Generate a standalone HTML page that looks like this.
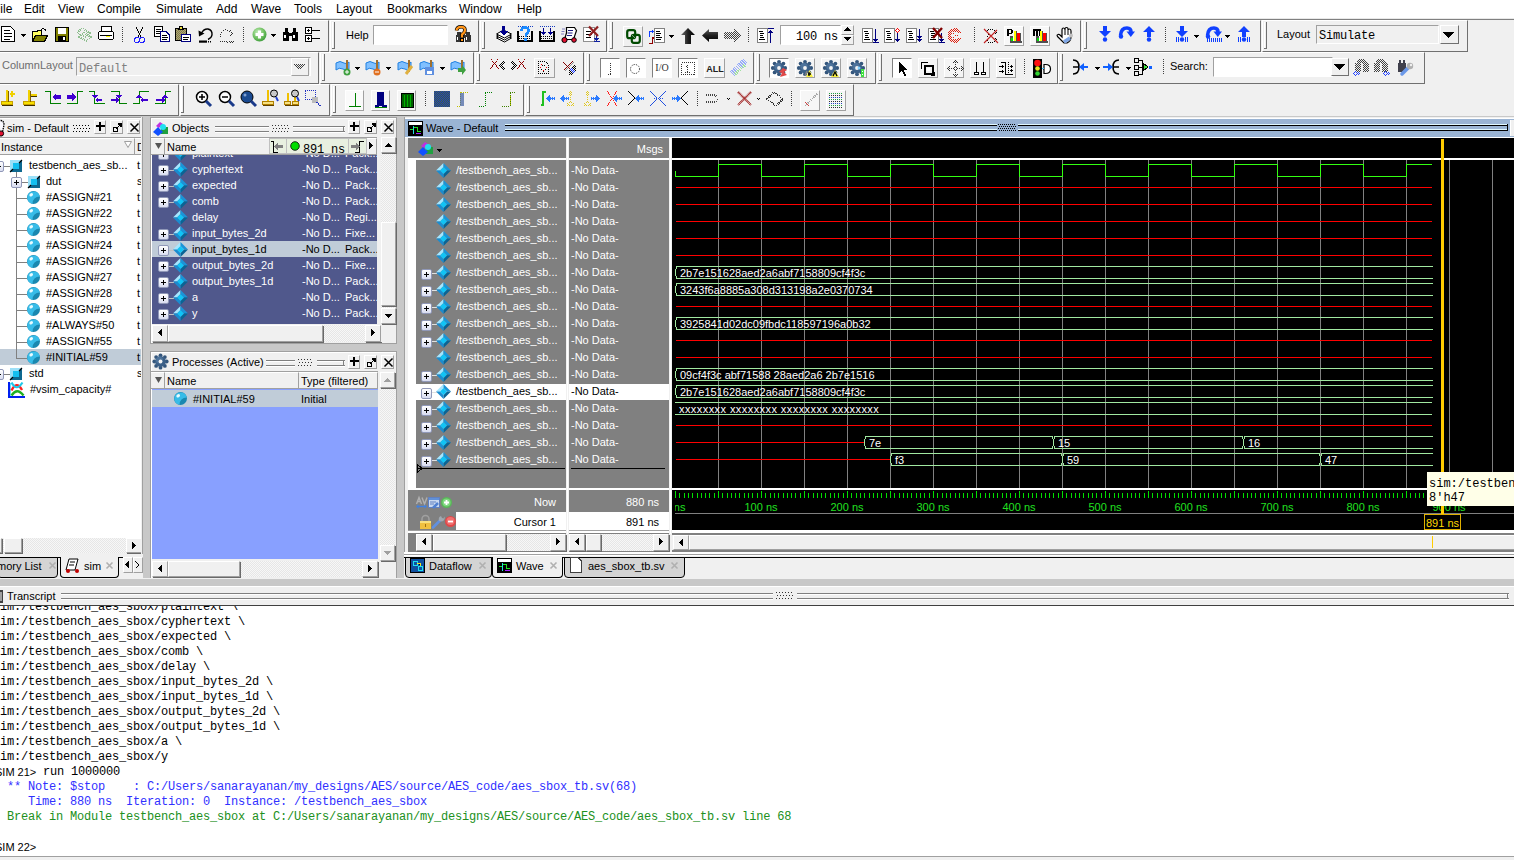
<!DOCTYPE html><html><head><meta charset="utf-8"><style>
html,body{margin:0;padding:0;}
body{width:1514px;height:860px;overflow:hidden;position:relative;background:#f0f0f0;font-family:'Liberation Sans',sans-serif;font-size:11px;}
div,svg,span{position:absolute;}
svg{overflow:visible}
</style></head><body>
<div style="left:0px;top:0px;width:1514px;height:18px;background:#ffffff;"></div>
<div style="left:0px;top:18px;width:1514px;height:1px;background:#e8e8e8;"></div>
<div style="left:0px;top:19px;width:1514px;height:1px;background:#808080;"></div>
<div style="left:-7px;top:2px;font-size:12px;line-height:14px;color:#000;white-space:pre;font-family:'Liberation Sans', sans-serif;">File</div>
<div style="left:24px;top:2px;font-size:12px;line-height:14px;color:#000;white-space:pre;font-family:'Liberation Sans', sans-serif;">Edit</div>
<div style="left:58px;top:2px;font-size:12px;line-height:14px;color:#000;white-space:pre;font-family:'Liberation Sans', sans-serif;">View</div>
<div style="left:97px;top:2px;font-size:12px;line-height:14px;color:#000;white-space:pre;font-family:'Liberation Sans', sans-serif;">Compile</div>
<div style="left:156px;top:2px;font-size:12px;line-height:14px;color:#000;white-space:pre;font-family:'Liberation Sans', sans-serif;">Simulate</div>
<div style="left:216px;top:2px;font-size:12px;line-height:14px;color:#000;white-space:pre;font-family:'Liberation Sans', sans-serif;">Add</div>
<div style="left:251px;top:2px;font-size:12px;line-height:14px;color:#000;white-space:pre;font-family:'Liberation Sans', sans-serif;">Wave</div>
<div style="left:294px;top:2px;font-size:12px;line-height:14px;color:#000;white-space:pre;font-family:'Liberation Sans', sans-serif;">Tools</div>
<div style="left:336px;top:2px;font-size:12px;line-height:14px;color:#000;white-space:pre;font-family:'Liberation Sans', sans-serif;">Layout</div>
<div style="left:387px;top:2px;font-size:12px;line-height:14px;color:#000;white-space:pre;font-family:'Liberation Sans', sans-serif;">Bookmarks</div>
<div style="left:459px;top:2px;font-size:12px;line-height:14px;color:#000;white-space:pre;font-family:'Liberation Sans', sans-serif;">Window</div>
<div style="left:517px;top:2px;font-size:12px;line-height:14px;color:#000;white-space:pre;font-family:'Liberation Sans', sans-serif;">Help</div>
<div style="left:0px;top:20px;width:1514px;height:96px;background:#f0f0f0;"></div>
<div style="left:-2px;top:20px;width:331px;height:32px;background:#f0f0f0;box-sizing:border-box;border-right:1px solid #707070;border-bottom:1px solid #707070;border-top:1px solid #fff;border-left:1px solid #fff;"></div>
<div style="left:330px;top:20px;width:149px;height:32px;background:#f0f0f0;box-sizing:border-box;border-right:1px solid #707070;border-bottom:1px solid #707070;border-top:1px solid #fff;border-left:1px solid #fff;"></div>
<div style="left:480px;top:20px;width:127px;height:32px;background:#f0f0f0;box-sizing:border-box;border-right:1px solid #707070;border-bottom:1px solid #707070;border-top:1px solid #fff;border-left:1px solid #fff;"></div>
<div style="left:608px;top:20px;width:473px;height:32px;background:#f0f0f0;box-sizing:border-box;border-right:1px solid #707070;border-bottom:1px solid #707070;border-top:1px solid #fff;border-left:1px solid #fff;"></div>
<div style="left:1082px;top:20px;width:179px;height:32px;background:#f0f0f0;box-sizing:border-box;border-right:1px solid #707070;border-bottom:1px solid #707070;border-top:1px solid #fff;border-left:1px solid #fff;"></div>
<div style="left:1262px;top:20px;width:206px;height:32px;background:#f0f0f0;box-sizing:border-box;border-right:1px solid #707070;border-bottom:1px solid #707070;border-top:1px solid #fff;border-left:1px solid #fff;"></div>
<div style="left:-2px;top:52px;width:321px;height:32px;background:#f0f0f0;box-sizing:border-box;border-right:1px solid #707070;border-bottom:1px solid #707070;border-top:1px solid #fff;border-left:1px solid #fff;"></div>
<div style="left:320px;top:52px;width:154px;height:32px;background:#f0f0f0;box-sizing:border-box;border-right:1px solid #707070;border-bottom:1px solid #707070;border-top:1px solid #fff;border-left:1px solid #fff;"></div>
<div style="left:475px;top:52px;width:109px;height:32px;background:#f0f0f0;box-sizing:border-box;border-right:1px solid #707070;border-bottom:1px solid #707070;border-top:1px solid #fff;border-left:1px solid #fff;"></div>
<div style="left:585px;top:52px;width:169px;height:32px;background:#f0f0f0;box-sizing:border-box;border-right:1px solid #707070;border-bottom:1px solid #707070;border-top:1px solid #fff;border-left:1px solid #fff;"></div>
<div style="left:755px;top:52px;width:121px;height:32px;background:#f0f0f0;box-sizing:border-box;border-right:1px solid #707070;border-bottom:1px solid #707070;border-top:1px solid #fff;border-left:1px solid #fff;"></div>
<div style="left:877px;top:52px;width:181px;height:32px;background:#f0f0f0;box-sizing:border-box;border-right:1px solid #707070;border-bottom:1px solid #707070;border-top:1px solid #fff;border-left:1px solid #fff;"></div>
<div style="left:1058px;top:52px;width:367px;height:32px;background:#f0f0f0;box-sizing:border-box;border-right:1px solid #707070;border-bottom:1px solid #707070;border-top:1px solid #fff;border-left:1px solid #fff;"></div>
<div style="left:-2px;top:84px;width:181px;height:32px;background:#f0f0f0;box-sizing:border-box;border-right:1px solid #707070;border-bottom:1px solid #707070;border-top:1px solid #fff;border-left:1px solid #fff;"></div>
<div style="left:180px;top:84px;width:150px;height:32px;background:#f0f0f0;box-sizing:border-box;border-right:1px solid #707070;border-bottom:1px solid #707070;border-top:1px solid #fff;border-left:1px solid #fff;"></div>
<div style="left:331px;top:84px;width:193px;height:32px;background:#f0f0f0;box-sizing:border-box;border-right:1px solid #707070;border-bottom:1px solid #707070;border-top:1px solid #fff;border-left:1px solid #fff;"></div>
<div style="left:525px;top:84px;width:329px;height:32px;background:#f0f0f0;box-sizing:border-box;border-right:1px solid #707070;border-bottom:1px solid #707070;border-top:1px solid #fff;border-left:1px solid #fff;"></div>
<div style="left:332px;top:22px;width:1px;height:27px;background:#fff;"></div>
<div style="left:334px;top:22px;width:1px;height:27px;background:#707070;"></div>
<div style="left:332px;top:48px;width:3px;height:1px;background:#707070;"></div>
<div style="left:482px;top:22px;width:1px;height:27px;background:#fff;"></div>
<div style="left:484px;top:22px;width:1px;height:27px;background:#707070;"></div>
<div style="left:482px;top:48px;width:3px;height:1px;background:#707070;"></div>
<div style="left:610px;top:22px;width:1px;height:27px;background:#fff;"></div>
<div style="left:612px;top:22px;width:1px;height:27px;background:#707070;"></div>
<div style="left:610px;top:48px;width:3px;height:1px;background:#707070;"></div>
<div style="left:1084px;top:22px;width:1px;height:27px;background:#fff;"></div>
<div style="left:1086px;top:22px;width:1px;height:27px;background:#707070;"></div>
<div style="left:1084px;top:48px;width:3px;height:1px;background:#707070;"></div>
<div style="left:1264px;top:22px;width:1px;height:27px;background:#fff;"></div>
<div style="left:1266px;top:22px;width:1px;height:27px;background:#707070;"></div>
<div style="left:1264px;top:48px;width:3px;height:1px;background:#707070;"></div>
<div style="left:322px;top:54px;width:1px;height:27px;background:#fff;"></div>
<div style="left:324px;top:54px;width:1px;height:27px;background:#707070;"></div>
<div style="left:322px;top:80px;width:3px;height:1px;background:#707070;"></div>
<div style="left:477px;top:54px;width:1px;height:27px;background:#fff;"></div>
<div style="left:479px;top:54px;width:1px;height:27px;background:#707070;"></div>
<div style="left:477px;top:80px;width:3px;height:1px;background:#707070;"></div>
<div style="left:587px;top:54px;width:1px;height:27px;background:#fff;"></div>
<div style="left:589px;top:54px;width:1px;height:27px;background:#707070;"></div>
<div style="left:587px;top:80px;width:3px;height:1px;background:#707070;"></div>
<div style="left:757px;top:54px;width:1px;height:27px;background:#fff;"></div>
<div style="left:759px;top:54px;width:1px;height:27px;background:#707070;"></div>
<div style="left:757px;top:80px;width:3px;height:1px;background:#707070;"></div>
<div style="left:879px;top:54px;width:1px;height:27px;background:#fff;"></div>
<div style="left:881px;top:54px;width:1px;height:27px;background:#707070;"></div>
<div style="left:879px;top:80px;width:3px;height:1px;background:#707070;"></div>
<div style="left:1060px;top:54px;width:1px;height:27px;background:#fff;"></div>
<div style="left:1062px;top:54px;width:1px;height:27px;background:#707070;"></div>
<div style="left:1060px;top:80px;width:3px;height:1px;background:#707070;"></div>
<div style="left:181px;top:86px;width:1px;height:27px;background:#fff;"></div>
<div style="left:183px;top:86px;width:1px;height:27px;background:#707070;"></div>
<div style="left:181px;top:112px;width:3px;height:1px;background:#707070;"></div>
<div style="left:333px;top:86px;width:1px;height:27px;background:#fff;"></div>
<div style="left:335px;top:86px;width:1px;height:27px;background:#707070;"></div>
<div style="left:333px;top:112px;width:3px;height:1px;background:#707070;"></div>
<div style="left:527px;top:86px;width:1px;height:27px;background:#fff;"></div>
<div style="left:529px;top:86px;width:1px;height:27px;background:#707070;"></div>
<div style="left:527px;top:112px;width:3px;height:1px;background:#707070;"></div>
<svg style="left:1px;top:26px;" width="14" height="16" viewBox="0 0 14 16" shape-rendering="crispEdges"><path d="M0.5,0.5 H9.5 L13.5,4.5 V15.5 H0.5 Z" fill="#fff" stroke="#000"/><rect x="3" y="4" width="6" height="1" fill="#000"/><rect x="3" y="7" width="8" height="1" fill="#000"/><rect x="3" y="10" width="8" height="1" fill="#000"/><rect x="3" y="13" width="6" height="1" fill="#000"/></svg>
<svg style="left:21px;top:34px;" width="6" height="4" viewBox="0 0 6 4" shape-rendering="crispEdges"><polygon points="0,0 5,0 2.5,3" fill="#000"/></svg>
<svg style="left:32px;top:28px;" width="16" height="14" viewBox="0 0 16 14" shape-rendering="crispEdges"><path d="M0.5,3.5 H5 L6,2 H9 V13.5 H0.5Z" fill="#ffff60" stroke="#000"/><path d="M0.5,13.5 L3.5,7.5 H15.5 L12.5,13.5Z" fill="#808000" stroke="#000"/><path d="M9,2 Q12,-1 14,3" fill="none" stroke="#000"/></svg>
<svg style="left:55px;top:27px;" width="14" height="15" viewBox="0 0 14 15" shape-rendering="crispEdges"><rect x="0.5" y="0.5" width="13" height="14" fill="#808000" stroke="#000"/><rect x="3" y="1" width="8" height="6" fill="#fff"/><rect x="3" y="9" width="8" height="5" fill="#000"/><rect x="8" y="10" width="2" height="3" fill="#fff"/></svg>
<svg style="left:76px;top:26px;" width="16" height="16" viewBox="0 0 16 16" shape-rendering="crispEdges"><path d="M1,7 L6,2 L14,7 L9,11Z" fill="none" stroke="#8fbf8f" stroke-width="2" stroke-dasharray="1 1"/><path d="M3,11 L8,7 L15,11 L10,15Z" fill="none" stroke="#8fbf8f" stroke-width="2" stroke-dasharray="1 1"/></svg>
<svg style="left:98px;top:26px;" width="16" height="15" viewBox="0 0 16 15" shape-rendering="crispEdges"><rect x="3.5" y="0.5" width="10" height="5" fill="#fff" stroke="#000"/><rect x="0.5" y="5.5" width="15" height="8" rx="2" fill="#fff" stroke="#000"/><rect x="2" y="9" width="12" height="1" fill="#000"/><rect x="8" y="10" width="4" height="1" fill="#ff0"/></svg>
<svg style="left:122px;top:27px;" width="1" height="16" viewBox="0 0 1 16" shape-rendering="crispEdges"><rect x="0" y="0" width="1" height="1" fill="#404040"/><rect x="0" y="2" width="1" height="1" fill="#404040"/><rect x="0" y="4" width="1" height="1" fill="#404040"/><rect x="0" y="6" width="1" height="1" fill="#404040"/><rect x="0" y="8" width="1" height="1" fill="#404040"/><rect x="0" y="10" width="1" height="1" fill="#404040"/><rect x="0" y="12" width="1" height="1" fill="#404040"/><rect x="0" y="14" width="1" height="1" fill="#404040"/></svg>
<svg style="left:134px;top:27px;" width="11" height="16" viewBox="0 0 11 16" shape-rendering="crispEdges"><path d="M2,0 L7,10 M9,0 L4,10" stroke="#000" stroke-width="1"/><circle cx="3" cy="13" r="2.5" fill="none" stroke="#22f"/><circle cx="8" cy="13" r="2.5" fill="none" stroke="#22f"/></svg>
<svg style="left:154px;top:26px;" width="16" height="16" viewBox="0 0 16 16" shape-rendering="crispEdges"><rect x="0.5" y="0.5" width="8" height="10" fill="#fff" stroke="#000"/><path d="M2,3.5 H7 M2,5.5 H7 M2,7.5 H6" stroke="#000"/><path d="M6.5,5.5 H12 L15.5,9 V15.5 H6.5Z" fill="#fff" stroke="#000080"/><path d="M8,9.5 H13 M8,11.5 H14 M8,13.5 H13" stroke="#000"/></svg>
<svg style="left:175px;top:26px;" width="16" height="16" viewBox="0 0 16 16" shape-rendering="crispEdges"><rect x="0.5" y="2.5" width="11" height="12" fill="#807a50" stroke="#000"/><rect x="1" y="3" width="1" height="1" fill="#b0a870"/><rect x="1" y="5" width="1" height="1" fill="#b0a870"/><rect x="1" y="7" width="1" height="1" fill="#b0a870"/><rect x="1" y="9" width="1" height="1" fill="#b0a870"/><rect x="1" y="11" width="1" height="1" fill="#b0a870"/><rect x="1" y="13" width="1" height="1" fill="#b0a870"/><rect x="2" y="4" width="1" height="1" fill="#b0a870"/><rect x="2" y="6" width="1" height="1" fill="#b0a870"/><rect x="2" y="8" width="1" height="1" fill="#b0a870"/><rect x="2" y="10" width="1" height="1" fill="#b0a870"/><rect x="2" y="12" width="1" height="1" fill="#b0a870"/><rect x="3" y="3" width="1" height="1" fill="#b0a870"/><rect x="3" y="5" width="1" height="1" fill="#b0a870"/><rect x="3" y="7" width="1" height="1" fill="#b0a870"/><rect x="3" y="9" width="1" height="1" fill="#b0a870"/><rect x="3" y="11" width="1" height="1" fill="#b0a870"/><rect x="3" y="13" width="1" height="1" fill="#b0a870"/><rect x="4" y="4" width="1" height="1" fill="#b0a870"/><rect x="4" y="6" width="1" height="1" fill="#b0a870"/><rect x="4" y="8" width="1" height="1" fill="#b0a870"/><rect x="4" y="10" width="1" height="1" fill="#b0a870"/><rect x="4" y="12" width="1" height="1" fill="#b0a870"/><rect x="5" y="3" width="1" height="1" fill="#b0a870"/><rect x="5" y="5" width="1" height="1" fill="#b0a870"/><rect x="5" y="7" width="1" height="1" fill="#b0a870"/><rect x="5" y="9" width="1" height="1" fill="#b0a870"/><rect x="5" y="11" width="1" height="1" fill="#b0a870"/><rect x="5" y="13" width="1" height="1" fill="#b0a870"/><rect x="6" y="4" width="1" height="1" fill="#b0a870"/><rect x="6" y="6" width="1" height="1" fill="#b0a870"/><rect x="6" y="8" width="1" height="1" fill="#b0a870"/><rect x="6" y="10" width="1" height="1" fill="#b0a870"/><rect x="6" y="12" width="1" height="1" fill="#b0a870"/><rect x="7" y="3" width="1" height="1" fill="#b0a870"/><rect x="7" y="5" width="1" height="1" fill="#b0a870"/><rect x="7" y="7" width="1" height="1" fill="#b0a870"/><rect x="7" y="9" width="1" height="1" fill="#b0a870"/><rect x="7" y="11" width="1" height="1" fill="#b0a870"/><rect x="7" y="13" width="1" height="1" fill="#b0a870"/><rect x="8" y="4" width="1" height="1" fill="#b0a870"/><rect x="8" y="6" width="1" height="1" fill="#b0a870"/><rect x="8" y="8" width="1" height="1" fill="#b0a870"/><rect x="8" y="10" width="1" height="1" fill="#b0a870"/><rect x="8" y="12" width="1" height="1" fill="#b0a870"/><rect x="9" y="3" width="1" height="1" fill="#b0a870"/><rect x="9" y="5" width="1" height="1" fill="#b0a870"/><rect x="9" y="7" width="1" height="1" fill="#b0a870"/><rect x="9" y="9" width="1" height="1" fill="#b0a870"/><rect x="9" y="11" width="1" height="1" fill="#b0a870"/><rect x="9" y="13" width="1" height="1" fill="#b0a870"/><rect x="10" y="4" width="1" height="1" fill="#b0a870"/><rect x="10" y="6" width="1" height="1" fill="#b0a870"/><rect x="10" y="8" width="1" height="1" fill="#b0a870"/><rect x="10" y="10" width="1" height="1" fill="#b0a870"/><rect x="10" y="12" width="1" height="1" fill="#b0a870"/><path d="M3.5,3.5 L5,0.5 H7 L8.5,3.5Z" fill="#f0e040" stroke="#000"/><rect x="6.5" y="8.5" width="9" height="7" fill="#fff" stroke="#000080"/><path d="M8,11.5 H14 M8,13.5 H13" stroke="#000"/></svg>
<svg style="left:198px;top:27px;" width="16" height="16" viewBox="0 0 16 16"><path d="M3.5,6 Q6,1.5 10,2 Q14.5,3 14,8 Q13.5,11 10,12.5" fill="none" stroke="#000" stroke-width="1.4"/><path d="M0.5,3.5 L6.5,6.5 L1,9.5Z" fill="#000"/><rect x="1" y="13.5" width="8" height="2.2" fill="#000"/><rect x="10" y="14" width="1" height="1.5" fill="#000"/><rect x="12" y="14" width="1" height="1.5" fill="#000"/></svg>
<svg style="left:219px;top:27px;" width="16" height="16" viewBox="0 0 16 16" shape-rendering="crispEdges"><rect x="1" y="9" width="1" height="1" fill="#303030"/><rect x="1" y="7" width="1" height="1" fill="#303030"/><rect x="2" y="5" width="1" height="1" fill="#303030"/><rect x="4" y="3" width="1" height="1" fill="#303030"/><rect x="6" y="2" width="1" height="1" fill="#303030"/><rect x="8" y="3" width="1" height="1" fill="#303030"/><rect x="10" y="4" width="1" height="1" fill="#303030"/><rect x="12" y="5" width="1" height="1" fill="#303030"/><rect x="11" y="3" width="1" height="1" fill="#303030"/><rect x="13" y="6" width="1" height="1" fill="#303030"/><rect x="12" y="7" width="1" height="1" fill="#303030"/><rect x="11" y="8" width="1" height="1" fill="#303030"/><rect x="1" y="14" width="1" height="1" fill="#303030"/><rect x="3" y="14" width="1" height="1" fill="#303030"/><rect x="5" y="14" width="1" height="1" fill="#303030"/><rect x="7" y="14" width="1" height="1" fill="#303030"/><rect x="8" y="15" width="1" height="1" fill="#303030"/><rect x="10" y="14" width="1" height="1" fill="#303030"/><rect x="11" y="15" width="1" height="1" fill="#303030"/><rect x="12" y="14" width="1" height="1" fill="#303030"/><rect x="13" y="15" width="1" height="1" fill="#303030"/><rect x="14" y="14" width="1" height="1" fill="#303030"/></svg>
<svg style="left:243px;top:27px;" width="1" height="16" viewBox="0 0 1 16" shape-rendering="crispEdges"><rect x="0" y="0" width="1" height="1" fill="#404040"/><rect x="0" y="2" width="1" height="1" fill="#404040"/><rect x="0" y="4" width="1" height="1" fill="#404040"/><rect x="0" y="6" width="1" height="1" fill="#404040"/><rect x="0" y="8" width="1" height="1" fill="#404040"/><rect x="0" y="10" width="1" height="1" fill="#404040"/><rect x="0" y="12" width="1" height="1" fill="#404040"/><rect x="0" y="14" width="1" height="1" fill="#404040"/></svg>
<svg style="left:252px;top:27px;" width="15" height="15" viewBox="0 0 15 15"><defs><radialGradient id="ggp" cx="0.4" cy="0.35" r="0.7"><stop offset="0" stop-color="#c8f0c0"/><stop offset="0.6" stop-color="#70c060"/><stop offset="1" stop-color="#3a9a3a"/></radialGradient></defs><circle cx="7.5" cy="7.5" r="7" fill="url(#ggp)"/><rect x="3.5" y="6" width="8" height="3" fill="#fff"/><rect x="6" y="3.5" width="3" height="8" fill="#fff"/></svg>
<svg style="left:271px;top:34px;" width="6" height="4" viewBox="0 0 6 4" shape-rendering="crispEdges"><polygon points="0,0 5,0 2.5,3" fill="#000"/></svg>
<svg style="left:282px;top:27px;" width="17" height="14" viewBox="0 0 17 14" shape-rendering="crispEdges"><rect x="1" y="5" width="6" height="9" rx="1" fill="#000"/><rect x="10" y="5" width="6" height="9" rx="1" fill="#000"/><rect x="3" y="1" width="3" height="5" fill="#000"/><rect x="11" y="1" width="3" height="5" fill="#000"/><rect x="6" y="6" width="5" height="3" fill="#000"/><rect x="2" y="8" width="2" height="3" fill="#fff"/><rect x="11" y="8" width="2" height="3" fill="#fff"/></svg>
<svg style="left:305px;top:27px;" width="15" height="15" viewBox="0 0 15 15" shape-rendering="crispEdges"><rect x="0.5" y="0.5" width="6" height="6" fill="#fff" stroke="#000"/><rect x="0.5" y="8.5" width="6" height="6" fill="#fff" stroke="#000"/><rect x="2" y="3" width="3" height="1" fill="#000"/><rect x="3" y="2" width="1" height="3" fill="#000"/><rect x="2" y="11" width="3" height="1" fill="#000"/><rect x="3" y="10" width="1" height="3" fill="#000"/><rect x="7" y="3" width="8" height="1" fill="#000"/><rect x="7" y="11" width="8" height="1" fill="#000"/></svg>
<div style="left:346px;top:29px;font-size:11px;line-height:13px;color:#000;white-space:pre;font-family:'Liberation Sans', sans-serif;">Help</div>
<div style="left:373px;top:25px;width:75px;height:20px;background:#fff;box-sizing:border-box;border:1px solid;border-color:#a0a0a0 #fff #fff #a0a0a0;"></div>
<svg style="left:455px;top:26px;" width="16" height="16" viewBox="0 0 16 16" shape-rendering="crispEdges"><rect x="1" y="9" width="6" height="7" fill="#333"/><rect x="2" y="6" width="4" height="4" fill="#333"/><rect x="10" y="9" width="6" height="7" fill="#333"/><rect x="11" y="6" width="4" height="4" fill="#333"/><rect x="6" y="9" width="5" height="3" fill="#333"/><rect x="2" y="11" width="1" height="3" fill="#fff"/><rect x="11" y="11" width="1" height="3" fill="#fff"/></svg>
<svg style="left:455px;top:26px;" width="16" height="16" viewBox="0 0 16 16"><path d="M1.5,4.5 Q2,0.8 6,0.8 Q10,0.8 10,4 Q10,6.5 7,8.5 V11.5" fill="none" stroke="#000" stroke-width="3.6"/><path d="M1.5,4.5 Q2,0.8 6,0.8 Q10,0.8 10,4 Q10,6.5 7,8.5 V11.5" fill="none" stroke="#ff9418" stroke-width="2.2"/><rect x="5.5" y="12.5" width="3" height="3" fill="#ff9418" stroke="#000"/></svg>
<svg style="left:496px;top:26px;" width="16" height="17" viewBox="0 0 16 17"><path d="M0.5,12 L7.5,8 L15.5,12 L8.5,16Z" fill="#fff" stroke="#000"/><path d="M0.5,10 L7.5,6 L15.5,10 L8.5,14Z" fill="#fff" stroke="#000"/><path d="M0.5,8 L7.5,4 L15.5,8 L8.5,12Z" fill="#fff" stroke="#000"/></svg></svg>
<svg style="left:496px;top:26px;" width="16" height="17" viewBox="0 0 16 17" shape-rendering="crispEdges"><rect x="6" y="0" width="3" height="5" fill="#00008c"/><path d="M3,5 H12 L7.5,9.5Z" fill="#00008c"/></svg>
<svg style="left:517px;top:26px;" width="16" height="16" viewBox="0 0 16 16" shape-rendering="crispEdges"><rect x="0" y="5" width="2" height="11" fill="#000"/><rect x="14" y="5" width="2" height="11" fill="#000"/><rect x="0" y="14" width="16" height="2" fill="#000"/><rect x="2" y="10" width="1" height="1" fill="#000"/><rect x="2" y="12" width="1" height="1" fill="#000"/><rect x="4" y="10" width="1" height="1" fill="#000"/><rect x="4" y="12" width="1" height="1" fill="#000"/><rect x="6" y="10" width="1" height="1" fill="#000"/><rect x="6" y="12" width="1" height="1" fill="#000"/><rect x="8" y="10" width="1" height="1" fill="#000"/><rect x="8" y="12" width="1" height="1" fill="#000"/><rect x="10" y="10" width="1" height="1" fill="#000"/><rect x="10" y="12" width="1" height="1" fill="#000"/><rect x="12" y="10" width="1" height="1" fill="#000"/><rect x="12" y="12" width="1" height="1" fill="#000"/><rect x="14" y="10" width="1" height="1" fill="#000"/><rect x="14" y="12" width="1" height="1" fill="#000"/><rect x="1" y="0" width="1" height="1" fill="#1a40c0"/><rect x="3" y="0" width="1" height="1" fill="#1a40c0"/><rect x="5" y="0" width="1" height="1" fill="#1a40c0"/><rect x="7" y="0" width="1" height="1" fill="#1a40c0"/><rect x="9" y="0" width="1" height="1" fill="#1a40c0"/><rect x="11" y="0" width="1" height="1" fill="#1a40c0"/><rect x="13" y="0" width="1" height="1" fill="#1a40c0"/><rect x="15" y="0" width="1" height="1" fill="#1a40c0"/><path d="M4.5,5 Q4.5,1.5 8,1.5 Q11.5,1.5 11.5,5 Q11.5,7 9,8.5 V11" fill="none" stroke="#1a8aff" stroke-width="2.6"/><rect x="7" y="12" width="3" height="3" fill="#1a8aff"/></svg>
<svg style="left:539px;top:26px;" width="16" height="16" viewBox="0 0 16 16" shape-rendering="crispEdges"><rect x="0" y="5" width="2" height="11" fill="#000"/><rect x="14" y="5" width="2" height="11" fill="#000"/><rect x="0" y="14" width="16" height="2" fill="#000"/><rect x="2" y="10" width="1" height="1" fill="#000"/><rect x="2" y="12" width="1" height="1" fill="#000"/><rect x="4" y="10" width="1" height="1" fill="#000"/><rect x="4" y="12" width="1" height="1" fill="#000"/><rect x="6" y="10" width="1" height="1" fill="#000"/><rect x="6" y="12" width="1" height="1" fill="#000"/><rect x="8" y="10" width="1" height="1" fill="#000"/><rect x="8" y="12" width="1" height="1" fill="#000"/><rect x="10" y="10" width="1" height="1" fill="#000"/><rect x="10" y="12" width="1" height="1" fill="#000"/><rect x="12" y="10" width="1" height="1" fill="#000"/><rect x="12" y="12" width="1" height="1" fill="#000"/><rect x="14" y="10" width="1" height="1" fill="#000"/><rect x="14" y="12" width="1" height="1" fill="#000"/><rect x="1" y="0" width="1" height="1" fill="#1a40c0"/><rect x="3" y="0" width="1" height="1" fill="#1a40c0"/><rect x="5" y="0" width="1" height="1" fill="#1a40c0"/><rect x="7" y="0" width="1" height="1" fill="#1a40c0"/><rect x="9" y="0" width="1" height="1" fill="#1a40c0"/><rect x="11" y="0" width="1" height="1" fill="#1a40c0"/><rect x="13" y="0" width="1" height="1" fill="#1a40c0"/><rect x="15" y="0" width="1" height="1" fill="#1a40c0"/><path d="M2,6 H7 L4.5,9Z M9,6 H14 L11.5,9Z" fill="#00008c"/><rect x="4" y="2" width="1" height="4" fill="#00008c"/><rect x="11" y="2" width="1" height="4" fill="#00008c"/></svg>
<svg style="left:561px;top:26px;" width="17" height="17" viewBox="0 0 17 17"><path d="M5.5,1.5 H13.5 L15.5,4.5 L12.5,13.5 H3.5 L5.5,7Z" fill="#fff" stroke="#000" stroke-width="1.2"/><path d="M7,4.5 H12 M6.5,7 H11.5 M6,9.5 H11" stroke="#1a1a80"/><path d="M1,3 H4 M0.5,5.5 H3.5 M0,8 H3" stroke="#8080c0"/><circle cx="3.5" cy="14" r="2.6" fill="#e01030" stroke="#000"/><circle cx="13" cy="14" r="2.3" fill="#e01030" stroke="#000"/></svg>
<svg style="left:583px;top:26px;" width="18" height="17" viewBox="0 0 18 17" shape-rendering="crispEdges"><rect x="0.5" y="1.5" width="11" height="14" fill="#fff" stroke="#909090"/><path d="M3,5.5 H8 M3,8.5 H9 M3,11.5 H8" stroke="#000"/><rect x="13" y="8" width="1" height="6" fill="#1020a0"/><path d="M11,12 H16 L13.5,15Z" fill="#1020a0"/><rect x="11" y="15" width="6" height="1" fill="#1020a0"/></svg>
<svg style="left:583px;top:25px;" width="18" height="14" viewBox="0 0 18 14"><path d="M6,1.5 L15,11 M15,1.5 L6,11" stroke="#902020" stroke-width="2.2"/></svg>
<div style="left:623px;top:26px;width:20px;height:21px;background:#f0f0f0;box-sizing:border-box;border:1px solid;border-color:#fff #a0a0a0 #a0a0a0 #fff;"></div>
<svg style="left:626px;top:29px;" width="15" height="15" viewBox="0 0 15 15"><rect x="1.2" y="1.2" width="8" height="8" rx="2" fill="none" stroke="#004a00" stroke-width="2.2"/><rect x="5.8" y="5.8" width="8" height="8" rx="2" fill="none" stroke="#004a00" stroke-width="2.2"/><path d="M5,5 L10,10" stroke="#80a080"/></svg>
<svg style="left:649px;top:28px;" width="17" height="16" viewBox="0 0 17 16" shape-rendering="crispEdges"><rect x="5.5" y="0.5" width="10" height="14" fill="#fff" stroke="#808080"/><path d="M7,3.5 H11 M7,5.5 H12 M7,7.5 H11 M7,9.5 H13 M7,11.5 H12" stroke="#000"/><rect x="0" y="3" width="1" height="6" fill="#1040ff"/><path d="M0,3 H3 V1 L5,3.5 L3,6 V4 H1Z" fill="#1040ff"/><path d="M0,15 H3 V9 H5 V11 H4 V16 H0Z" fill="#900000"/></svg>
<svg style="left:669px;top:35px;" width="6" height="4" viewBox="0 0 6 4" shape-rendering="crispEdges"><polygon points="0,0 5,0 2.5,3" fill="#000"/></svg>
<svg style="left:681px;top:28px;" width="14" height="16" viewBox="0 0 14 16"><defs><linearGradient id="ga1" x1="0" x2="1"><stop offset="0" stop-color="#707070"/><stop offset="0.5" stop-color="#202020"/><stop offset="1" stop-color="#000"/></linearGradient></defs><path d="M7,0 L14,7 H10 V16 H4 V7 H0Z" fill="url(#ga1)"/></svg>
<svg style="left:702px;top:29px;" width="16" height="13" viewBox="0 0 16 13"><defs><linearGradient id="ga2" x1="0" y1="0" x2="0" y2="1"><stop offset="0" stop-color="#606060"/><stop offset="0.5" stop-color="#202020"/><stop offset="1" stop-color="#000"/></linearGradient></defs><path d="M0,6.5 L7,0 V3 H16 V10 H7 V13Z" fill="url(#ga2)"/></svg>
<svg style="left:724px;top:29px;" width="17" height="13" viewBox="0 0 17 13" shape-rendering="crispEdges"><rect x="10" y="0" width="1" height="1" fill="#404040"/><rect x="11" y="1" width="1" height="1" fill="#404040"/><rect x="10" y="2" width="1" height="1" fill="#404040"/><rect x="12" y="2" width="1" height="1" fill="#404040"/><rect x="1" y="3" width="1" height="1" fill="#404040"/><rect x="3" y="3" width="1" height="1" fill="#404040"/><rect x="5" y="3" width="1" height="1" fill="#404040"/><rect x="7" y="3" width="1" height="1" fill="#404040"/><rect x="9" y="3" width="1" height="1" fill="#404040"/><rect x="11" y="3" width="1" height="1" fill="#404040"/><rect x="13" y="3" width="1" height="1" fill="#404040"/><rect x="0" y="4" width="1" height="1" fill="#404040"/><rect x="2" y="4" width="1" height="1" fill="#404040"/><rect x="4" y="4" width="1" height="1" fill="#404040"/><rect x="6" y="4" width="1" height="1" fill="#404040"/><rect x="8" y="4" width="1" height="1" fill="#404040"/><rect x="10" y="4" width="1" height="1" fill="#404040"/><rect x="12" y="4" width="1" height="1" fill="#404040"/><rect x="14" y="4" width="1" height="1" fill="#404040"/><rect x="1" y="5" width="1" height="1" fill="#404040"/><rect x="3" y="5" width="1" height="1" fill="#404040"/><rect x="5" y="5" width="1" height="1" fill="#404040"/><rect x="7" y="5" width="1" height="1" fill="#404040"/><rect x="9" y="5" width="1" height="1" fill="#404040"/><rect x="11" y="5" width="1" height="1" fill="#404040"/><rect x="13" y="5" width="1" height="1" fill="#404040"/><rect x="15" y="5" width="1" height="1" fill="#404040"/><rect x="0" y="6" width="1" height="1" fill="#404040"/><rect x="2" y="6" width="1" height="1" fill="#404040"/><rect x="4" y="6" width="1" height="1" fill="#404040"/><rect x="6" y="6" width="1" height="1" fill="#404040"/><rect x="8" y="6" width="1" height="1" fill="#404040"/><rect x="10" y="6" width="1" height="1" fill="#404040"/><rect x="12" y="6" width="1" height="1" fill="#404040"/><rect x="14" y="6" width="1" height="1" fill="#404040"/><rect x="16" y="6" width="1" height="1" fill="#404040"/><rect x="1" y="7" width="1" height="1" fill="#404040"/><rect x="3" y="7" width="1" height="1" fill="#404040"/><rect x="5" y="7" width="1" height="1" fill="#404040"/><rect x="7" y="7" width="1" height="1" fill="#404040"/><rect x="9" y="7" width="1" height="1" fill="#404040"/><rect x="11" y="7" width="1" height="1" fill="#404040"/><rect x="13" y="7" width="1" height="1" fill="#404040"/><rect x="15" y="7" width="1" height="1" fill="#404040"/><rect x="0" y="8" width="1" height="1" fill="#404040"/><rect x="2" y="8" width="1" height="1" fill="#404040"/><rect x="4" y="8" width="1" height="1" fill="#404040"/><rect x="6" y="8" width="1" height="1" fill="#404040"/><rect x="8" y="8" width="1" height="1" fill="#404040"/><rect x="10" y="8" width="1" height="1" fill="#404040"/><rect x="12" y="8" width="1" height="1" fill="#404040"/><rect x="14" y="8" width="1" height="1" fill="#404040"/><rect x="1" y="9" width="1" height="1" fill="#404040"/><rect x="3" y="9" width="1" height="1" fill="#404040"/><rect x="5" y="9" width="1" height="1" fill="#404040"/><rect x="7" y="9" width="1" height="1" fill="#404040"/><rect x="9" y="9" width="1" height="1" fill="#404040"/><rect x="11" y="9" width="1" height="1" fill="#404040"/><rect x="13" y="9" width="1" height="1" fill="#404040"/><rect x="10" y="10" width="1" height="1" fill="#404040"/><rect x="12" y="10" width="1" height="1" fill="#404040"/><rect x="11" y="11" width="1" height="1" fill="#404040"/><rect x="10" y="12" width="1" height="1" fill="#404040"/></svg>
<svg style="left:748px;top:27px;" width="1" height="16" viewBox="0 0 1 16" shape-rendering="crispEdges"><rect x="0" y="0" width="1" height="1" fill="#404040"/><rect x="0" y="2" width="1" height="1" fill="#404040"/><rect x="0" y="4" width="1" height="1" fill="#404040"/><rect x="0" y="6" width="1" height="1" fill="#404040"/><rect x="0" y="8" width="1" height="1" fill="#404040"/><rect x="0" y="10" width="1" height="1" fill="#404040"/><rect x="0" y="12" width="1" height="1" fill="#404040"/><rect x="0" y="14" width="1" height="1" fill="#404040"/></svg>
<svg style="left:757px;top:28px;" width="17" height="16" viewBox="0 0 17 16" shape-rendering="crispEdges"><rect x="0.5" y="0.5" width="10" height="14" fill="#fff" stroke="#808080"/><path d="M2,3.5 H6 M3,5.5 H7 M3,7.5 H6 M3,9.5 H7 M2,11.5 H8" stroke="#000"/><rect x="11" y="0" width="6" height="1" fill="#000080"/><rect x="13" y="2" width="1" height="13" fill="#000080"/><path d="M10.5,5 H16.5 L13.5,1.5Z" fill="#000080"/></svg>
<div style="left:780px;top:25px;width:61px;height:20px;background:#fff;box-sizing:border-box;border:1px solid;border-color:#a0a0a0 #fff #fff #a0a0a0;"></div>
<div style="left:782px;top:30px;width:56px;text-align:right;font-family:'Liberation Mono', monospace;font-size:12px;letter-spacing:-0.2px;line-height:14px;color:#000">100 ns</div>
<div style="left:841px;top:25px;width:13px;height:10px;background:#f0f0f0;box-sizing:border-box;border:1px solid;border-color:#fff #a0a0a0 #a0a0a0 #fff;"></div>
<div style="left:841px;top:35px;width:13px;height:10px;background:#f0f0f0;box-sizing:border-box;border:1px solid;border-color:#fff #a0a0a0 #a0a0a0 #fff;"></div>
<svg style="left:844px;top:27px;" width="8" height="5" viewBox="0 0 8 5" shape-rendering="crispEdges"><polygon points="3.5,0 7,4 0,4" fill="#000"/></svg>
<svg style="left:844px;top:37px;" width="8" height="5" viewBox="0 0 8 5" shape-rendering="crispEdges"><polygon points="0,0 7,0 3.5,4" fill="#000"/></svg>
<svg style="left:862px;top:28px;" width="16" height="16" viewBox="0 0 16 16" shape-rendering="crispEdges"><rect x="0.5" y="0.5" width="10" height="14" fill="#fff" stroke="#808080"/><path d="M2,3.5 H6 M3,5.5 H7 M3,7.5 H6 M3,9.5 H7 M2,11.5 H8" stroke="#000"/><rect x="13" y="1" width="1" height="13" fill="#000080"/><path d="M10.5,11 H16.5 L13.5,14Z" fill="#000080"/><rect x="11" y="14" width="6" height="1" fill="#000080"/></svg>
<svg style="left:884px;top:28px;" width="16" height="16" viewBox="0 0 16 16" shape-rendering="crispEdges"><rect x="0.5" y="0.5" width="10" height="14" fill="#fff" stroke="#808080"/><path d="M2,3.5 H6 M3,5.5 H7 M3,7.5 H6 M3,9.5 H7 M2,11.5 H8" stroke="#000"/><rect x="13" y="5" width="1" height="9" fill="#000080"/><path d="M10.5,11 H16.5 L13.5,14Z" fill="#000080"/><path d="M13.5,0.5 L15.5,2.5 L13.5,4.5 L11.5,2.5Z" fill="#fff" stroke="#ff0000"/></svg>
<svg style="left:906px;top:28px;" width="16" height="16" viewBox="0 0 16 16" shape-rendering="crispEdges"><rect x="0.5" y="0.5" width="10" height="14" fill="#fff" stroke="#808080"/><path d="M2,3.5 H6 M3,5.5 H7 M3,7.5 H6 M3,9.5 H7 M2,11.5 H8" stroke="#000"/><rect x="13" y="1" width="1" height="12" fill="#000080"/><path d="M10.5,8 H16.5 L13.5,11Z M10.5,11 H16.5 L13.5,14Z" fill="#000080"/></svg>
<svg style="left:928px;top:28px;" width="16" height="16" viewBox="0 0 16 16" shape-rendering="crispEdges"><rect x="0.5" y="0.5" width="10" height="14" fill="#fff" stroke="#808080"/><path d="M2,3.5 H6 M3,5.5 H7 M3,7.5 H6 M3,9.5 H7 M2,11.5 H8" stroke="#000"/><rect x="13" y="5" width="1" height="9" fill="#000080"/><path d="M10.5,11 H16.5 L13.5,14Z" fill="#000080"/><rect x="11" y="14" width="6" height="1" fill="#000080"/></svg>
<svg style="left:928px;top:27px;" width="16" height="13" viewBox="0 0 16 13"><path d="M5,1 L14,11 M14,1 L5,11" stroke="#800000" stroke-width="2.4"/></svg>
<svg style="left:948px;top:28px;" width="14" height="15" viewBox="0 0 14 15" shape-rendering="crispEdges"><rect x="6" y="0" width="1" height="1" fill="#e02010"/><rect x="8" y="0" width="1" height="1" fill="#e02010"/><rect x="3" y="1" width="1" height="1" fill="#e02010"/><rect x="5" y="1" width="1" height="1" fill="#e02010"/><rect x="7" y="1" width="1" height="1" fill="#e02010"/><rect x="9" y="1" width="1" height="1" fill="#e02010"/><rect x="2" y="2" width="1" height="1" fill="#e02010"/><rect x="4" y="2" width="1" height="1" fill="#e02010"/><rect x="6" y="2" width="1" height="1" fill="#e02010"/><rect x="8" y="2" width="1" height="1" fill="#e02010"/><rect x="10" y="2" width="1" height="1" fill="#e02010"/><rect x="1" y="3" width="1" height="1" fill="#e02010"/><rect x="3" y="3" width="1" height="1" fill="#e02010"/><rect x="5" y="3" width="1" height="1" fill="#e02010"/><rect x="7" y="3" width="1" height="1" fill="#e02010"/><rect x="9" y="3" width="1" height="1" fill="#e02010"/><rect x="11" y="3" width="1" height="1" fill="#e02010"/><rect x="0" y="4" width="1" height="1" fill="#e02010"/><rect x="2" y="4" width="1" height="1" fill="#e02010"/><rect x="10" y="4" width="1" height="1" fill="#e02010"/><rect x="12" y="4" width="1" height="1" fill="#e02010"/><rect x="1" y="5" width="1" height="1" fill="#e02010"/><rect x="3" y="5" width="1" height="1" fill="#e02010"/><rect x="0" y="6" width="1" height="1" fill="#e02010"/><rect x="2" y="6" width="1" height="1" fill="#e02010"/><rect x="1" y="7" width="1" height="1" fill="#e02010"/><rect x="0" y="8" width="1" height="1" fill="#e02010"/><rect x="2" y="8" width="1" height="1" fill="#e02010"/><rect x="1" y="9" width="1" height="1" fill="#e02010"/><rect x="3" y="9" width="1" height="1" fill="#e02010"/><rect x="0" y="10" width="1" height="1" fill="#e02010"/><rect x="2" y="10" width="1" height="1" fill="#e02010"/><rect x="10" y="10" width="1" height="1" fill="#e02010"/><rect x="12" y="10" width="1" height="1" fill="#e02010"/><rect x="1" y="11" width="1" height="1" fill="#e02010"/><rect x="3" y="11" width="1" height="1" fill="#e02010"/><rect x="5" y="11" width="1" height="1" fill="#e02010"/><rect x="7" y="11" width="1" height="1" fill="#e02010"/><rect x="9" y="11" width="1" height="1" fill="#e02010"/><rect x="11" y="11" width="1" height="1" fill="#e02010"/><rect x="2" y="12" width="1" height="1" fill="#e02010"/><rect x="4" y="12" width="1" height="1" fill="#e02010"/><rect x="6" y="12" width="1" height="1" fill="#e02010"/><rect x="8" y="12" width="1" height="1" fill="#e02010"/><rect x="10" y="12" width="1" height="1" fill="#e02010"/><rect x="3" y="13" width="1" height="1" fill="#e02010"/><rect x="5" y="13" width="1" height="1" fill="#e02010"/><rect x="7" y="13" width="1" height="1" fill="#e02010"/><rect x="9" y="13" width="1" height="1" fill="#e02010"/><rect x="6" y="14" width="1" height="1" fill="#e02010"/><rect x="8" y="14" width="1" height="1" fill="#e02010"/><rect x="7" y="7" width="1" height="1" fill="#e02010"/><rect x="9" y="7" width="1" height="1" fill="#e02010"/><rect x="5" y="5" width="1" height="1" fill="#e02010"/><rect x="5" y="9" width="1" height="1" fill="#e02010"/></svg>
<svg style="left:974px;top:27px;" width="1" height="16" viewBox="0 0 1 16" shape-rendering="crispEdges"><rect x="0" y="0" width="1" height="1" fill="#404040"/><rect x="0" y="2" width="1" height="1" fill="#404040"/><rect x="0" y="4" width="1" height="1" fill="#404040"/><rect x="0" y="6" width="1" height="1" fill="#404040"/><rect x="0" y="8" width="1" height="1" fill="#404040"/><rect x="0" y="10" width="1" height="1" fill="#404040"/><rect x="0" y="12" width="1" height="1" fill="#404040"/><rect x="0" y="14" width="1" height="1" fill="#404040"/></svg>
<svg style="left:984px;top:29px;" width="14" height="14" viewBox="0 0 14 14" shape-rendering="crispEdges"><rect x="4" y="0" width="1" height="1" fill="#000"/><rect x="6" y="0" width="1" height="1" fill="#000"/><rect x="8" y="0" width="1" height="1" fill="#000"/><rect x="10" y="1" width="1" height="1" fill="#000"/><rect x="11" y="2" width="1" height="1" fill="#000"/><rect x="12" y="3" width="1" height="1" fill="#000"/><rect x="11" y="4" width="1" height="1" fill="#000"/><rect x="3" y="1" width="1" height="1" fill="#000"/><rect x="3" y="3" width="1" height="1" fill="#000"/><rect x="4" y="5" width="1" height="1" fill="#000"/><rect x="3" y="7" width="1" height="1" fill="#000"/><rect x="4" y="9" width="1" height="1" fill="#000"/><rect x="3" y="11" width="1" height="1" fill="#000"/><rect x="4" y="13" width="1" height="1" fill="#000"/><rect x="6" y="13" width="1" height="1" fill="#000"/><rect x="8" y="13" width="1" height="1" fill="#000"/><rect x="10" y="12" width="1" height="1" fill="#000"/><rect x="11" y="11" width="1" height="1" fill="#000"/><rect x="12" y="10" width="1" height="1" fill="#000"/><rect x="11" y="9" width="1" height="1" fill="#000"/></svg>
<svg style="left:984px;top:29px;" width="14" height="14" viewBox="0 0 14 14"><path d="M0,0 L14,14 M0,14 L13,1" stroke="#c02020" stroke-width="1.1"/></svg>
<div style="left:1004px;top:26px;width:20px;height:20px;background:#f8f8f8;box-sizing:border-box;border:1px solid;border-color:#fff #a0a0a0 #a0a0a0 #fff;"></div>
<svg style="left:1007px;top:29px;" width="15" height="15" viewBox="0 0 15 15" shape-rendering="crispEdges"><path d="M0,0 H5 V1 H6 V4 H5 V5 H2 V7 H0Z M2,1 V4 H4 V1Z" fill="#000"/><rect x="3" y="7" width="3" height="7" fill="#505050"/><rect x="3" y="12" width="12" height="2" fill="#505050"/><rect x="4" y="9" width="2" height="3" fill="#00e000"/><rect x="7" y="2" width="2" height="10" fill="#ffff00"/><rect x="9" y="2" width="1" height="10" fill="#505050"/><rect x="10" y="4" width="3" height="8" fill="#ff0000"/><rect x="13" y="4" width="1" height="8" fill="#505050"/></svg>
<div style="left:1030px;top:26px;width:20px;height:20px;background:#f8f8f8;box-sizing:border-box;border:1px solid;border-color:#fff #a0a0a0 #a0a0a0 #fff;"></div>
<svg style="left:1033px;top:29px;" width="15" height="15" viewBox="0 0 15 15" shape-rendering="crispEdges"><rect x="0" y="0" width="8" height="2" fill="#000"/><rect x="0" y="0" width="2" height="7" fill="#000"/><rect x="3" y="1" width="2" height="6" fill="#000"/><rect x="6" y="1" width="2" height="6" fill="#000"/><rect x="3" y="7" width="3" height="7" fill="#505050"/><rect x="3" y="12" width="12" height="2" fill="#505050"/><rect x="4" y="9" width="2" height="3" fill="#00e000"/><rect x="7" y="2" width="2" height="10" fill="#ffff00"/><rect x="9" y="2" width="1" height="10" fill="#505050"/><rect x="10" y="4" width="3" height="8" fill="#ff0000"/><rect x="13" y="4" width="1" height="8" fill="#505050"/></svg>
<svg style="left:1056px;top:27px;" width="17" height="17" viewBox="0 0 17 17"><path d="M6,3 Q6,1 7.5,1 Q9,1 9,3 V2 Q9,0.5 10.5,0.5 Q12,0.5 12,2 V3 Q12,2 13.5,2 Q15,2 15,4 V10 Q15,14 11,16 L8,16 L1.5,9.5 Q0.5,8 2,7.5 Q3,7 4,8 L6,10Z" fill="#fff" stroke="#000" stroke-width="1.2"/><path d="M9,3 V8 M12,3 V8" stroke="#000"/><path d="M8,15 L14,11" stroke="#80a8e8" stroke-width="3.5"/><circle cx="15" cy="8.5" r="2" fill="#c0c0c0"/></svg>
<svg style="left:1099px;top:26px;" width="13" height="17" viewBox="0 0 13 17"><path d="M4,0 H8 V5 H12 L6,11 L0,5 H4Z" fill="#1040ff"/><circle cx="6" cy="13.5" r="2.2" fill="#1040ff"/></svg>
<svg style="left:1118px;top:26px;" width="18" height="17" viewBox="0 0 18 17"><path d="M2.5,9.5 Q3,2 9,2 Q13,2 13,6" fill="none" stroke="#1040ff" stroke-width="3.6"/><path d="M8.5,5.5 H17 L12.8,11Z" fill="#1040ff"/><circle cx="3" cy="10.5" r="2.2" fill="#1040ff"/></svg>
<svg style="left:1143px;top:26px;" width="13" height="17" viewBox="0 0 13 17"><path d="M6,0 L12,6 H8 V11 H4 V6 H0Z" fill="#1040ff"/><circle cx="6" cy="13.5" r="2.2" fill="#1040ff"/></svg>
<svg style="left:1165px;top:27px;" width="1" height="16" viewBox="0 0 1 16" shape-rendering="crispEdges"><rect x="0" y="0" width="1" height="1" fill="#404040"/><rect x="0" y="2" width="1" height="1" fill="#404040"/><rect x="0" y="4" width="1" height="1" fill="#404040"/><rect x="0" y="6" width="1" height="1" fill="#404040"/><rect x="0" y="8" width="1" height="1" fill="#404040"/><rect x="0" y="10" width="1" height="1" fill="#404040"/><rect x="0" y="12" width="1" height="1" fill="#404040"/><rect x="0" y="14" width="1" height="1" fill="#404040"/></svg>
<svg style="left:1176px;top:26px;" width="13" height="17" viewBox="0 0 13 17"><path d="M4,0 H8 V5 H12 L6,11 L0,5 H4Z" fill="#1040ff"/><circle cx="6" cy="13.5" r="2.2" fill="#1040ff"/><rect x="0" y="11" width="1" height="5" fill="#1040ff"/><rect x="2" y="11" width="1" height="5" fill="#1040ff"/><rect x="9" y="11" width="1" height="5" fill="#1040ff"/><rect x="11" y="11" width="1" height="5" fill="#1040ff"/></svg>
<svg style="left:1194px;top:35px;" width="6" height="4" viewBox="0 0 6 4" shape-rendering="crispEdges"><polygon points="0,0 5,0 2.5,3" fill="#000"/></svg>
<svg style="left:1205px;top:26px;" width="18" height="17" viewBox="0 0 18 17"><path d="M2.5,9.5 Q3,2 9,2 Q13,2 13,6" fill="none" stroke="#1040ff" stroke-width="3.6"/><path d="M8.5,5.5 H17 L12.8,11Z" fill="#1040ff"/><circle cx="3" cy="10.5" r="2.2" fill="#1040ff"/><rect x="2" y="12" width="1" height="4" fill="#1040ff"/><rect x="4" y="12" width="1" height="4" fill="#1040ff"/><rect x="6" y="12" width="1" height="4" fill="#1040ff"/><rect x="8" y="12" width="1" height="4" fill="#1040ff"/><rect x="10" y="12" width="1" height="4" fill="#1040ff"/><rect x="12" y="12" width="1" height="4" fill="#1040ff"/><rect x="14" y="12" width="1" height="4" fill="#1040ff"/><rect x="16" y="12" width="1" height="4" fill="#1040ff"/></svg>
<svg style="left:1225px;top:35px;" width="6" height="4" viewBox="0 0 6 4" shape-rendering="crispEdges"><polygon points="0,0 5,0 2.5,3" fill="#000"/></svg>
<svg style="left:1238px;top:26px;" width="13" height="17" viewBox="0 0 13 17"><path d="M6,0 L12,6 H8 V11 H4 V6 H0Z" fill="#1040ff"/><circle cx="6" cy="13.5" r="2.2" fill="#1040ff"/><rect x="0" y="11" width="1" height="5" fill="#1040ff"/><rect x="2" y="11" width="1" height="5" fill="#1040ff"/><rect x="9" y="11" width="1" height="5" fill="#1040ff"/><rect x="11" y="11" width="1" height="5" fill="#1040ff"/></svg>
<div style="left:1277px;top:28px;font-size:11px;line-height:13px;color:#000;white-space:pre;font-family:'Liberation Sans', sans-serif;">Layout</div>
<div style="left:1316px;top:25px;width:123px;height:19px;background:#f0f0f0;box-sizing:border-box;border:1px solid;border-color:#a0a0a0 #fff #fff #a0a0a0;"></div>
<div style="left:1319px;top:29px;font-family:'Liberation Mono', monospace;font-size:12px;letter-spacing:-0.2px;line-height:14px;color:#000">Simulate</div>
<div style="left:1440px;top:25px;width:19px;height:19px;background:#f0f0f0;box-sizing:border-box;border:1px solid;border-color:#fff #707070 #707070 #fff;"></div>
<svg style="left:1443px;top:32px;" width="12" height="7" viewBox="0 0 12 7" shape-rendering="crispEdges"><polygon points="0,0 11,0 5.5,6" fill="#000"/></svg>
<div style="left:2px;top:59px;font-size:11px;line-height:13px;color:#6d6d6d;white-space:pre;font-family:'Liberation Sans', sans-serif;">ColumnLayout</div>
<div style="left:76px;top:57px;width:235px;height:19px;background:#f0f0f0;box-sizing:border-box;border:1px solid;border-color:#a0a0a0 #fff #fff #a0a0a0;"></div>
<div style="left:79px;top:62px;font-family:'Liberation Mono', monospace;font-size:12px;letter-spacing:-0.2px;line-height:14px;color:#808080">Default</div>
<div style="left:291px;top:58px;width:18px;height:18px;background:#f0f0f0;box-sizing:border-box;border:1px solid;border-color:#fff #a0a0a0 #a0a0a0 #fff;"></div>
<svg style="left:294px;top:64px;" width="12" height="6" viewBox="0 0 12 6" shape-rendering="crispEdges"><rect x="0" y="0" width="1" height="1" fill="#404040"/><rect x="2" y="0" width="1" height="1" fill="#404040"/><rect x="4" y="0" width="1" height="1" fill="#404040"/><rect x="6" y="0" width="1" height="1" fill="#404040"/><rect x="8" y="0" width="1" height="1" fill="#404040"/><rect x="10" y="0" width="1" height="1" fill="#404040"/><rect x="1" y="1" width="1" height="1" fill="#404040"/><rect x="3" y="1" width="1" height="1" fill="#404040"/><rect x="5" y="1" width="1" height="1" fill="#404040"/><rect x="7" y="1" width="1" height="1" fill="#404040"/><rect x="9" y="1" width="1" height="1" fill="#404040"/><rect x="2" y="2" width="1" height="1" fill="#404040"/><rect x="4" y="2" width="1" height="1" fill="#404040"/><rect x="6" y="2" width="1" height="1" fill="#404040"/><rect x="8" y="2" width="1" height="1" fill="#404040"/><rect x="3" y="3" width="1" height="1" fill="#404040"/><rect x="5" y="3" width="1" height="1" fill="#404040"/><rect x="7" y="3" width="1" height="1" fill="#404040"/><rect x="4" y="4" width="1" height="1" fill="#404040"/><rect x="6" y="4" width="1" height="1" fill="#404040"/></svg>
<svg style="left:335px;top:59px;shape-rendering:auto" width="16" height="16" viewBox="0 0 16 16" shape-rendering="crispEdges"><path d="M1,4 Q5,1 9,4 Q12,6 14,3 V10 Q11,13 8,10 Q4,8 1,11Z" fill="#80c0ff" stroke="#2080e0"/><rect x="11" y="1" width="2" height="12" fill="#a07030"/><circle cx="12" cy="13" r="3.5" fill="#40a040"/><path d="M10,13 H14 M12,11 V15" stroke="#fff"/></svg>
<svg style="left:355px;top:67px;" width="6" height="4" viewBox="0 0 6 4" shape-rendering="crispEdges"><polygon points="0,0 5,0 2.5,3" fill="#000"/></svg>
<svg style="left:365px;top:59px;shape-rendering:auto" width="16" height="16" viewBox="0 0 16 16" shape-rendering="crispEdges"><path d="M1,4 Q5,1 9,4 Q12,6 14,3 V10 Q11,13 8,10 Q4,8 1,11Z" fill="#80c0ff" stroke="#2080e0"/><rect x="11" y="1" width="2" height="12" fill="#a07030"/><circle cx="12" cy="13" r="3.5" fill="#e07020"/><path d="M10,13 H14" stroke="#fff"/></svg>
<svg style="left:386px;top:67px;" width="6" height="4" viewBox="0 0 6 4" shape-rendering="crispEdges"><polygon points="0,0 5,0 2.5,3" fill="#000"/></svg>
<svg style="left:397px;top:59px;shape-rendering:auto" width="16" height="16" viewBox="0 0 16 16" shape-rendering="crispEdges"><path d="M1,4 Q5,1 9,4 Q12,6 14,3 V10 Q11,13 8,10 Q4,8 1,11Z" fill="#80c0ff" stroke="#2080e0"/><rect x="11" y="1" width="2" height="12" fill="#a07030"/><path d="M9,15 L15,7" stroke="#e0b040" stroke-width="3"/></svg>
<svg style="left:419px;top:59px;shape-rendering:auto" width="16" height="16" viewBox="0 0 16 16" shape-rendering="crispEdges"><path d="M1,4 Q5,1 9,4 Q12,6 14,3 V10 Q11,13 8,10 Q4,8 1,11Z" fill="#80c0ff" stroke="#2080e0"/><rect x="11" y="1" width="2" height="12" fill="#a07030"/><rect x="6" y="8" width="9" height="8" fill="#6090e0"/><rect x="8" y="12" width="5" height="3" fill="#fff"/></svg>
<svg style="left:440px;top:67px;" width="6" height="4" viewBox="0 0 6 4" shape-rendering="crispEdges"><polygon points="0,0 5,0 2.5,3" fill="#000"/></svg>
<svg style="left:450px;top:59px;shape-rendering:auto" width="16" height="16" viewBox="0 0 16 16" shape-rendering="crispEdges"><path d="M1,4 Q5,1 9,4 Q12,6 14,3 V10 Q11,13 8,10 Q4,8 1,11Z" fill="#80c0ff" stroke="#2080e0"/><rect x="11" y="1" width="2" height="12" fill="#a07030"/><path d="M8,9 H12 V6 L16,11 L12,16 V13 H8Z" fill="#40a040"/></svg>
<svg style="left:490px;top:59px;" width="15" height="14" viewBox="0 0 15 14" shape-rendering="crispEdges"><rect x="1" y="0" width="1" height="1" fill="#900000"/><rect x="7" y="0" width="1" height="1" fill="#900000"/><rect x="2" y="2" width="1" height="1" fill="#900000"/><rect x="6" y="2" width="1" height="1" fill="#900000"/><rect x="3" y="3" width="1" height="1" fill="#900000"/><rect x="5" y="3" width="1" height="1" fill="#900000"/><rect x="4" y="4" width="1" height="1" fill="#900000"/><rect x="3" y="5" width="1" height="1" fill="#900000"/><rect x="5" y="5" width="1" height="1" fill="#900000"/><rect x="2" y="6" width="1" height="1" fill="#900000"/><rect x="6" y="6" width="1" height="1" fill="#900000"/><rect x="1" y="8" width="1" height="1" fill="#900000"/><rect x="7" y="8" width="1" height="1" fill="#900000"/><rect x="0" y="9" width="1" height="1" fill="#900000"/><rect x="8" y="9" width="1" height="1" fill="#900000"/><rect x="2" y="7" width="1" height="1" fill="#900000"/><rect x="6" y="7" width="1" height="1" fill="#900000"/><rect x="13" y="2" width="1" height="1" fill="#000"/><rect x="12" y="3" width="1" height="1" fill="#000"/><rect x="14" y="3" width="1" height="1" fill="#000"/><rect x="11" y="4" width="1" height="1" fill="#000"/><rect x="13" y="4" width="1" height="1" fill="#000"/><rect x="10" y="5" width="1" height="1" fill="#000"/><rect x="12" y="5" width="1" height="1" fill="#000"/><rect x="9" y="6" width="1" height="1" fill="#000"/><rect x="11" y="6" width="1" height="1" fill="#000"/><rect x="10" y="7" width="1" height="1" fill="#000"/><rect x="12" y="7" width="1" height="1" fill="#000"/><rect x="11" y="8" width="1" height="1" fill="#000"/><rect x="13" y="8" width="1" height="1" fill="#000"/><rect x="12" y="9" width="1" height="1" fill="#000"/><rect x="14" y="9" width="1" height="1" fill="#000"/><rect x="13" y="10" width="1" height="1" fill="#000"/></svg>
<svg style="left:511px;top:59px;" width="15" height="14" viewBox="0 0 15 14" shape-rendering="crispEdges"><rect x="7" y="0" width="1" height="1" fill="#900000"/><rect x="13" y="0" width="1" height="1" fill="#900000"/><rect x="8" y="2" width="1" height="1" fill="#900000"/><rect x="12" y="2" width="1" height="1" fill="#900000"/><rect x="9" y="3" width="1" height="1" fill="#900000"/><rect x="11" y="3" width="1" height="1" fill="#900000"/><rect x="10" y="4" width="1" height="1" fill="#900000"/><rect x="9" y="5" width="1" height="1" fill="#900000"/><rect x="11" y="5" width="1" height="1" fill="#900000"/><rect x="8" y="6" width="1" height="1" fill="#900000"/><rect x="12" y="6" width="1" height="1" fill="#900000"/><rect x="7" y="8" width="1" height="1" fill="#900000"/><rect x="13" y="8" width="1" height="1" fill="#900000"/><rect x="6" y="9" width="1" height="1" fill="#900000"/><rect x="14" y="9" width="1" height="1" fill="#900000"/><rect x="8" y="7" width="1" height="1" fill="#900000"/><rect x="12" y="7" width="1" height="1" fill="#900000"/><rect x="1" y="2" width="1" height="1" fill="#000"/><rect x="2" y="3" width="1" height="1" fill="#000"/><rect x="0" y="3" width="1" height="1" fill="#000"/><rect x="3" y="4" width="1" height="1" fill="#000"/><rect x="1" y="4" width="1" height="1" fill="#000"/><rect x="4" y="5" width="1" height="1" fill="#000"/><rect x="2" y="5" width="1" height="1" fill="#000"/><rect x="5" y="6" width="1" height="1" fill="#000"/><rect x="3" y="6" width="1" height="1" fill="#000"/><rect x="4" y="7" width="1" height="1" fill="#000"/><rect x="2" y="7" width="1" height="1" fill="#000"/><rect x="3" y="8" width="1" height="1" fill="#000"/><rect x="1" y="8" width="1" height="1" fill="#000"/><rect x="2" y="9" width="1" height="1" fill="#000"/><rect x="0" y="9" width="1" height="1" fill="#000"/><rect x="1" y="10" width="1" height="1" fill="#000"/></svg>
<div style="left:534px;top:58px;width:21px;height:20px;background:#f0f0f0;box-sizing:border-box;border:1px solid;border-color:#fff #a0a0a0 #a0a0a0 #fff;"></div>
<svg style="left:538px;top:61px;" width="13" height="14" viewBox="0 0 13 14" shape-rendering="crispEdges"><rect x="0" y="0" width="1" height="1" fill="#000"/><rect x="0" y="2" width="1" height="1" fill="#000"/><rect x="0" y="4" width="1" height="1" fill="#000"/><rect x="0" y="6" width="1" height="1" fill="#000"/><rect x="0" y="8" width="1" height="1" fill="#000"/><rect x="0" y="10" width="1" height="1" fill="#000"/><rect x="0" y="12" width="1" height="1" fill="#000"/><rect x="2" y="12" width="1" height="1" fill="#000"/><rect x="4" y="12" width="1" height="1" fill="#000"/><rect x="6" y="12" width="1" height="1" fill="#000"/><rect x="8" y="12" width="1" height="1" fill="#000"/><rect x="10" y="12" width="1" height="1" fill="#000"/><rect x="10" y="10" width="1" height="1" fill="#000"/><rect x="10" y="8" width="1" height="1" fill="#000"/><rect x="10" y="6" width="1" height="1" fill="#000"/><rect x="10" y="4" width="1" height="1" fill="#000"/><rect x="9" y="2" width="1" height="1" fill="#000"/><rect x="8" y="1" width="1" height="1" fill="#000"/><rect x="2" y="0" width="1" height="1" fill="#000"/><rect x="4" y="0" width="1" height="1" fill="#000"/><rect x="6" y="0" width="1" height="1" fill="#000"/><rect x="4" y="4" width="1" height="1" fill="#000"/><rect x="6" y="4" width="1" height="1" fill="#000"/><rect x="3" y="8" width="1" height="1" fill="#000"/><rect x="7" y="8" width="1" height="1" fill="#000"/><rect x="5" y="10" width="1" height="1" fill="#000"/><rect x="3" y="3" width="1" height="1" fill="#ff0000"/><rect x="2" y="6" width="1" height="1" fill="#ff0000"/><rect x="8" y="6" width="1" height="1" fill="#ff0000"/><rect x="5" y="9" width="1" height="1" fill="#ff0000"/></svg>
<svg style="left:563px;top:60px;" width="15" height="16" viewBox="0 0 15 16" shape-rendering="crispEdges"><path d="M0.5,10.5 L9.5,1.5" stroke="#800000"/><path d="M1.5,11.5 L10.5,2.5" stroke="#909090"/><path d="M0.5,2.5 L8.5,10.5" stroke="#800000"/><rect x="6" y="10" width="1" height="1" fill="#000"/><rect x="6" y="12" width="1" height="1" fill="#000"/><rect x="6" y="14" width="1" height="1" fill="#000"/><rect x="7" y="9" width="1" height="1" fill="#1030ff"/><rect x="7" y="11" width="1" height="1" fill="#000"/><rect x="7" y="13" width="1" height="1" fill="#000"/><rect x="8" y="8" width="1" height="1" fill="#1030ff"/><rect x="8" y="10" width="1" height="1" fill="#1030ff"/><rect x="8" y="12" width="1" height="1" fill="#000"/><rect x="8" y="14" width="1" height="1" fill="#000"/><rect x="9" y="7" width="1" height="1" fill="#000"/><rect x="9" y="9" width="1" height="1" fill="#1030ff"/><rect x="9" y="11" width="1" height="1" fill="#1030ff"/><rect x="9" y="13" width="1" height="1" fill="#000"/><rect x="10" y="6" width="1" height="1" fill="#000"/><rect x="10" y="8" width="1" height="1" fill="#000"/><rect x="10" y="10" width="1" height="1" fill="#1030ff"/><rect x="10" y="12" width="1" height="1" fill="#1030ff"/><rect x="11" y="5" width="1" height="1" fill="#000"/><rect x="11" y="7" width="1" height="1" fill="#000"/><rect x="11" y="9" width="1" height="1" fill="#000"/><rect x="11" y="11" width="1" height="1" fill="#1030ff"/><rect x="12" y="6" width="1" height="1" fill="#000"/><rect x="12" y="8" width="1" height="1" fill="#000"/><rect x="12" y="10" width="1" height="1" fill="#000"/></svg>
<div style="left:600px;top:58px;width:20px;height:20px;background:#ffffff;box-sizing:border-box;border:1px solid;border-color:#808080 #fff #fff #808080;"></div>
<div style="left:626px;top:58px;width:20px;height:20px;background:#ffffff;box-sizing:border-box;border:1px solid;border-color:#808080 #fff #fff #808080;"></div>
<div style="left:652px;top:58px;width:20px;height:20px;background:#ffffff;box-sizing:border-box;border:1px solid;border-color:#808080 #fff #fff #808080;"></div>
<div style="left:678px;top:58px;width:20px;height:20px;background:#ffffff;box-sizing:border-box;border:1px solid;border-color:#808080 #fff #fff #808080;"></div>
<div style="left:704px;top:58px;width:21px;height:20px;background:#f4f4f4;box-sizing:border-box;border:1px solid;border-color:#fff #a0a0a0 #a0a0a0 #fff;"></div>
<svg style="left:607px;top:63px;" width="6" height="12" viewBox="0 0 6 12" shape-rendering="crispEdges"><path d="M3,0 V11 M1,11 H5" stroke="#333" stroke-dasharray="1 1"/></svg>
<svg style="left:629px;top:63px;" width="12" height="12" viewBox="0 0 12 12"><circle cx="6" cy="6" r="4.5" fill="none" stroke="#333" stroke-dasharray="1.2 1.2"/></svg>
<div style="left:652px;top:62px;width:20px;text-align:center;font-size:10px;line-height:12px;color:#303030;font-family:'Liberation Serif'">I/O</div>
<svg style="left:681px;top:62px;" width="14" height="13" viewBox="0 0 14 13" shape-rendering="crispEdges"><rect x="0.5" y="0.5" width="13" height="12" fill="none" stroke="#333" stroke-dasharray="1 1"/><path d="M6,3 V10 M4,10 H9 M5,4 H6" stroke="#333" stroke-dasharray="1 1"/></svg>
<div style="left:705px;top:63px;width:20px;text-align:center;font-size:9px;line-height:12px;color:#202020;font-weight:bold">ALL</div>
<svg style="left:730px;top:59px;" width="17" height="17" viewBox="0 0 17 17" shape-rendering="crispEdges"><path d="M2,15 L15,2" stroke="#7090ff" stroke-width="6" stroke-dasharray="1 1" opacity="0.7"/><path d="M5,15 L15,6" stroke="#a0e0a0" stroke-width="3" stroke-dasharray="1 1"/></svg>
<div style="left:769px;top:58px;width:20px;height:20px;background:#ffffff;box-sizing:border-box;border:1px solid;border-color:#808080 #fff #fff #808080;"></div>
<svg style="left:771px;top:60px;" width="18" height="18" viewBox="0 0 18 18"><circle cx="14.20" cy="8.00" r="1.9" fill="#34567c"/><circle cx="12.38" cy="12.38" r="1.9" fill="#34567c"/><circle cx="8.00" cy="14.20" r="1.9" fill="#34567c"/><circle cx="3.62" cy="12.38" r="1.9" fill="#34567c"/><circle cx="1.80" cy="8.00" r="1.9" fill="#34567c"/><circle cx="3.62" cy="3.62" r="1.9" fill="#34567c"/><circle cx="8.00" cy="1.80" r="1.9" fill="#34567c"/><circle cx="12.38" cy="3.62" r="1.9" fill="#34567c"/><circle cx="8" cy="8" r="5.4" fill="#3c6088"/><circle cx="7" cy="6.5" r="3.5" fill="#5a80a8" opacity="0.6"/><circle cx="8" cy="8" r="1.9" fill="#f4f4f4"/><path d="M12,8 L16,10 L13,12 L16,15 L9,17 L11,13 L8,12Z" fill="#e04848"/></svg>
<div style="left:795px;top:58px;width:20px;height:20px;background:#f4f4f4;box-sizing:border-box;border:1px solid;border-color:#fff #a0a0a0 #a0a0a0 #fff;"></div>
<svg style="left:797px;top:60px;" width="18" height="18" viewBox="0 0 18 18"><circle cx="14.20" cy="8.00" r="1.9" fill="#34567c"/><circle cx="12.38" cy="12.38" r="1.9" fill="#34567c"/><circle cx="8.00" cy="14.20" r="1.9" fill="#34567c"/><circle cx="3.62" cy="12.38" r="1.9" fill="#34567c"/><circle cx="1.80" cy="8.00" r="1.9" fill="#34567c"/><circle cx="3.62" cy="3.62" r="1.9" fill="#34567c"/><circle cx="8.00" cy="1.80" r="1.9" fill="#34567c"/><circle cx="12.38" cy="3.62" r="1.9" fill="#34567c"/><circle cx="8" cy="8" r="5.4" fill="#3c6088"/><circle cx="7" cy="6.5" r="3.5" fill="#5a80a8" opacity="0.6"/><circle cx="8" cy="8" r="1.9" fill="#f4f4f4"/><path d="M9,17 L12.5,10 L16,17Z" fill="#f8f040"/><path d="M11,14 H14 M12,12 V16" stroke="#000" stroke-width="1.3"/><path d="M8,16 L10,11" stroke="#808080" stroke-width="1.5"/></svg>
<div style="left:821px;top:58px;width:20px;height:20px;background:#f4f4f4;box-sizing:border-box;border:1px solid;border-color:#fff #a0a0a0 #a0a0a0 #fff;"></div>
<svg style="left:823px;top:60px;" width="18" height="18" viewBox="0 0 18 18"><circle cx="14.20" cy="8.00" r="1.9" fill="#34567c"/><circle cx="12.38" cy="12.38" r="1.9" fill="#34567c"/><circle cx="8.00" cy="14.20" r="1.9" fill="#34567c"/><circle cx="3.62" cy="12.38" r="1.9" fill="#34567c"/><circle cx="1.80" cy="8.00" r="1.9" fill="#34567c"/><circle cx="3.62" cy="3.62" r="1.9" fill="#34567c"/><circle cx="8.00" cy="1.80" r="1.9" fill="#34567c"/><circle cx="12.38" cy="3.62" r="1.9" fill="#34567c"/><circle cx="8" cy="8" r="5.4" fill="#3c6088"/><circle cx="7" cy="6.5" r="3.5" fill="#5a80a8" opacity="0.6"/><circle cx="8" cy="8" r="1.9" fill="#f4f4f4"/><path d="M8,17 L12,10 L16,17Z" fill="#f8f040"/><path d="M10,16 L12,12 L14,16" stroke="#000" stroke-width="1.3" fill="none"/></svg>
<div style="left:847px;top:58px;width:20px;height:20px;background:#f4f4f4;box-sizing:border-box;border:1px solid;border-color:#fff #a0a0a0 #a0a0a0 #fff;"></div>
<svg style="left:849px;top:60px;" width="18" height="18" viewBox="0 0 18 18"><circle cx="14.20" cy="8.00" r="1.9" fill="#34567c"/><circle cx="12.38" cy="12.38" r="1.9" fill="#34567c"/><circle cx="8.00" cy="14.20" r="1.9" fill="#34567c"/><circle cx="3.62" cy="12.38" r="1.9" fill="#34567c"/><circle cx="1.80" cy="8.00" r="1.9" fill="#34567c"/><circle cx="3.62" cy="3.62" r="1.9" fill="#34567c"/><circle cx="8.00" cy="1.80" r="1.9" fill="#34567c"/><circle cx="12.38" cy="3.62" r="1.9" fill="#34567c"/><circle cx="8" cy="8" r="5.4" fill="#3c6088"/><circle cx="7" cy="6.5" r="3.5" fill="#5a80a8" opacity="0.6"/><circle cx="8" cy="8" r="1.9" fill="#f4f4f4"/><rect x="12" y="9" width="3" height="8" fill="#40e040"/><rect x="13" y="11" width="1" height="1" fill="#fff"/><rect x="13" y="14" width="1" height="1" fill="#fff"/><circle cx="10" cy="8" r="1.5" fill="#80d0ff"/></svg>
<div style="left:892px;top:58px;width:20px;height:20px;background:#ffffff;box-sizing:border-box;border:1px solid;border-color:#808080 #fff #fff #808080;"></div>
<div style="left:918px;top:58px;width:20px;height:20px;background:#f4f4f4;box-sizing:border-box;border:1px solid;border-color:#fff #a0a0a0 #a0a0a0 #fff;"></div>
<div style="left:944px;top:58px;width:20px;height:20px;background:#f4f4f4;box-sizing:border-box;border:1px solid;border-color:#fff #a0a0a0 #a0a0a0 #fff;"></div>
<div style="left:970px;top:58px;width:20px;height:20px;background:#f4f4f4;box-sizing:border-box;border:1px solid;border-color:#fff #a0a0a0 #a0a0a0 #fff;"></div>
<div style="left:996px;top:58px;width:20px;height:20px;background:#f4f4f4;box-sizing:border-box;border:1px solid;border-color:#fff #a0a0a0 #a0a0a0 #fff;"></div>
<svg style="left:899px;top:62px;" width="10" height="15" viewBox="0 0 10 15" shape-rendering="crispEdges"><path d="M0,0 V11 H1 V10 H2 V9 H3 V10 H4 V12 H5 V14 H7 V12 H6 V10 H5 V8 H8 V7 H7 V6 H6 V5 H5 V4 H4 V3 H3 V2 H2 V1 H1 V0Z" fill="#000"/></svg>
<svg style="left:921px;top:61px;" width="15" height="15" viewBox="0 0 15 15" shape-rendering="crispEdges"><rect x="0" y="1" width="1" height="7" fill="#000"/><rect x="0" y="1" width="7" height="1" fill="#000"/><rect x="3" y="4" width="8" height="8" fill="none" stroke="#000" stroke-width="2" transform="translate(0.5 0.5)"/><rect x="6" y="7" width="3" height="3" fill="#fff"/><path d="M9.5,14.5 H13.5 V10.5 M13,14 L11,12" stroke="#000" fill="none"/></svg>
<svg style="left:947px;top:60px;" width="16" height="17" viewBox="0 0 16 17" shape-rendering="crispEdges"><rect x="8" y="0" width="1" height="1" fill="#333"/><rect x="7" y="1" width="1" height="1" fill="#333"/><rect x="9" y="1" width="1" height="1" fill="#333"/><rect x="6" y="2" width="1" height="1" fill="#333"/><rect x="10" y="2" width="1" height="1" fill="#333"/><rect x="8" y="2" width="1" height="1" fill="#333"/><rect x="8" y="4" width="1" height="1" fill="#333"/><rect x="8" y="6" width="1" height="1" fill="#333"/><rect x="8" y="10" width="1" height="1" fill="#333"/><rect x="8" y="12" width="1" height="1" fill="#333"/><rect x="6" y="14" width="1" height="1" fill="#333"/><rect x="10" y="14" width="1" height="1" fill="#333"/><rect x="7" y="15" width="1" height="1" fill="#333"/><rect x="9" y="15" width="1" height="1" fill="#333"/><rect x="8" y="16" width="1" height="1" fill="#333"/><rect x="8" y="14" width="1" height="1" fill="#333"/><rect x="0" y="8" width="1" height="1" fill="#333"/><rect x="1" y="7" width="1" height="1" fill="#333"/><rect x="1" y="9" width="1" height="1" fill="#333"/><rect x="2" y="6" width="1" height="1" fill="#333"/><rect x="2" y="10" width="1" height="1" fill="#333"/><rect x="2" y="8" width="1" height="1" fill="#333"/><rect x="4" y="8" width="1" height="1" fill="#333"/><rect x="6" y="8" width="1" height="1" fill="#333"/><rect x="10" y="8" width="1" height="1" fill="#333"/><rect x="12" y="8" width="1" height="1" fill="#333"/><rect x="14" y="6" width="1" height="1" fill="#333"/><rect x="14" y="10" width="1" height="1" fill="#333"/><rect x="15" y="7" width="1" height="1" fill="#333"/><rect x="15" y="9" width="1" height="1" fill="#333"/><rect x="16" y="8" width="1" height="1" fill="#333"/><rect x="14" y="8" width="1" height="1" fill="#333"/><rect x="7" y="7" width="1" height="1" fill="#333"/><rect x="9" y="9" width="1" height="1" fill="#333"/><rect x="7" y="9" width="1" height="1" fill="#333"/><rect x="9" y="7" width="1" height="1" fill="#333"/></svg>
<svg style="left:973px;top:62px;" width="14" height="14" viewBox="0 0 14 14" shape-rendering="crispEdges"><rect x="3" y="0" width="1" height="10" fill="#000"/><rect x="10" y="0" width="1" height="10" fill="#000"/><rect x="1.5" y="10.5" width="4" height="2" fill="#fff" stroke="#000"/><rect x="8.5" y="10.5" width="4" height="2" fill="#fff" stroke="#000"/></svg>
<svg style="left:999px;top:61px;" width="15" height="15" viewBox="0 0 15 15" shape-rendering="crispEdges"><path d="M1.5,1.5 H6.5 V13.5 H14" stroke="#000" fill="none"/><path d="M0,5.5 H3 M0,10.5 H3" stroke="#000"/><path d="M3,4 L5,5.5 L3,7Z M3,9 L5,10.5 L3,12Z" fill="#000"/><rect x="9" y="1" width="1" height="1" fill="#000"/><rect x="9" y="3" width="1" height="1" fill="#000"/><rect x="9" y="5" width="1" height="1" fill="#000"/><rect x="9" y="7" width="1" height="1" fill="#000"/><rect x="9" y="9" width="1" height="1" fill="#000"/><rect x="9" y="11" width="1" height="1" fill="#000"/><path d="M11,5.5 H14 M12.5,4 V7 M11,9.5 H14 M12.5,8 V11" stroke="#000"/></svg>
<svg style="left:1024px;top:59px;" width="1" height="16" viewBox="0 0 1 16" shape-rendering="crispEdges"><rect x="0" y="0" width="1" height="1" fill="#404040"/><rect x="0" y="2" width="1" height="1" fill="#404040"/><rect x="0" y="4" width="1" height="1" fill="#404040"/><rect x="0" y="6" width="1" height="1" fill="#404040"/><rect x="0" y="8" width="1" height="1" fill="#404040"/><rect x="0" y="10" width="1" height="1" fill="#404040"/><rect x="0" y="12" width="1" height="1" fill="#404040"/><rect x="0" y="14" width="1" height="1" fill="#404040"/></svg>
<svg style="left:1033px;top:59px;" width="18" height="19" viewBox="0 0 18 19"><rect x="0" y="0" width="9" height="19" fill="#000"/><circle cx="4.5" cy="4" r="3.3" fill="#ff1010"/><circle cx="4.5" cy="9.5" r="2.3" fill="#e8e820"/><circle cx="4.5" cy="14.5" r="2.3" fill="#30d030"/><path d="M10,10 H11 M11,5.5 H12.5 Q17.5,5.5 17.5,10 Q17.5,14.5 12.5,14.5 H11Z" fill="#fff" stroke="#000" stroke-width="1.2"/><path d="M9,9.5 H11" stroke="#40c0ff"/></svg>
<svg style="left:1072px;top:59px;shape-rendering:auto" width="17" height="16" viewBox="0 0 17 16" shape-rendering="crispEdges"><path d="M1,1 Q7,1 7,8 Q7,15 1,15 M1,8 H7" fill="none" stroke="#000" stroke-width="1.6"/><path d="M7,8 L12,4 V7 H16 V9 H12 V12Z" fill="#1060ff"/></svg>
<svg style="left:1095px;top:67px;" width="6" height="4" viewBox="0 0 6 4" shape-rendering="crispEdges"><polygon points="0,0 5,0 2.5,3" fill="#000"/></svg>
<svg style="left:1103px;top:59px;shape-rendering:auto" width="17" height="16" viewBox="0 0 17 16" shape-rendering="crispEdges"><path d="M16,1 Q10,1 10,8 Q10,15 16,15 M10,8 H16" fill="none" stroke="#000" stroke-width="1.6"/><path d="M10,8 L5,4 V7 H0 V9 H5 V12Z" fill="#1060ff"/></svg>
<svg style="left:1126px;top:67px;" width="6" height="4" viewBox="0 0 6 4" shape-rendering="crispEdges"><polygon points="0,0 5,0 2.5,3" fill="#000"/></svg>
<svg style="left:1134px;top:58px;" width="18" height="18" viewBox="0 0 18 18" shape-rendering="crispEdges"><rect x="0.5" y="0.5" width="4" height="4" fill="none" stroke="#000"/><rect x="0.5" y="7.5" width="4" height="4" fill="none" stroke="#000"/><rect x="0.5" y="13.5" width="4" height="4" fill="none" stroke="#000"/><path d="M5,2 H8 V16 H5 M5,9 H10" stroke="#000" fill="none"/><path d="M9,5 L14,9 L9,13Z" fill="#40e040" stroke="#000"/><rect x="15" y="8" width="3" height="3" fill="#1060ff"/></svg>
<svg style="left:1163px;top:59px;" width="1" height="16" viewBox="0 0 1 16" shape-rendering="crispEdges"><rect x="0" y="0" width="1" height="1" fill="#404040"/><rect x="0" y="2" width="1" height="1" fill="#404040"/><rect x="0" y="4" width="1" height="1" fill="#404040"/><rect x="0" y="6" width="1" height="1" fill="#404040"/><rect x="0" y="8" width="1" height="1" fill="#404040"/><rect x="0" y="10" width="1" height="1" fill="#404040"/><rect x="0" y="12" width="1" height="1" fill="#404040"/><rect x="0" y="14" width="1" height="1" fill="#404040"/></svg>
<div style="left:1170px;top:60px;font-size:11px;line-height:13px;color:#000;white-space:pre;font-family:'Liberation Sans', sans-serif;">Search:</div>
<div style="left:1213px;top:57px;width:120px;height:20px;background:#fff;box-sizing:border-box;border:1px solid;border-color:#a0a0a0 #fff #fff #a0a0a0;"></div>
<div style="left:1331px;top:58px;width:18px;height:18px;background:#f0f0f0;box-sizing:border-box;border:1px solid;border-color:#fff #707070 #707070 #fff;"></div>
<svg style="left:1334px;top:64px;" width="12" height="7" viewBox="0 0 12 7" shape-rendering="crispEdges"><polygon points="0,0 11,0 5.5,6" fill="#000"/></svg>
<svg style="left:1353px;top:59px;" width="18" height="18" viewBox="0 0 18 18" shape-rendering="crispEdges"><rect x="6" y="0" width="1" height="1" fill="#404040"/><rect x="8" y="0" width="1" height="1" fill="#404040"/><rect x="10" y="0" width="1" height="1" fill="#404040"/><rect x="5" y="1" width="1" height="1" fill="#404040"/><rect x="7" y="1" width="1" height="1" fill="#404040"/><rect x="9" y="1" width="1" height="1" fill="#404040"/><rect x="11" y="1" width="1" height="1" fill="#404040"/><rect x="4" y="2" width="1" height="1" fill="#404040"/><rect x="6" y="2" width="1" height="1" fill="#404040"/><rect x="8" y="2" width="1" height="1" fill="#404040"/><rect x="10" y="2" width="1" height="1" fill="#404040"/><rect x="12" y="2" width="1" height="1" fill="#404040"/><rect x="5" y="3" width="1" height="1" fill="#404040"/><rect x="7" y="3" width="1" height="1" fill="#404040"/><rect x="9" y="3" width="1" height="1" fill="#404040"/><rect x="11" y="3" width="1" height="1" fill="#404040"/><rect x="13" y="3" width="1" height="1" fill="#404040"/><rect x="2" y="4" width="1" height="1" fill="#404040"/><rect x="4" y="4" width="1" height="1" fill="#404040"/><rect x="6" y="4" width="1" height="1" fill="#404040"/><rect x="10" y="4" width="1" height="1" fill="#404040"/><rect x="12" y="4" width="1" height="1" fill="#404040"/><rect x="14" y="4" width="1" height="1" fill="#404040"/><rect x="3" y="5" width="1" height="1" fill="#404040"/><rect x="5" y="5" width="1" height="1" fill="#404040"/><rect x="7" y="5" width="1" height="1" fill="#404040"/><rect x="11" y="5" width="1" height="1" fill="#404040"/><rect x="13" y="5" width="1" height="1" fill="#404040"/><rect x="15" y="5" width="1" height="1" fill="#404040"/><rect x="2" y="6" width="1" height="1" fill="#404040"/><rect x="4" y="6" width="1" height="1" fill="#404040"/><rect x="6" y="6" width="1" height="1" fill="#404040"/><rect x="10" y="6" width="1" height="1" fill="#404040"/><rect x="12" y="6" width="1" height="1" fill="#404040"/><rect x="14" y="6" width="1" height="1" fill="#404040"/><rect x="3" y="7" width="1" height="1" fill="#404040"/><rect x="5" y="7" width="1" height="1" fill="#404040"/><rect x="7" y="7" width="1" height="1" fill="#404040"/><rect x="11" y="7" width="1" height="1" fill="#404040"/><rect x="13" y="7" width="1" height="1" fill="#404040"/><rect x="15" y="7" width="1" height="1" fill="#404040"/><rect x="2" y="8" width="1" height="1" fill="#404040"/><rect x="4" y="8" width="1" height="1" fill="#404040"/><rect x="6" y="8" width="1" height="1" fill="#404040"/><rect x="10" y="8" width="1" height="1" fill="#404040"/><rect x="12" y="8" width="1" height="1" fill="#404040"/><rect x="14" y="8" width="1" height="1" fill="#404040"/><rect x="3" y="9" width="1" height="1" fill="#404040"/><rect x="5" y="9" width="1" height="1" fill="#404040"/><rect x="7" y="9" width="1" height="1" fill="#404040"/><rect x="11" y="9" width="1" height="1" fill="#404040"/><rect x="13" y="9" width="1" height="1" fill="#404040"/><rect x="15" y="9" width="1" height="1" fill="#404040"/><rect x="2" y="10" width="1" height="1" fill="#404040"/><rect x="4" y="10" width="1" height="1" fill="#404040"/><rect x="6" y="10" width="1" height="1" fill="#404040"/><rect x="10" y="10" width="1" height="1" fill="#404040"/><rect x="12" y="10" width="1" height="1" fill="#404040"/><rect x="14" y="10" width="1" height="1" fill="#404040"/><rect x="3" y="11" width="1" height="1" fill="#404040"/><rect x="5" y="11" width="1" height="1" fill="#404040"/><rect x="7" y="11" width="1" height="1" fill="#404040"/><rect x="11" y="11" width="1" height="1" fill="#404040"/><rect x="13" y="11" width="1" height="1" fill="#404040"/><rect x="15" y="11" width="1" height="1" fill="#404040"/><rect x="2" y="12" width="1" height="1" fill="#404040"/><rect x="4" y="12" width="1" height="1" fill="#404040"/><rect x="6" y="12" width="1" height="1" fill="#404040"/><rect x="10" y="12" width="1" height="1" fill="#404040"/><rect x="12" y="12" width="1" height="1" fill="#404040"/><rect x="14" y="12" width="1" height="1" fill="#404040"/><rect x="0" y="14" width="1" height="1" fill="#2040ff"/><rect x="1" y="13" width="1" height="1" fill="#2040ff"/><rect x="1" y="15" width="1" height="1" fill="#2040ff"/><rect x="2" y="12" width="1" height="1" fill="#2040ff"/><rect x="2" y="16" width="1" height="1" fill="#2040ff"/><rect x="3" y="13" width="1" height="1" fill="#2040ff"/><rect x="3" y="15" width="1" height="1" fill="#2040ff"/><rect x="4" y="14" width="1" height="1" fill="#2040ff"/><rect x="5" y="13" width="1" height="1" fill="#2040ff"/><rect x="5" y="15" width="1" height="1" fill="#2040ff"/><rect x="6" y="14" width="1" height="1" fill="#2040ff"/></svg>
<svg style="left:1372px;top:59px;" width="18" height="18" viewBox="0 0 18 18" shape-rendering="crispEdges"><rect x="6" y="0" width="1" height="1" fill="#404040"/><rect x="8" y="0" width="1" height="1" fill="#404040"/><rect x="10" y="0" width="1" height="1" fill="#404040"/><rect x="5" y="1" width="1" height="1" fill="#404040"/><rect x="7" y="1" width="1" height="1" fill="#404040"/><rect x="9" y="1" width="1" height="1" fill="#404040"/><rect x="11" y="1" width="1" height="1" fill="#404040"/><rect x="4" y="2" width="1" height="1" fill="#404040"/><rect x="6" y="2" width="1" height="1" fill="#404040"/><rect x="8" y="2" width="1" height="1" fill="#404040"/><rect x="10" y="2" width="1" height="1" fill="#404040"/><rect x="12" y="2" width="1" height="1" fill="#404040"/><rect x="5" y="3" width="1" height="1" fill="#404040"/><rect x="7" y="3" width="1" height="1" fill="#404040"/><rect x="9" y="3" width="1" height="1" fill="#404040"/><rect x="11" y="3" width="1" height="1" fill="#404040"/><rect x="13" y="3" width="1" height="1" fill="#404040"/><rect x="2" y="4" width="1" height="1" fill="#404040"/><rect x="4" y="4" width="1" height="1" fill="#404040"/><rect x="6" y="4" width="1" height="1" fill="#404040"/><rect x="10" y="4" width="1" height="1" fill="#404040"/><rect x="12" y="4" width="1" height="1" fill="#404040"/><rect x="14" y="4" width="1" height="1" fill="#404040"/><rect x="3" y="5" width="1" height="1" fill="#404040"/><rect x="5" y="5" width="1" height="1" fill="#404040"/><rect x="7" y="5" width="1" height="1" fill="#404040"/><rect x="11" y="5" width="1" height="1" fill="#404040"/><rect x="13" y="5" width="1" height="1" fill="#404040"/><rect x="15" y="5" width="1" height="1" fill="#404040"/><rect x="2" y="6" width="1" height="1" fill="#404040"/><rect x="4" y="6" width="1" height="1" fill="#404040"/><rect x="6" y="6" width="1" height="1" fill="#404040"/><rect x="10" y="6" width="1" height="1" fill="#404040"/><rect x="12" y="6" width="1" height="1" fill="#404040"/><rect x="14" y="6" width="1" height="1" fill="#404040"/><rect x="3" y="7" width="1" height="1" fill="#404040"/><rect x="5" y="7" width="1" height="1" fill="#404040"/><rect x="7" y="7" width="1" height="1" fill="#404040"/><rect x="11" y="7" width="1" height="1" fill="#404040"/><rect x="13" y="7" width="1" height="1" fill="#404040"/><rect x="15" y="7" width="1" height="1" fill="#404040"/><rect x="2" y="8" width="1" height="1" fill="#404040"/><rect x="4" y="8" width="1" height="1" fill="#404040"/><rect x="6" y="8" width="1" height="1" fill="#404040"/><rect x="10" y="8" width="1" height="1" fill="#404040"/><rect x="12" y="8" width="1" height="1" fill="#404040"/><rect x="14" y="8" width="1" height="1" fill="#404040"/><rect x="3" y="9" width="1" height="1" fill="#404040"/><rect x="5" y="9" width="1" height="1" fill="#404040"/><rect x="7" y="9" width="1" height="1" fill="#404040"/><rect x="11" y="9" width="1" height="1" fill="#404040"/><rect x="13" y="9" width="1" height="1" fill="#404040"/><rect x="15" y="9" width="1" height="1" fill="#404040"/><rect x="2" y="10" width="1" height="1" fill="#404040"/><rect x="4" y="10" width="1" height="1" fill="#404040"/><rect x="6" y="10" width="1" height="1" fill="#404040"/><rect x="10" y="10" width="1" height="1" fill="#404040"/><rect x="12" y="10" width="1" height="1" fill="#404040"/><rect x="14" y="10" width="1" height="1" fill="#404040"/><rect x="3" y="11" width="1" height="1" fill="#404040"/><rect x="5" y="11" width="1" height="1" fill="#404040"/><rect x="7" y="11" width="1" height="1" fill="#404040"/><rect x="11" y="11" width="1" height="1" fill="#404040"/><rect x="13" y="11" width="1" height="1" fill="#404040"/><rect x="15" y="11" width="1" height="1" fill="#404040"/><rect x="2" y="12" width="1" height="1" fill="#404040"/><rect x="4" y="12" width="1" height="1" fill="#404040"/><rect x="6" y="12" width="1" height="1" fill="#404040"/><rect x="10" y="12" width="1" height="1" fill="#404040"/><rect x="12" y="12" width="1" height="1" fill="#404040"/><rect x="14" y="12" width="1" height="1" fill="#404040"/><rect x="11" y="14" width="1" height="1" fill="#2040ff"/><rect x="12" y="13" width="1" height="1" fill="#2040ff"/><rect x="12" y="15" width="1" height="1" fill="#2040ff"/><rect x="13" y="12" width="1" height="1" fill="#2040ff"/><rect x="13" y="16" width="1" height="1" fill="#2040ff"/><rect x="14" y="13" width="1" height="1" fill="#2040ff"/><rect x="14" y="15" width="1" height="1" fill="#2040ff"/><rect x="15" y="14" width="1" height="1" fill="#2040ff"/><rect x="16" y="13" width="1" height="1" fill="#2040ff"/><rect x="16" y="15" width="1" height="1" fill="#2040ff"/><rect x="17" y="14" width="1" height="1" fill="#2040ff"/></svg>
<svg style="left:1397px;top:59px;" width="17" height="17" viewBox="0 0 17 17"><rect x="1" y="4" width="8" height="9" fill="#40404c"/><rect x="2" y="1" width="2" height="4" fill="#40404c"/><rect x="6" y="1" width="2" height="4" fill="#40404c"/><path d="M5,15 L12,8" stroke="#6a98e8" stroke-width="3.5" stroke-linecap="round"/><circle cx="13" cy="7" r="3.2" fill="#b0b0b0"/><circle cx="14" cy="6" r="1.2" fill="#f0f0f0"/></svg>
<svg style="left:1px;top:89px;" width="16" height="17" viewBox="0 0 16 17" shape-rendering="crispEdges"><rect x="5" y="1" width="2" height="12" fill="#f0d000"/><rect x="0.5" y="12.5" width="11" height="3" fill="#f8e000" stroke="#c8a000"/><rect x="1" y="16" width="11" height="1" fill="#403000"/><rect x="7" y="2" width="1" height="11" fill="#806000"/><rect x="11" y="2" width="1" height="6" fill="#403000"/><rect x="9" y="4" width="5" height="2" fill="#f0d000"/><rect x="10" y="2" width="2" height="6" fill="#f0d000"/></svg>
<svg style="left:23px;top:89px;" width="16" height="17" viewBox="0 0 16 17" shape-rendering="crispEdges"><rect x="5" y="1" width="2" height="12" fill="#f0d000"/><rect x="0.5" y="12.5" width="11" height="3" fill="#f8e000" stroke="#c8a000"/><rect x="1" y="16" width="11" height="1" fill="#403000"/><rect x="7" y="2" width="1" height="11" fill="#806000"/><rect x="8" y="5" width="6" height="2" fill="#f0d000"/><rect x="8" y="7" width="6" height="1" fill="#403000"/></svg>
<svg style="left:45px;top:89px;" width="17" height="17" viewBox="0 0 17 17" shape-rendering="crispEdges"><rect x="0" y="2" width="6" height="1" fill="#008000"/><rect x="5" y="2" width="1" height="13" fill="#008000"/><rect x="5" y="14" width="11" height="1" fill="#008000"/><path d="M7,8 L11,4 V6 H16 V10 H11 V12Z" fill="#4000d0"/></svg>
<svg style="left:67px;top:89px;" width="17" height="17" viewBox="0 0 17 17" shape-rendering="crispEdges"><rect x="0" y="14" width="11" height="1" fill="#008000"/><rect x="10" y="2" width="1" height="13" fill="#008000"/><rect x="10" y="2" width="6" height="1" fill="#008000"/><path d="M9,8 L5,4 V6 H0 V10 H5 V12Z" fill="#4000d0"/></svg>
<svg style="left:89px;top:89px;" width="17" height="17" viewBox="0 0 17 17" shape-rendering="crispEdges"><rect x="0" y="2" width="6" height="1" fill="#008000"/><rect x="5" y="2" width="1" height="13" fill="#008000"/><rect x="5" y="14" width="11" height="1" fill="#008000"/><path d="M3,6 H9 L6,10Z" fill="#4000d0"/><path d="M6,11 L9,8 V10 H13 V12 H9 V14Z" fill="#4000d0"/></svg>
<svg style="left:111px;top:89px;" width="17" height="17" viewBox="0 0 17 17" shape-rendering="crispEdges"><rect x="0" y="2" width="9" height="1" fill="#008000"/><rect x="8" y="2" width="1" height="13" fill="#008000"/><rect x="8" y="14" width="8" height="1" fill="#008000"/><path d="M5,6 H11 L8,10Z" fill="#4000d0"/><path d="M8,11 L5,8 V10 H0 V12 H5 V14Z" fill="#4000d0"/></svg>
<svg style="left:133px;top:89px;" width="17" height="17" viewBox="0 0 17 17" shape-rendering="crispEdges"><rect x="0" y="14" width="7" height="1" fill="#008000"/><rect x="6" y="2" width="1" height="13" fill="#008000"/><rect x="6" y="2" width="10" height="1" fill="#008000"/><path d="M3,9 H9 L6,5Z" fill="#4000d0"/><path d="M7,11 L10,8 V10 H15 V12 H10 V14Z" fill="#4000d0"/></svg>
<svg style="left:155px;top:89px;" width="17" height="17" viewBox="0 0 17 17" shape-rendering="crispEdges"><rect x="0" y="14" width="11" height="1" fill="#008000"/><rect x="10" y="2" width="1" height="13" fill="#008000"/><rect x="10" y="2" width="6" height="1" fill="#008000"/><path d="M7,9 H13 L10,5Z" fill="#4000d0"/><path d="M10,11 L7,8 V10 H1 V12 H7 V14Z" fill="#4000d0"/></svg>
<svg style="left:195px;top:90px;" width="17" height="17" viewBox="0 0 17 17"><circle cx="7" cy="7" r="5.5" fill="#fff" stroke="#000" stroke-width="1.5"/><path d="M11,11 L16,16" stroke="#1a3a8a" stroke-width="3"/><path d="M4,7 H10 M7,4 V10" stroke="#000" stroke-width="1.5"/></svg>
<svg style="left:218px;top:90px;" width="17" height="17" viewBox="0 0 17 17"><circle cx="7" cy="7" r="5.5" fill="#fff" stroke="#000" stroke-width="1.5"/><path d="M11,11 L16,16" stroke="#1a3a8a" stroke-width="3"/><path d="M4,7 H10" stroke="#000" stroke-width="1.5"/></svg>
<svg style="left:240px;top:90px;" width="17" height="17" viewBox="0 0 17 17"><circle cx="7" cy="7" r="6" fill="#1a4a90" stroke="#000"/><path d="M11,11 L16,16" stroke="#1a3a8a" stroke-width="3"/><circle cx="5" cy="5" r="1.5" fill="#80a0d0"/></svg>
<svg style="left:262px;top:89px;" width="17" height="18" viewBox="0 0 17 18" shape-rendering="crispEdges"><rect x="5" y="1" width="2" height="12" fill="#f0c000"/><rect x="0.5" y="12.5" width="11" height="3" fill="#f8e080" stroke="#b08000"/><rect x="1" y="16" width="11" height="1" fill="#604000"/></svg>
<svg style="left:262px;top:89px;" width="17" height="18" viewBox="0 0 17 18"><circle cx="12" cy="4.5" r="3.5" fill="#c8c8c8" stroke="#000"/><path d="M14,8 L16,12" stroke="#2040d0" stroke-width="2"/></svg>
<svg style="left:284px;top:89px;" width="17" height="18" viewBox="0 0 17 18" shape-rendering="crispEdges"><rect x="3" y="4" width="2" height="9" fill="#f0c000"/><rect x="0.5" y="12.5" width="6" height="3" fill="#f8e080" stroke="#b08000"/><rect x="10" y="4" width="2" height="9" fill="#f0c000"/><rect x="8.5" y="12.5" width="6" height="3" fill="#f8e080" stroke="#b08000"/><rect x="1" y="16" width="14" height="1" fill="#604000"/></svg>
<svg style="left:284px;top:89px;" width="17" height="18" viewBox="0 0 17 18"><circle cx="11" cy="4.5" r="3.5" fill="#c8c8c8" stroke="#000"/><path d="M13,8 L15,12" stroke="#2040d0" stroke-width="2"/></svg>
<svg style="left:304px;top:89px;" width="17" height="18" viewBox="0 0 17 18" shape-rendering="crispEdges"><rect x="1" y="1" width="10" height="9" fill="none" stroke="#2030c0" stroke-dasharray="1 1"/><circle cx="11" cy="11" r="3.5" fill="#bbb"/><path d="M13,13 L16,17" stroke="#2030c0" stroke-width="1.5" stroke-dasharray="1 1"/></svg>
<div style="left:345px;top:90px;width:19px;height:21px;background:#fafafa;box-sizing:border-box;border:1px solid;border-color:#fff #a0a0a0 #a0a0a0 #fff;"></div>
<svg style="left:348px;top:92px;" width="14" height="16" viewBox="0 0 14 16" shape-rendering="crispEdges"><path d="M7,1 V14 M1,14 H13" stroke="#008000"/></svg>
<div style="left:371px;top:90px;width:19px;height:21px;background:#f6f6f6;box-sizing:border-box;border:1px solid;border-color:#fff #a0a0a0 #a0a0a0 #fff;"></div>
<svg style="left:374px;top:92px;" width="14" height="16" viewBox="0 0 14 16" shape-rendering="crispEdges"><path d="M1,14 H4 V1 H9 V14 H13" stroke="#000080" stroke-width="1.5" fill="#000080"/><path d="M1,15 H13" stroke="#008000"/></svg>
<div style="left:397px;top:90px;width:19px;height:21px;background:#f6f6f6;box-sizing:border-box;border:1px solid;border-color:#fff #a0a0a0 #a0a0a0 #fff;"></div>
<svg style="left:400px;top:92px;" width="14" height="16" viewBox="0 0 14 16" shape-rendering="crispEdges"><rect x="1" y="1" width="12" height="14" fill="#006000" stroke="#000"/><path d="M4,15 V3 M7,15 V3 M10,15 V3" stroke="#00b000"/></svg>
<svg style="left:425px;top:91px;" width="1" height="16" viewBox="0 0 1 16" shape-rendering="crispEdges"><rect x="0" y="0" width="1" height="1" fill="#404040"/><rect x="0" y="2" width="1" height="1" fill="#404040"/><rect x="0" y="4" width="1" height="1" fill="#404040"/><rect x="0" y="6" width="1" height="1" fill="#404040"/><rect x="0" y="8" width="1" height="1" fill="#404040"/><rect x="0" y="10" width="1" height="1" fill="#404040"/><rect x="0" y="12" width="1" height="1" fill="#404040"/><rect x="0" y="14" width="1" height="1" fill="#404040"/></svg>
<svg style="left:434px;top:91px;" width="16" height="16" viewBox="0 0 16 16" shape-rendering="crispEdges"><rect x="0" y="0" width="1" height="1" fill="#406040"/><rect x="0" y="1" width="1" height="1" fill="#2040c0"/><rect x="0" y="2" width="1" height="1" fill="#406040"/><rect x="0" y="3" width="1" height="1" fill="#2040c0"/><rect x="0" y="4" width="1" height="1" fill="#406040"/><rect x="0" y="5" width="1" height="1" fill="#2040c0"/><rect x="0" y="6" width="1" height="1" fill="#406040"/><rect x="0" y="7" width="1" height="1" fill="#2040c0"/><rect x="0" y="8" width="1" height="1" fill="#406040"/><rect x="0" y="9" width="1" height="1" fill="#2040c0"/><rect x="0" y="10" width="1" height="1" fill="#406040"/><rect x="0" y="11" width="1" height="1" fill="#2040c0"/><rect x="0" y="12" width="1" height="1" fill="#406040"/><rect x="0" y="13" width="1" height="1" fill="#2040c0"/><rect x="0" y="14" width="1" height="1" fill="#406040"/><rect x="0" y="15" width="1" height="1" fill="#2040c0"/><rect x="1" y="0" width="1" height="1" fill="#2040c0"/><rect x="1" y="1" width="1" height="1" fill="#406040"/><rect x="1" y="2" width="1" height="1" fill="#2040c0"/><rect x="1" y="3" width="1" height="1" fill="#406040"/><rect x="1" y="4" width="1" height="1" fill="#2040c0"/><rect x="1" y="5" width="1" height="1" fill="#406040"/><rect x="1" y="6" width="1" height="1" fill="#2040c0"/><rect x="1" y="7" width="1" height="1" fill="#406040"/><rect x="1" y="8" width="1" height="1" fill="#2040c0"/><rect x="1" y="9" width="1" height="1" fill="#406040"/><rect x="1" y="10" width="1" height="1" fill="#2040c0"/><rect x="1" y="11" width="1" height="1" fill="#406040"/><rect x="1" y="12" width="1" height="1" fill="#2040c0"/><rect x="1" y="13" width="1" height="1" fill="#406040"/><rect x="1" y="14" width="1" height="1" fill="#2040c0"/><rect x="1" y="15" width="1" height="1" fill="#406040"/><rect x="2" y="0" width="1" height="1" fill="#406040"/><rect x="2" y="1" width="1" height="1" fill="#2040c0"/><rect x="2" y="2" width="1" height="1" fill="#406040"/><rect x="2" y="3" width="1" height="1" fill="#2040c0"/><rect x="2" y="4" width="1" height="1" fill="#406040"/><rect x="2" y="5" width="1" height="1" fill="#2040c0"/><rect x="2" y="6" width="1" height="1" fill="#406040"/><rect x="2" y="7" width="1" height="1" fill="#2040c0"/><rect x="2" y="8" width="1" height="1" fill="#406040"/><rect x="2" y="9" width="1" height="1" fill="#2040c0"/><rect x="2" y="10" width="1" height="1" fill="#406040"/><rect x="2" y="11" width="1" height="1" fill="#2040c0"/><rect x="2" y="12" width="1" height="1" fill="#406040"/><rect x="2" y="13" width="1" height="1" fill="#2040c0"/><rect x="2" y="14" width="1" height="1" fill="#406040"/><rect x="2" y="15" width="1" height="1" fill="#2040c0"/><rect x="3" y="0" width="1" height="1" fill="#2040c0"/><rect x="3" y="1" width="1" height="1" fill="#406040"/><rect x="3" y="2" width="1" height="1" fill="#2040c0"/><rect x="3" y="3" width="1" height="1" fill="#406040"/><rect x="3" y="4" width="1" height="1" fill="#2040c0"/><rect x="3" y="5" width="1" height="1" fill="#406040"/><rect x="3" y="6" width="1" height="1" fill="#2040c0"/><rect x="3" y="7" width="1" height="1" fill="#406040"/><rect x="3" y="8" width="1" height="1" fill="#2040c0"/><rect x="3" y="9" width="1" height="1" fill="#406040"/><rect x="3" y="10" width="1" height="1" fill="#2040c0"/><rect x="3" y="11" width="1" height="1" fill="#406040"/><rect x="3" y="12" width="1" height="1" fill="#2040c0"/><rect x="3" y="13" width="1" height="1" fill="#406040"/><rect x="3" y="14" width="1" height="1" fill="#2040c0"/><rect x="3" y="15" width="1" height="1" fill="#406040"/><rect x="4" y="0" width="1" height="1" fill="#406040"/><rect x="4" y="1" width="1" height="1" fill="#2040c0"/><rect x="4" y="2" width="1" height="1" fill="#406040"/><rect x="4" y="3" width="1" height="1" fill="#2040c0"/><rect x="4" y="4" width="1" height="1" fill="#406040"/><rect x="4" y="5" width="1" height="1" fill="#2040c0"/><rect x="4" y="6" width="1" height="1" fill="#406040"/><rect x="4" y="7" width="1" height="1" fill="#2040c0"/><rect x="4" y="8" width="1" height="1" fill="#406040"/><rect x="4" y="9" width="1" height="1" fill="#2040c0"/><rect x="4" y="10" width="1" height="1" fill="#406040"/><rect x="4" y="11" width="1" height="1" fill="#2040c0"/><rect x="4" y="12" width="1" height="1" fill="#406040"/><rect x="4" y="13" width="1" height="1" fill="#2040c0"/><rect x="4" y="14" width="1" height="1" fill="#406040"/><rect x="4" y="15" width="1" height="1" fill="#2040c0"/><rect x="5" y="0" width="1" height="1" fill="#2040c0"/><rect x="5" y="1" width="1" height="1" fill="#406040"/><rect x="5" y="2" width="1" height="1" fill="#2040c0"/><rect x="5" y="3" width="1" height="1" fill="#406040"/><rect x="5" y="4" width="1" height="1" fill="#2040c0"/><rect x="5" y="5" width="1" height="1" fill="#406040"/><rect x="5" y="6" width="1" height="1" fill="#2040c0"/><rect x="5" y="7" width="1" height="1" fill="#406040"/><rect x="5" y="8" width="1" height="1" fill="#2040c0"/><rect x="5" y="9" width="1" height="1" fill="#406040"/><rect x="5" y="10" width="1" height="1" fill="#2040c0"/><rect x="5" y="11" width="1" height="1" fill="#406040"/><rect x="5" y="12" width="1" height="1" fill="#2040c0"/><rect x="5" y="13" width="1" height="1" fill="#406040"/><rect x="5" y="14" width="1" height="1" fill="#2040c0"/><rect x="5" y="15" width="1" height="1" fill="#406040"/><rect x="6" y="0" width="1" height="1" fill="#406040"/><rect x="6" y="1" width="1" height="1" fill="#2040c0"/><rect x="6" y="2" width="1" height="1" fill="#406040"/><rect x="6" y="3" width="1" height="1" fill="#2040c0"/><rect x="6" y="4" width="1" height="1" fill="#406040"/><rect x="6" y="5" width="1" height="1" fill="#2040c0"/><rect x="6" y="6" width="1" height="1" fill="#406040"/><rect x="6" y="7" width="1" height="1" fill="#2040c0"/><rect x="6" y="8" width="1" height="1" fill="#406040"/><rect x="6" y="9" width="1" height="1" fill="#2040c0"/><rect x="6" y="10" width="1" height="1" fill="#406040"/><rect x="6" y="11" width="1" height="1" fill="#2040c0"/><rect x="6" y="12" width="1" height="1" fill="#406040"/><rect x="6" y="13" width="1" height="1" fill="#2040c0"/><rect x="6" y="14" width="1" height="1" fill="#406040"/><rect x="6" y="15" width="1" height="1" fill="#2040c0"/><rect x="7" y="0" width="1" height="1" fill="#2040c0"/><rect x="7" y="1" width="1" height="1" fill="#406040"/><rect x="7" y="2" width="1" height="1" fill="#2040c0"/><rect x="7" y="3" width="1" height="1" fill="#406040"/><rect x="7" y="4" width="1" height="1" fill="#2040c0"/><rect x="7" y="5" width="1" height="1" fill="#406040"/><rect x="7" y="6" width="1" height="1" fill="#2040c0"/><rect x="7" y="7" width="1" height="1" fill="#406040"/><rect x="7" y="8" width="1" height="1" fill="#2040c0"/><rect x="7" y="9" width="1" height="1" fill="#406040"/><rect x="7" y="10" width="1" height="1" fill="#2040c0"/><rect x="7" y="11" width="1" height="1" fill="#406040"/><rect x="7" y="12" width="1" height="1" fill="#2040c0"/><rect x="7" y="13" width="1" height="1" fill="#406040"/><rect x="7" y="14" width="1" height="1" fill="#2040c0"/><rect x="7" y="15" width="1" height="1" fill="#406040"/><rect x="8" y="0" width="1" height="1" fill="#406040"/><rect x="8" y="1" width="1" height="1" fill="#2040c0"/><rect x="8" y="2" width="1" height="1" fill="#406040"/><rect x="8" y="3" width="1" height="1" fill="#2040c0"/><rect x="8" y="4" width="1" height="1" fill="#406040"/><rect x="8" y="5" width="1" height="1" fill="#2040c0"/><rect x="8" y="6" width="1" height="1" fill="#406040"/><rect x="8" y="7" width="1" height="1" fill="#2040c0"/><rect x="8" y="8" width="1" height="1" fill="#406040"/><rect x="8" y="9" width="1" height="1" fill="#2040c0"/><rect x="8" y="10" width="1" height="1" fill="#406040"/><rect x="8" y="11" width="1" height="1" fill="#2040c0"/><rect x="8" y="12" width="1" height="1" fill="#406040"/><rect x="8" y="13" width="1" height="1" fill="#2040c0"/><rect x="8" y="14" width="1" height="1" fill="#406040"/><rect x="8" y="15" width="1" height="1" fill="#2040c0"/><rect x="9" y="0" width="1" height="1" fill="#2040c0"/><rect x="9" y="1" width="1" height="1" fill="#406040"/><rect x="9" y="2" width="1" height="1" fill="#2040c0"/><rect x="9" y="3" width="1" height="1" fill="#406040"/><rect x="9" y="4" width="1" height="1" fill="#2040c0"/><rect x="9" y="5" width="1" height="1" fill="#406040"/><rect x="9" y="6" width="1" height="1" fill="#2040c0"/><rect x="9" y="7" width="1" height="1" fill="#406040"/><rect x="9" y="8" width="1" height="1" fill="#2040c0"/><rect x="9" y="9" width="1" height="1" fill="#406040"/><rect x="9" y="10" width="1" height="1" fill="#2040c0"/><rect x="9" y="11" width="1" height="1" fill="#406040"/><rect x="9" y="12" width="1" height="1" fill="#2040c0"/><rect x="9" y="13" width="1" height="1" fill="#406040"/><rect x="9" y="14" width="1" height="1" fill="#2040c0"/><rect x="9" y="15" width="1" height="1" fill="#406040"/><rect x="10" y="0" width="1" height="1" fill="#406040"/><rect x="10" y="1" width="1" height="1" fill="#2040c0"/><rect x="10" y="2" width="1" height="1" fill="#406040"/><rect x="10" y="3" width="1" height="1" fill="#2040c0"/><rect x="10" y="4" width="1" height="1" fill="#406040"/><rect x="10" y="5" width="1" height="1" fill="#2040c0"/><rect x="10" y="6" width="1" height="1" fill="#406040"/><rect x="10" y="7" width="1" height="1" fill="#2040c0"/><rect x="10" y="8" width="1" height="1" fill="#406040"/><rect x="10" y="9" width="1" height="1" fill="#2040c0"/><rect x="10" y="10" width="1" height="1" fill="#406040"/><rect x="10" y="11" width="1" height="1" fill="#2040c0"/><rect x="10" y="12" width="1" height="1" fill="#406040"/><rect x="10" y="13" width="1" height="1" fill="#2040c0"/><rect x="10" y="14" width="1" height="1" fill="#406040"/><rect x="10" y="15" width="1" height="1" fill="#2040c0"/><rect x="11" y="0" width="1" height="1" fill="#2040c0"/><rect x="11" y="1" width="1" height="1" fill="#406040"/><rect x="11" y="2" width="1" height="1" fill="#2040c0"/><rect x="11" y="3" width="1" height="1" fill="#406040"/><rect x="11" y="4" width="1" height="1" fill="#2040c0"/><rect x="11" y="5" width="1" height="1" fill="#406040"/><rect x="11" y="6" width="1" height="1" fill="#2040c0"/><rect x="11" y="7" width="1" height="1" fill="#406040"/><rect x="11" y="8" width="1" height="1" fill="#2040c0"/><rect x="11" y="9" width="1" height="1" fill="#406040"/><rect x="11" y="10" width="1" height="1" fill="#2040c0"/><rect x="11" y="11" width="1" height="1" fill="#406040"/><rect x="11" y="12" width="1" height="1" fill="#2040c0"/><rect x="11" y="13" width="1" height="1" fill="#406040"/><rect x="11" y="14" width="1" height="1" fill="#2040c0"/><rect x="11" y="15" width="1" height="1" fill="#406040"/><rect x="12" y="0" width="1" height="1" fill="#406040"/><rect x="12" y="1" width="1" height="1" fill="#2040c0"/><rect x="12" y="2" width="1" height="1" fill="#406040"/><rect x="12" y="3" width="1" height="1" fill="#2040c0"/><rect x="12" y="4" width="1" height="1" fill="#406040"/><rect x="12" y="5" width="1" height="1" fill="#2040c0"/><rect x="12" y="6" width="1" height="1" fill="#406040"/><rect x="12" y="7" width="1" height="1" fill="#2040c0"/><rect x="12" y="8" width="1" height="1" fill="#406040"/><rect x="12" y="9" width="1" height="1" fill="#2040c0"/><rect x="12" y="10" width="1" height="1" fill="#406040"/><rect x="12" y="11" width="1" height="1" fill="#2040c0"/><rect x="12" y="12" width="1" height="1" fill="#406040"/><rect x="12" y="13" width="1" height="1" fill="#2040c0"/><rect x="12" y="14" width="1" height="1" fill="#406040"/><rect x="12" y="15" width="1" height="1" fill="#2040c0"/><rect x="13" y="0" width="1" height="1" fill="#2040c0"/><rect x="13" y="1" width="1" height="1" fill="#406040"/><rect x="13" y="2" width="1" height="1" fill="#2040c0"/><rect x="13" y="3" width="1" height="1" fill="#406040"/><rect x="13" y="4" width="1" height="1" fill="#2040c0"/><rect x="13" y="5" width="1" height="1" fill="#406040"/><rect x="13" y="6" width="1" height="1" fill="#2040c0"/><rect x="13" y="7" width="1" height="1" fill="#406040"/><rect x="13" y="8" width="1" height="1" fill="#2040c0"/><rect x="13" y="9" width="1" height="1" fill="#406040"/><rect x="13" y="10" width="1" height="1" fill="#2040c0"/><rect x="13" y="11" width="1" height="1" fill="#406040"/><rect x="13" y="12" width="1" height="1" fill="#2040c0"/><rect x="13" y="13" width="1" height="1" fill="#406040"/><rect x="13" y="14" width="1" height="1" fill="#2040c0"/><rect x="13" y="15" width="1" height="1" fill="#406040"/><rect x="14" y="0" width="1" height="1" fill="#406040"/><rect x="14" y="1" width="1" height="1" fill="#2040c0"/><rect x="14" y="2" width="1" height="1" fill="#406040"/><rect x="14" y="3" width="1" height="1" fill="#2040c0"/><rect x="14" y="4" width="1" height="1" fill="#406040"/><rect x="14" y="5" width="1" height="1" fill="#2040c0"/><rect x="14" y="6" width="1" height="1" fill="#406040"/><rect x="14" y="7" width="1" height="1" fill="#2040c0"/><rect x="14" y="8" width="1" height="1" fill="#406040"/><rect x="14" y="9" width="1" height="1" fill="#2040c0"/><rect x="14" y="10" width="1" height="1" fill="#406040"/><rect x="14" y="11" width="1" height="1" fill="#2040c0"/><rect x="14" y="12" width="1" height="1" fill="#406040"/><rect x="14" y="13" width="1" height="1" fill="#2040c0"/><rect x="14" y="14" width="1" height="1" fill="#406040"/><rect x="14" y="15" width="1" height="1" fill="#2040c0"/><rect x="15" y="0" width="1" height="1" fill="#2040c0"/><rect x="15" y="1" width="1" height="1" fill="#406040"/><rect x="15" y="2" width="1" height="1" fill="#2040c0"/><rect x="15" y="3" width="1" height="1" fill="#406040"/><rect x="15" y="4" width="1" height="1" fill="#2040c0"/><rect x="15" y="5" width="1" height="1" fill="#406040"/><rect x="15" y="6" width="1" height="1" fill="#2040c0"/><rect x="15" y="7" width="1" height="1" fill="#406040"/><rect x="15" y="8" width="1" height="1" fill="#2040c0"/><rect x="15" y="9" width="1" height="1" fill="#406040"/><rect x="15" y="10" width="1" height="1" fill="#2040c0"/><rect x="15" y="11" width="1" height="1" fill="#406040"/><rect x="15" y="12" width="1" height="1" fill="#2040c0"/><rect x="15" y="13" width="1" height="1" fill="#406040"/><rect x="15" y="14" width="1" height="1" fill="#2040c0"/><rect x="15" y="15" width="1" height="1" fill="#406040"/></svg>
<svg style="left:456px;top:91px;" width="16" height="16" viewBox="0 0 16 16" shape-rendering="crispEdges"><path d="M1,15 H4 V1 H12" stroke="#c0c000" stroke-dasharray="1 1" fill="none"/><rect x="4" y="2" width="4" height="13" fill="#4060a0" opacity="0.7"/></svg>
<svg style="left:478px;top:91px;" width="16" height="16" viewBox="0 0 16 16" shape-rendering="crispEdges"><path d="M1,15 H7 V1 H15" stroke="#008000" stroke-dasharray="1 1" fill="none"/></svg>
<svg style="left:501px;top:91px;" width="16" height="16" viewBox="0 0 16 16" shape-rendering="crispEdges"><path d="M1,15 H9 V1 H15" stroke="#408000" stroke-dasharray="1 1" fill="none"/><path d="M9,5 V15" stroke="#c0c000" stroke-dasharray="1 1"/></svg>
<svg style="left:539px;top:90px;" width="17" height="17" viewBox="0 0 17 17" shape-rendering="crispEdges"><path d="M2,15 H4 V2 H7" stroke="#20c020" fill="none" stroke-width="1.5"/><rect x="10" y="5" width="1" height="1" fill="#2a7aff"/><rect x="9" y="6" width="1" height="1" fill="#2a7aff"/><rect x="10" y="6" width="1" height="1" fill="#2a7aff"/><rect x="8" y="7" width="1" height="1" fill="#2a7aff"/><rect x="9" y="7" width="1" height="1" fill="#2a7aff"/><rect x="10" y="7" width="1" height="1" fill="#2a7aff"/><rect x="7" y="8" width="1" height="1" fill="#2a7aff"/><rect x="8" y="8" width="1" height="1" fill="#2a7aff"/><rect x="9" y="8" width="1" height="1" fill="#2a7aff"/><rect x="10" y="8" width="1" height="1" fill="#2a7aff"/><rect x="8" y="9" width="1" height="1" fill="#2a7aff"/><rect x="9" y="9" width="1" height="1" fill="#2a7aff"/><rect x="10" y="9" width="1" height="1" fill="#2a7aff"/><rect x="9" y="10" width="1" height="1" fill="#2a7aff"/><rect x="10" y="10" width="1" height="1" fill="#2a7aff"/><rect x="10" y="11" width="1" height="1" fill="#2a7aff"/><rect x="11" y="7" width="1" height="1" fill="#2a7aff"/><rect x="13" y="7" width="1" height="1" fill="#2a7aff"/><rect x="15" y="7" width="1" height="1" fill="#2a7aff"/><rect x="11" y="8" width="1" height="1" fill="#2a7aff"/><rect x="12" y="8" width="1" height="1" fill="#2a7aff"/><rect x="13" y="8" width="1" height="1" fill="#2a7aff"/><rect x="14" y="8" width="1" height="1" fill="#2a7aff"/><rect x="15" y="8" width="1" height="1" fill="#2a7aff"/><rect x="11" y="9" width="1" height="1" fill="#2a7aff"/><rect x="13" y="9" width="1" height="1" fill="#2a7aff"/><rect x="15" y="9" width="1" height="1" fill="#2a7aff"/></svg>
<svg style="left:560px;top:90px;" width="18" height="17" viewBox="0 0 18 17" shape-rendering="crispEdges"><rect x="10" y="1" width="1" height="1" fill="#e0c820"/><rect x="10" y="3" width="1" height="1" fill="#e0c820"/><rect x="10" y="5" width="1" height="1" fill="#e0c820"/><rect x="10" y="7" width="1" height="1" fill="#e0c820"/><rect x="10" y="9" width="1" height="1" fill="#e0c820"/><rect x="10" y="11" width="1" height="1" fill="#e0c820"/><rect x="9" y="12" width="1" height="1" fill="#e0c820"/><rect x="11" y="12" width="1" height="1" fill="#e0c820"/><rect x="7" y="13" width="1" height="1" fill="#e0c820"/><rect x="13" y="13" width="1" height="1" fill="#e0c820"/><rect x="7" y="15" width="1" height="1" fill="#e0c820"/><rect x="9" y="15" width="1" height="1" fill="#e0c820"/><rect x="11" y="15" width="1" height="1" fill="#e0c820"/><rect x="13" y="15" width="1" height="1" fill="#e0c820"/><rect x="8" y="14" width="1" height="1" fill="#e0c820"/><rect x="12" y="14" width="1" height="1" fill="#e0c820"/><rect x="9" y="2" width="1" height="1" fill="#e0c820"/><rect x="11" y="2" width="1" height="1" fill="#e0c820"/><rect x="9" y="4" width="1" height="1" fill="#e0c820"/><rect x="11" y="4" width="1" height="1" fill="#e0c820"/><rect x="3" y="5" width="1" height="1" fill="#2a7aff"/><rect x="2" y="6" width="1" height="1" fill="#2a7aff"/><rect x="3" y="6" width="1" height="1" fill="#2a7aff"/><rect x="1" y="7" width="1" height="1" fill="#2a7aff"/><rect x="2" y="7" width="1" height="1" fill="#2a7aff"/><rect x="3" y="7" width="1" height="1" fill="#2a7aff"/><rect x="0" y="8" width="1" height="1" fill="#2a7aff"/><rect x="1" y="8" width="1" height="1" fill="#2a7aff"/><rect x="2" y="8" width="1" height="1" fill="#2a7aff"/><rect x="3" y="8" width="1" height="1" fill="#2a7aff"/><rect x="1" y="9" width="1" height="1" fill="#2a7aff"/><rect x="2" y="9" width="1" height="1" fill="#2a7aff"/><rect x="3" y="9" width="1" height="1" fill="#2a7aff"/><rect x="2" y="10" width="1" height="1" fill="#2a7aff"/><rect x="3" y="10" width="1" height="1" fill="#2a7aff"/><rect x="3" y="11" width="1" height="1" fill="#2a7aff"/><rect x="4" y="7" width="1" height="1" fill="#2a7aff"/><rect x="6" y="7" width="1" height="1" fill="#2a7aff"/><rect x="8" y="7" width="1" height="1" fill="#2a7aff"/><rect x="4" y="8" width="1" height="1" fill="#2a7aff"/><rect x="5" y="8" width="1" height="1" fill="#2a7aff"/><rect x="6" y="8" width="1" height="1" fill="#2a7aff"/><rect x="7" y="8" width="1" height="1" fill="#2a7aff"/><rect x="8" y="8" width="1" height="1" fill="#2a7aff"/><rect x="4" y="9" width="1" height="1" fill="#2a7aff"/><rect x="6" y="9" width="1" height="1" fill="#2a7aff"/><rect x="8" y="9" width="1" height="1" fill="#2a7aff"/></svg>
<svg style="left:583px;top:90px;" width="17" height="17" viewBox="0 0 17 17" shape-rendering="crispEdges"><rect x="4" y="1" width="1" height="1" fill="#e0c820"/><rect x="4" y="3" width="1" height="1" fill="#e0c820"/><rect x="4" y="5" width="1" height="1" fill="#e0c820"/><rect x="4" y="7" width="1" height="1" fill="#e0c820"/><rect x="4" y="9" width="1" height="1" fill="#e0c820"/><rect x="4" y="11" width="1" height="1" fill="#e0c820"/><rect x="3" y="12" width="1" height="1" fill="#e0c820"/><rect x="5" y="12" width="1" height="1" fill="#e0c820"/><rect x="1" y="13" width="1" height="1" fill="#e0c820"/><rect x="7" y="13" width="1" height="1" fill="#e0c820"/><rect x="1" y="15" width="1" height="1" fill="#e0c820"/><rect x="3" y="15" width="1" height="1" fill="#e0c820"/><rect x="5" y="15" width="1" height="1" fill="#e0c820"/><rect x="7" y="15" width="1" height="1" fill="#e0c820"/><rect x="2" y="14" width="1" height="1" fill="#e0c820"/><rect x="6" y="14" width="1" height="1" fill="#e0c820"/><rect x="3" y="2" width="1" height="1" fill="#e0c820"/><rect x="5" y="2" width="1" height="1" fill="#e0c820"/><rect x="3" y="4" width="1" height="1" fill="#e0c820"/><rect x="5" y="4" width="1" height="1" fill="#e0c820"/><rect x="13" y="5" width="1" height="1" fill="#2a7aff"/><rect x="14" y="6" width="1" height="1" fill="#2a7aff"/><rect x="13" y="6" width="1" height="1" fill="#2a7aff"/><rect x="15" y="7" width="1" height="1" fill="#2a7aff"/><rect x="14" y="7" width="1" height="1" fill="#2a7aff"/><rect x="13" y="7" width="1" height="1" fill="#2a7aff"/><rect x="16" y="8" width="1" height="1" fill="#2a7aff"/><rect x="15" y="8" width="1" height="1" fill="#2a7aff"/><rect x="14" y="8" width="1" height="1" fill="#2a7aff"/><rect x="13" y="8" width="1" height="1" fill="#2a7aff"/><rect x="15" y="9" width="1" height="1" fill="#2a7aff"/><rect x="14" y="9" width="1" height="1" fill="#2a7aff"/><rect x="13" y="9" width="1" height="1" fill="#2a7aff"/><rect x="14" y="10" width="1" height="1" fill="#2a7aff"/><rect x="13" y="10" width="1" height="1" fill="#2a7aff"/><rect x="13" y="11" width="1" height="1" fill="#2a7aff"/><rect x="12" y="7" width="1" height="1" fill="#2a7aff"/><rect x="10" y="7" width="1" height="1" fill="#2a7aff"/><rect x="8" y="7" width="1" height="1" fill="#2a7aff"/><rect x="12" y="8" width="1" height="1" fill="#2a7aff"/><rect x="11" y="8" width="1" height="1" fill="#2a7aff"/><rect x="10" y="8" width="1" height="1" fill="#2a7aff"/><rect x="9" y="8" width="1" height="1" fill="#2a7aff"/><rect x="8" y="8" width="1" height="1" fill="#2a7aff"/><rect x="12" y="9" width="1" height="1" fill="#2a7aff"/><rect x="10" y="9" width="1" height="1" fill="#2a7aff"/><rect x="8" y="9" width="1" height="1" fill="#2a7aff"/></svg>
<svg style="left:607px;top:91px;" width="15" height="15" viewBox="0 0 15 15" shape-rendering="crispEdges"><rect x="0" y="0" width="1" height="1" fill="#ff2020"/><rect x="1" y="2" width="1" height="1" fill="#ff2020"/><rect x="2" y="3" width="1" height="1" fill="#ff2020"/><rect x="3" y="5" width="1" height="1" fill="#ff2020"/><rect x="4" y="6" width="1" height="1" fill="#ff2020"/><rect x="5" y="7" width="1" height="1" fill="#ff2020"/><rect x="4" y="8" width="1" height="1" fill="#ff2020"/><rect x="3" y="9" width="1" height="1" fill="#ff2020"/><rect x="2" y="11" width="1" height="1" fill="#ff2020"/><rect x="1" y="12" width="1" height="1" fill="#ff2020"/><rect x="0" y="14" width="1" height="1" fill="#ff2020"/><rect x="9" y="0" width="1" height="1" fill="#ff2020"/><rect x="8" y="2" width="1" height="1" fill="#ff2020"/><rect x="7" y="3" width="1" height="1" fill="#ff2020"/><rect x="6" y="5" width="1" height="1" fill="#ff2020"/><rect x="6" y="9" width="1" height="1" fill="#ff2020"/><rect x="7" y="11" width="1" height="1" fill="#ff2020"/><rect x="8" y="12" width="1" height="1" fill="#ff2020"/><rect x="9" y="14" width="1" height="1" fill="#ff2020"/><rect x="1" y="1" width="1" height="1" fill="#ff2020"/><rect x="8" y="1" width="1" height="1" fill="#ff2020"/><rect x="1" y="13" width="1" height="1" fill="#ff2020"/><rect x="8" y="13" width="1" height="1" fill="#ff2020"/><rect x="9" y="4" width="1" height="1" fill="#2a7aff"/><rect x="8" y="5" width="1" height="1" fill="#2a7aff"/><rect x="9" y="5" width="1" height="1" fill="#2a7aff"/><rect x="7" y="6" width="1" height="1" fill="#2a7aff"/><rect x="8" y="6" width="1" height="1" fill="#2a7aff"/><rect x="9" y="6" width="1" height="1" fill="#2a7aff"/><rect x="6" y="7" width="1" height="1" fill="#2a7aff"/><rect x="7" y="7" width="1" height="1" fill="#2a7aff"/><rect x="8" y="7" width="1" height="1" fill="#2a7aff"/><rect x="9" y="7" width="1" height="1" fill="#2a7aff"/><rect x="7" y="8" width="1" height="1" fill="#2a7aff"/><rect x="8" y="8" width="1" height="1" fill="#2a7aff"/><rect x="9" y="8" width="1" height="1" fill="#2a7aff"/><rect x="8" y="9" width="1" height="1" fill="#2a7aff"/><rect x="9" y="9" width="1" height="1" fill="#2a7aff"/><rect x="9" y="10" width="1" height="1" fill="#2a7aff"/><rect x="10" y="6" width="1" height="1" fill="#2a7aff"/><rect x="12" y="6" width="1" height="1" fill="#2a7aff"/><rect x="14" y="6" width="1" height="1" fill="#2a7aff"/><rect x="10" y="7" width="1" height="1" fill="#2a7aff"/><rect x="11" y="7" width="1" height="1" fill="#2a7aff"/><rect x="12" y="7" width="1" height="1" fill="#2a7aff"/><rect x="13" y="7" width="1" height="1" fill="#2a7aff"/><rect x="14" y="7" width="1" height="1" fill="#2a7aff"/><rect x="10" y="8" width="1" height="1" fill="#2a7aff"/><rect x="12" y="8" width="1" height="1" fill="#2a7aff"/><rect x="14" y="8" width="1" height="1" fill="#2a7aff"/></svg>
<svg style="left:628px;top:91px;" width="16" height="15" viewBox="0 0 16 15" shape-rendering="crispEdges"><rect x="0" y="0" width="1" height="1" fill="#000"/><rect x="1" y="1" width="1" height="1" fill="#000"/><rect x="2" y="2" width="1" height="1" fill="#000"/><rect x="3" y="3" width="1" height="1" fill="#000"/><rect x="4" y="4" width="1" height="1" fill="#000"/><rect x="5" y="5" width="1" height="1" fill="#000"/><rect x="6" y="6" width="1" height="1" fill="#000"/><rect x="5" y="8" width="1" height="1" fill="#000"/><rect x="4" y="9" width="1" height="1" fill="#000"/><rect x="3" y="10" width="1" height="1" fill="#000"/><rect x="2" y="11" width="1" height="1" fill="#000"/><rect x="1" y="12" width="1" height="1" fill="#000"/><rect x="0" y="13" width="1" height="1" fill="#000"/><rect x="6" y="7" width="1" height="1" fill="#000"/><rect x="10" y="4" width="1" height="1" fill="#2a7aff"/><rect x="9" y="5" width="1" height="1" fill="#2a7aff"/><rect x="10" y="5" width="1" height="1" fill="#2a7aff"/><rect x="8" y="6" width="1" height="1" fill="#2a7aff"/><rect x="9" y="6" width="1" height="1" fill="#2a7aff"/><rect x="10" y="6" width="1" height="1" fill="#2a7aff"/><rect x="7" y="7" width="1" height="1" fill="#2a7aff"/><rect x="8" y="7" width="1" height="1" fill="#2a7aff"/><rect x="9" y="7" width="1" height="1" fill="#2a7aff"/><rect x="10" y="7" width="1" height="1" fill="#2a7aff"/><rect x="8" y="8" width="1" height="1" fill="#2a7aff"/><rect x="9" y="8" width="1" height="1" fill="#2a7aff"/><rect x="10" y="8" width="1" height="1" fill="#2a7aff"/><rect x="9" y="9" width="1" height="1" fill="#2a7aff"/><rect x="10" y="9" width="1" height="1" fill="#2a7aff"/><rect x="10" y="10" width="1" height="1" fill="#2a7aff"/><rect x="11" y="6" width="1" height="1" fill="#2a7aff"/><rect x="13" y="6" width="1" height="1" fill="#2a7aff"/><rect x="15" y="6" width="1" height="1" fill="#2a7aff"/><rect x="11" y="7" width="1" height="1" fill="#2a7aff"/><rect x="12" y="7" width="1" height="1" fill="#2a7aff"/><rect x="13" y="7" width="1" height="1" fill="#2a7aff"/><rect x="14" y="7" width="1" height="1" fill="#2a7aff"/><rect x="15" y="7" width="1" height="1" fill="#2a7aff"/><rect x="11" y="8" width="1" height="1" fill="#2a7aff"/><rect x="13" y="8" width="1" height="1" fill="#2a7aff"/><rect x="15" y="8" width="1" height="1" fill="#2a7aff"/></svg>
<svg style="left:650px;top:91px;" width="16" height="15" viewBox="0 0 16 15" shape-rendering="crispEdges"><rect x="0" y="0" width="1" height="1" fill="#2050e0"/><rect x="1" y="1" width="1" height="1" fill="#2050e0"/><rect x="2" y="2" width="1" height="1" fill="#2050e0"/><rect x="3" y="3" width="1" height="1" fill="#2050e0"/><rect x="4" y="4" width="1" height="1" fill="#2050e0"/><rect x="5" y="5" width="1" height="1" fill="#2050e0"/><rect x="5" y="9" width="1" height="1" fill="#2050e0"/><rect x="4" y="10" width="1" height="1" fill="#2050e0"/><rect x="3" y="11" width="1" height="1" fill="#2050e0"/><rect x="2" y="12" width="1" height="1" fill="#2050e0"/><rect x="1" y="13" width="1" height="1" fill="#2050e0"/><rect x="0" y="14" width="1" height="1" fill="#2050e0"/><rect x="15" y="0" width="1" height="1" fill="#2050e0"/><rect x="14" y="1" width="1" height="1" fill="#2050e0"/><rect x="13" y="2" width="1" height="1" fill="#2050e0"/><rect x="12" y="3" width="1" height="1" fill="#2050e0"/><rect x="11" y="4" width="1" height="1" fill="#2050e0"/><rect x="10" y="5" width="1" height="1" fill="#2050e0"/><rect x="10" y="9" width="1" height="1" fill="#2050e0"/><rect x="11" y="10" width="1" height="1" fill="#2050e0"/><rect x="12" y="11" width="1" height="1" fill="#2050e0"/><rect x="13" y="12" width="1" height="1" fill="#2050e0"/><rect x="14" y="13" width="1" height="1" fill="#2050e0"/><rect x="15" y="14" width="1" height="1" fill="#2050e0"/><rect x="6" y="7" width="1" height="1" fill="#2050e0"/><rect x="8" y="7" width="1" height="1" fill="#2050e0"/><rect x="10" y="7" width="1" height="1" fill="#2050e0"/><rect x="4" y="7" width="1" height="1" fill="#2050e0"/><rect x="12" y="7" width="1" height="1" fill="#2050e0"/><rect x="6" y="6" width="1" height="1" fill="#2050e0"/><rect x="6" y="8" width="1" height="1" fill="#2050e0"/><rect x="9" y="6" width="1" height="1" fill="#2050e0"/><rect x="9" y="8" width="1" height="1" fill="#2050e0"/></svg>
<svg style="left:672px;top:91px;" width="16" height="15" viewBox="0 0 16 15" shape-rendering="crispEdges"><rect x="15" y="0" width="1" height="1" fill="#000"/><rect x="14" y="1" width="1" height="1" fill="#000"/><rect x="13" y="2" width="1" height="1" fill="#000"/><rect x="12" y="3" width="1" height="1" fill="#000"/><rect x="11" y="4" width="1" height="1" fill="#000"/><rect x="10" y="5" width="1" height="1" fill="#000"/><rect x="9" y="6" width="1" height="1" fill="#000"/><rect x="9" y="7" width="1" height="1" fill="#000"/><rect x="10" y="8" width="1" height="1" fill="#000"/><rect x="11" y="9" width="1" height="1" fill="#000"/><rect x="12" y="10" width="1" height="1" fill="#000"/><rect x="13" y="11" width="1" height="1" fill="#000"/><rect x="14" y="12" width="1" height="1" fill="#000"/><rect x="15" y="13" width="1" height="1" fill="#000"/><rect x="5" y="4" width="1" height="1" fill="#2a7aff"/><rect x="6" y="5" width="1" height="1" fill="#2a7aff"/><rect x="5" y="5" width="1" height="1" fill="#2a7aff"/><rect x="7" y="6" width="1" height="1" fill="#2a7aff"/><rect x="6" y="6" width="1" height="1" fill="#2a7aff"/><rect x="5" y="6" width="1" height="1" fill="#2a7aff"/><rect x="8" y="7" width="1" height="1" fill="#2a7aff"/><rect x="7" y="7" width="1" height="1" fill="#2a7aff"/><rect x="6" y="7" width="1" height="1" fill="#2a7aff"/><rect x="5" y="7" width="1" height="1" fill="#2a7aff"/><rect x="7" y="8" width="1" height="1" fill="#2a7aff"/><rect x="6" y="8" width="1" height="1" fill="#2a7aff"/><rect x="5" y="8" width="1" height="1" fill="#2a7aff"/><rect x="6" y="9" width="1" height="1" fill="#2a7aff"/><rect x="5" y="9" width="1" height="1" fill="#2a7aff"/><rect x="5" y="10" width="1" height="1" fill="#2a7aff"/><rect x="4" y="6" width="1" height="1" fill="#2a7aff"/><rect x="2" y="6" width="1" height="1" fill="#2a7aff"/><rect x="0" y="6" width="1" height="1" fill="#2a7aff"/><rect x="4" y="7" width="1" height="1" fill="#2a7aff"/><rect x="3" y="7" width="1" height="1" fill="#2a7aff"/><rect x="2" y="7" width="1" height="1" fill="#2a7aff"/><rect x="1" y="7" width="1" height="1" fill="#2a7aff"/><rect x="0" y="7" width="1" height="1" fill="#2a7aff"/><rect x="4" y="8" width="1" height="1" fill="#2a7aff"/><rect x="2" y="8" width="1" height="1" fill="#2a7aff"/><rect x="0" y="8" width="1" height="1" fill="#2a7aff"/></svg>
<svg style="left:697px;top:91px;" width="1" height="16" viewBox="0 0 1 16" shape-rendering="crispEdges"><rect x="0" y="0" width="1" height="1" fill="#404040"/><rect x="0" y="2" width="1" height="1" fill="#404040"/><rect x="0" y="4" width="1" height="1" fill="#404040"/><rect x="0" y="6" width="1" height="1" fill="#404040"/><rect x="0" y="8" width="1" height="1" fill="#404040"/><rect x="0" y="10" width="1" height="1" fill="#404040"/><rect x="0" y="12" width="1" height="1" fill="#404040"/><rect x="0" y="14" width="1" height="1" fill="#404040"/></svg>
<svg style="left:705px;top:91px;" width="18" height="16" viewBox="0 0 18 16" shape-rendering="crispEdges"><path d="M1,4 H10 L12,6 M1,11 H10 L14,8" stroke="#444" stroke-dasharray="1 1" fill="none" stroke-width="1.5"/></svg>
<svg style="left:727px;top:98px;" width="4" height="3" viewBox="0 0 4 3" shape-rendering="crispEdges"><rect x="0" y="0" width="1" height="1" fill="#000"/><rect x="1" y="1" width="1" height="1" fill="#000"/><rect x="2" y="0" width="1" height="1" fill="#000"/><rect x="3" y="0" width="0" height="0" fill="#000"/></svg>
<svg style="left:737px;top:91px;shape-rendering:auto" width="15" height="15" viewBox="0 0 15 15" shape-rendering="crispEdges"><path d="M1,1 L14,14 M14,1 L1,14" stroke="#a02020" stroke-width="2.2" stroke-dasharray="1 0.5"/></svg>
<svg style="left:757px;top:98px;" width="4" height="3" viewBox="0 0 4 3" shape-rendering="crispEdges"><rect x="0" y="0" width="1" height="1" fill="#000"/><rect x="1" y="1" width="1" height="1" fill="#000"/><rect x="2" y="0" width="1" height="1" fill="#000"/></svg>
<svg style="left:766px;top:90px;" width="18" height="17" viewBox="0 0 18 17" shape-rendering="crispEdges"><path d="M1,9 L8,2 L17,9 L10,16Z" fill="none" stroke="#333" stroke-dasharray="1 1" stroke-width="1.5"/></svg>
<svg style="left:791px;top:91px;" width="1" height="16" viewBox="0 0 1 16" shape-rendering="crispEdges"><rect x="0" y="0" width="1" height="1" fill="#404040"/><rect x="0" y="2" width="1" height="1" fill="#404040"/><rect x="0" y="4" width="1" height="1" fill="#404040"/><rect x="0" y="6" width="1" height="1" fill="#404040"/><rect x="0" y="8" width="1" height="1" fill="#404040"/><rect x="0" y="10" width="1" height="1" fill="#404040"/><rect x="0" y="12" width="1" height="1" fill="#404040"/><rect x="0" y="14" width="1" height="1" fill="#404040"/></svg>
<div style="left:800px;top:90px;width:20px;height:21px;background:#f6f6f6;box-sizing:border-box;border:1px solid;border-color:#fff #a0a0a0 #a0a0a0 #fff;"></div>
<svg style="left:803px;top:92px;" width="16" height="16" viewBox="0 0 16 16" shape-rendering="crispEdges"><path d="M2,14 L14,2" stroke="#aaa" stroke-dasharray="1 1" stroke-width="2"/><path d="M2,10 L6,14" stroke="#d04040"/></svg>
<div style="left:826px;top:90px;width:20px;height:21px;background:#f6f6f6;box-sizing:border-box;border:1px solid;border-color:#fff #a0a0a0 #a0a0a0 #fff;"></div>
<svg style="left:829px;top:92px;" width="14" height="16" viewBox="0 0 14 16" shape-rendering="crispEdges"><rect x="0" y="1" width="1" height="1" fill="#20a040"/><rect x="0" y="3" width="1" height="1" fill="#333"/><rect x="0" y="5" width="1" height="1" fill="#2040c0"/><rect x="0" y="7" width="1" height="1" fill="#20a040"/><rect x="0" y="9" width="1" height="1" fill="#333"/><rect x="0" y="11" width="1" height="1" fill="#2040c0"/><rect x="0" y="13" width="1" height="1" fill="#20a040"/><rect x="0" y="15" width="1" height="1" fill="#333"/><rect x="2" y="1" width="1" height="1" fill="#20a040"/><rect x="2" y="3" width="1" height="1" fill="#333"/><rect x="2" y="5" width="1" height="1" fill="#2040c0"/><rect x="2" y="7" width="1" height="1" fill="#20a040"/><rect x="2" y="9" width="1" height="1" fill="#333"/><rect x="2" y="11" width="1" height="1" fill="#2040c0"/><rect x="2" y="13" width="1" height="1" fill="#20a040"/><rect x="2" y="15" width="1" height="1" fill="#333"/><rect x="4" y="1" width="1" height="1" fill="#20a040"/><rect x="4" y="3" width="1" height="1" fill="#333"/><rect x="4" y="5" width="1" height="1" fill="#2040c0"/><rect x="4" y="7" width="1" height="1" fill="#20a040"/><rect x="4" y="9" width="1" height="1" fill="#333"/><rect x="4" y="11" width="1" height="1" fill="#2040c0"/><rect x="4" y="13" width="1" height="1" fill="#20a040"/><rect x="4" y="15" width="1" height="1" fill="#333"/><rect x="6" y="1" width="1" height="1" fill="#20a040"/><rect x="6" y="3" width="1" height="1" fill="#333"/><rect x="6" y="5" width="1" height="1" fill="#2040c0"/><rect x="6" y="7" width="1" height="1" fill="#20a040"/><rect x="6" y="9" width="1" height="1" fill="#333"/><rect x="6" y="11" width="1" height="1" fill="#2040c0"/><rect x="6" y="13" width="1" height="1" fill="#20a040"/><rect x="6" y="15" width="1" height="1" fill="#333"/><rect x="8" y="1" width="1" height="1" fill="#20a040"/><rect x="8" y="3" width="1" height="1" fill="#333"/><rect x="8" y="5" width="1" height="1" fill="#2040c0"/><rect x="8" y="7" width="1" height="1" fill="#20a040"/><rect x="8" y="9" width="1" height="1" fill="#333"/><rect x="8" y="11" width="1" height="1" fill="#2040c0"/><rect x="8" y="13" width="1" height="1" fill="#20a040"/><rect x="8" y="15" width="1" height="1" fill="#333"/><rect x="10" y="1" width="1" height="1" fill="#20a040"/><rect x="10" y="3" width="1" height="1" fill="#333"/><rect x="10" y="5" width="1" height="1" fill="#2040c0"/><rect x="10" y="7" width="1" height="1" fill="#20a040"/><rect x="10" y="9" width="1" height="1" fill="#333"/><rect x="10" y="11" width="1" height="1" fill="#2040c0"/><rect x="10" y="13" width="1" height="1" fill="#20a040"/><rect x="10" y="15" width="1" height="1" fill="#333"/><rect x="12" y="1" width="1" height="1" fill="#20a040"/><rect x="12" y="3" width="1" height="1" fill="#333"/><rect x="12" y="5" width="1" height="1" fill="#2040c0"/><rect x="12" y="7" width="1" height="1" fill="#20a040"/><rect x="12" y="9" width="1" height="1" fill="#333"/><rect x="12" y="11" width="1" height="1" fill="#2040c0"/><rect x="12" y="13" width="1" height="1" fill="#20a040"/><rect x="12" y="15" width="1" height="1" fill="#333"/></svg>
<div style="left:0px;top:116px;width:1514px;height:472px;background:#c8c8c8;"></div>
<div style="left:0px;top:117px;width:143px;height:437px;background:#f0f0f0;"></div>
<div style="left:142px;top:117px;width:1px;height:437px;background:#a0a0a0;"></div>
<svg style="left:-8px;top:119px;" width="14" height="18" viewBox="0 0 14 18"><path d="M4,1.5 H9 Q12,2 12,6 L10.5,13" fill="#fafaff" stroke="#000" stroke-width="1.3" stroke-dasharray="1.5 0.8"/><circle cx="9" cy="14.5" r="2.6" fill="#e01030" stroke="#000"/></svg>
<div style="left:7px;top:122px;font-size:11px;line-height:13px;color:#000;white-space:pre;font-family:'Liberation Sans', sans-serif;">sim - Default</div>
<svg style="left:73px;top:125px;" width="18" height="7" viewBox="0 0 18 7" shape-rendering="crispEdges"><rect x="0" y="0" width="1" height="1" fill="#000"/><rect x="1" y="3" width="1" height="1" fill="#000"/><rect x="0" y="6" width="1" height="1" fill="#000"/><rect x="3" y="0" width="1" height="1" fill="#000"/><rect x="4" y="3" width="1" height="1" fill="#000"/><rect x="3" y="6" width="1" height="1" fill="#000"/><rect x="6" y="0" width="1" height="1" fill="#000"/><rect x="7" y="3" width="1" height="1" fill="#000"/><rect x="6" y="6" width="1" height="1" fill="#000"/><rect x="9" y="0" width="1" height="1" fill="#000"/><rect x="10" y="3" width="1" height="1" fill="#000"/><rect x="9" y="6" width="1" height="1" fill="#000"/><rect x="12" y="0" width="1" height="1" fill="#000"/><rect x="13" y="3" width="1" height="1" fill="#000"/><rect x="12" y="6" width="1" height="1" fill="#000"/><rect x="15" y="0" width="1" height="1" fill="#000"/><rect x="16" y="3" width="1" height="1" fill="#000"/><rect x="15" y="6" width="1" height="1" fill="#000"/></svg>
<div style="left:0px;top:117px;width:142px;height:1px;background:#a0a0a0;"></div>
<div style="left:0px;top:118px;width:142px;height:1px;background:#ffffff;"></div>
<div style="left:0px;top:137px;width:142px;height:1px;background:#a0a0a0;"></div>
<div style="left:94px;top:120px;width:12px;height:14px;background:#f0f0f0;box-sizing:border-box;border:1px solid;border-color:#fff #a0a0a0 #a0a0a0 #fff;"></div>
<div style="left:110px;top:120px;width:13px;height:14px;background:#f0f0f0;box-sizing:border-box;border:1px solid;border-color:#fff #a0a0a0 #a0a0a0 #fff;"></div>
<div style="left:127px;top:120px;width:13px;height:14px;background:#f0f0f0;box-sizing:border-box;border:1px solid;border-color:#fff #a0a0a0 #a0a0a0 #fff;"></div>
<svg style="left:96px;top:122px;" width="9" height="9" viewBox="0 0 9 9" shape-rendering="crispEdges"><path d="M4,0 V9 M0,4 H9" stroke="#000" stroke-width="2"/></svg>
<svg style="left:113px;top:123px;" width="9" height="9" viewBox="0 0 9 9" shape-rendering="crispEdges"><rect x="0.5" y="4.5" width="4" height="4" fill="none" stroke="#000"/><path d="M3,6 L8,1 M5,1 H8 V4" stroke="#000" fill="none" stroke-width="1.2"/></svg>
<svg style="left:130px;top:123px;" width="9" height="9" viewBox="0 0 9 9"><path d="M0.5,0.5 L8.5,8.5 M8.5,0.5 L0.5,8.5" stroke="#000" stroke-width="1.5"/></svg>
<div style="left:0px;top:138px;width:135px;height:17px;background:#f0f0f0;box-sizing:border-box;border-right:1px solid #a0a0a0;border-bottom:1px solid #a0a0a0;border-top:1px solid #fff;"></div>
<div style="left:1px;top:141px;font-size:11px;line-height:13px;color:#000;white-space:pre;font-family:'Liberation Sans', sans-serif;">Instance</div>
<svg style="left:124px;top:141px;shape-rendering:auto" width="8" height="7" viewBox="0 0 8 7" shape-rendering="crispEdges"><path d="M0.5,0.5 H7.5 L4,6.5Z" fill="#fff" stroke="#a0a0a0"/></svg>
<div style="left:135px;top:138px;width:7px;height:17px;background:#f0f0f0;box-sizing:border-box;border-right:1px solid #a0a0a0;border-bottom:1px solid #a0a0a0;border-top:1px solid #fff;"></div>
<div style="left:137px;top:141px;font-size:11px;line-height:13px;color:#000;white-space:pre;font-family:'Liberation Sans', sans-serif;">D</div>
<div style="left:0px;top:155px;width:142px;height:383px;background:#ffffff;"></div>
<div style="left:0px;top:349px;width:142px;height:16px;background:#c0ccd8;"></div>
<div style="left:16px;top:172px;width:1px;height:186px;background:#808080;"></div>
<div style="left:-7px;top:161px;width:11px;height:11px;background:linear-gradient(#ffffff,#d8dcf0);box-sizing:border-box;border:1px solid #9098b8;border-radius:2px;"></div>
<div style="left:-4px;top:166px;width:5px;height:1px;background:#000;"></div>
<div style="left:4px;top:166px;width:6px;height:1px;background:#808080;"></div>
<svg style="left:10px;top:160px;shape-rendering:auto" width="12" height="12" viewBox="0 0 12 12" shape-rendering="crispEdges"><rect x="0" y="0" width="12" height="12" fill="#0e6890"/><path d="M0,0 H12 L9,3 H3 V9 L0,12Z" fill="#9ce0f8"/><rect x="3" y="3" width="6" height="6" fill="#14bff0"/><path d="M12,0 L9,3 M0,12 L3,9" stroke="#000" stroke-width="1.2"/></svg>
<div style="left:29px;top:159px;font-size:11px;line-height:13px;color:#000;white-space:pre;font-family:'Liberation Sans', sans-serif;">testbench_aes_sb...</div>
<div style="left:137px;top:159px;font-size:11px;line-height:13px;color:#000;white-space:pre;font-family:'Liberation Sans', sans-serif;">t</div>
<div style="left:16px;top:182px;width:12px;height:1px;background:#808080;"></div>
<div style="left:11px;top:177px;width:11px;height:11px;background:linear-gradient(#ffffff,#d8dcf0);box-sizing:border-box;border:1px solid #9098b8;border-radius:2px;"></div>
<div style="left:14px;top:182px;width:5px;height:1px;background:#000;"></div>
<div style="left:16px;top:180px;width:1px;height:5px;background:#000;"></div>
<svg style="left:28px;top:176px;shape-rendering:auto" width="12" height="12" viewBox="0 0 12 12" shape-rendering="crispEdges"><rect x="0" y="0" width="12" height="12" fill="#0e6890"/><path d="M0,0 H12 L9,3 H3 V9 L0,12Z" fill="#9ce0f8"/><rect x="3" y="3" width="6" height="6" fill="#14bff0"/><path d="M12,0 L9,3 M0,12 L3,9" stroke="#000" stroke-width="1.2"/></svg>
<div style="left:46px;top:175px;font-size:11px;line-height:13px;color:#000;white-space:pre;font-family:'Liberation Sans', sans-serif;">dut</div>
<div style="left:137px;top:175px;font-size:11px;line-height:13px;color:#000;white-space:pre;font-family:'Liberation Sans', sans-serif;">s</div>
<div style="left:16px;top:198px;width:11px;height:1px;background:#808080;"></div>
<svg style="left:27px;top:191px;" width="13" height="13" viewBox="0 0 13 13"><circle cx="6.5" cy="6.5" r="6.5" fill="#1a88b0"/><path d="M0.3,6 A6.3,6.3 0 0 1 12.7,5.5 A7,7 0 0 0 5.5,12.8 A6.3,6.3 0 0 1 0.3,6Z" fill="#38bce8"/><ellipse cx="4.2" cy="3.8" rx="2" ry="1.5" fill="#e8fbff" transform="rotate(-35 4.2 3.8)"/></svg>
<div style="left:46px;top:191px;font-size:11px;line-height:13px;color:#000;white-space:pre;font-family:'Liberation Sans', sans-serif;">#ASSIGN#21</div>
<div style="left:137px;top:191px;font-size:11px;line-height:13px;color:#000;white-space:pre;font-family:'Liberation Sans', sans-serif;">t</div>
<div style="left:16px;top:214px;width:11px;height:1px;background:#808080;"></div>
<svg style="left:27px;top:207px;" width="13" height="13" viewBox="0 0 13 13"><circle cx="6.5" cy="6.5" r="6.5" fill="#1a88b0"/><path d="M0.3,6 A6.3,6.3 0 0 1 12.7,5.5 A7,7 0 0 0 5.5,12.8 A6.3,6.3 0 0 1 0.3,6Z" fill="#38bce8"/><ellipse cx="4.2" cy="3.8" rx="2" ry="1.5" fill="#e8fbff" transform="rotate(-35 4.2 3.8)"/></svg>
<div style="left:46px;top:207px;font-size:11px;line-height:13px;color:#000;white-space:pre;font-family:'Liberation Sans', sans-serif;">#ASSIGN#22</div>
<div style="left:137px;top:207px;font-size:11px;line-height:13px;color:#000;white-space:pre;font-family:'Liberation Sans', sans-serif;">t</div>
<div style="left:16px;top:230px;width:11px;height:1px;background:#808080;"></div>
<svg style="left:27px;top:223px;" width="13" height="13" viewBox="0 0 13 13"><circle cx="6.5" cy="6.5" r="6.5" fill="#1a88b0"/><path d="M0.3,6 A6.3,6.3 0 0 1 12.7,5.5 A7,7 0 0 0 5.5,12.8 A6.3,6.3 0 0 1 0.3,6Z" fill="#38bce8"/><ellipse cx="4.2" cy="3.8" rx="2" ry="1.5" fill="#e8fbff" transform="rotate(-35 4.2 3.8)"/></svg>
<div style="left:46px;top:223px;font-size:11px;line-height:13px;color:#000;white-space:pre;font-family:'Liberation Sans', sans-serif;">#ASSIGN#23</div>
<div style="left:137px;top:223px;font-size:11px;line-height:13px;color:#000;white-space:pre;font-family:'Liberation Sans', sans-serif;">t</div>
<div style="left:16px;top:246px;width:11px;height:1px;background:#808080;"></div>
<svg style="left:27px;top:239px;" width="13" height="13" viewBox="0 0 13 13"><circle cx="6.5" cy="6.5" r="6.5" fill="#1a88b0"/><path d="M0.3,6 A6.3,6.3 0 0 1 12.7,5.5 A7,7 0 0 0 5.5,12.8 A6.3,6.3 0 0 1 0.3,6Z" fill="#38bce8"/><ellipse cx="4.2" cy="3.8" rx="2" ry="1.5" fill="#e8fbff" transform="rotate(-35 4.2 3.8)"/></svg>
<div style="left:46px;top:239px;font-size:11px;line-height:13px;color:#000;white-space:pre;font-family:'Liberation Sans', sans-serif;">#ASSIGN#24</div>
<div style="left:137px;top:239px;font-size:11px;line-height:13px;color:#000;white-space:pre;font-family:'Liberation Sans', sans-serif;">t</div>
<div style="left:16px;top:262px;width:11px;height:1px;background:#808080;"></div>
<svg style="left:27px;top:255px;" width="13" height="13" viewBox="0 0 13 13"><circle cx="6.5" cy="6.5" r="6.5" fill="#1a88b0"/><path d="M0.3,6 A6.3,6.3 0 0 1 12.7,5.5 A7,7 0 0 0 5.5,12.8 A6.3,6.3 0 0 1 0.3,6Z" fill="#38bce8"/><ellipse cx="4.2" cy="3.8" rx="2" ry="1.5" fill="#e8fbff" transform="rotate(-35 4.2 3.8)"/></svg>
<div style="left:46px;top:255px;font-size:11px;line-height:13px;color:#000;white-space:pre;font-family:'Liberation Sans', sans-serif;">#ASSIGN#26</div>
<div style="left:137px;top:255px;font-size:11px;line-height:13px;color:#000;white-space:pre;font-family:'Liberation Sans', sans-serif;">t</div>
<div style="left:16px;top:278px;width:11px;height:1px;background:#808080;"></div>
<svg style="left:27px;top:271px;" width="13" height="13" viewBox="0 0 13 13"><circle cx="6.5" cy="6.5" r="6.5" fill="#1a88b0"/><path d="M0.3,6 A6.3,6.3 0 0 1 12.7,5.5 A7,7 0 0 0 5.5,12.8 A6.3,6.3 0 0 1 0.3,6Z" fill="#38bce8"/><ellipse cx="4.2" cy="3.8" rx="2" ry="1.5" fill="#e8fbff" transform="rotate(-35 4.2 3.8)"/></svg>
<div style="left:46px;top:271px;font-size:11px;line-height:13px;color:#000;white-space:pre;font-family:'Liberation Sans', sans-serif;">#ASSIGN#27</div>
<div style="left:137px;top:271px;font-size:11px;line-height:13px;color:#000;white-space:pre;font-family:'Liberation Sans', sans-serif;">t</div>
<div style="left:16px;top:294px;width:11px;height:1px;background:#808080;"></div>
<svg style="left:27px;top:287px;" width="13" height="13" viewBox="0 0 13 13"><circle cx="6.5" cy="6.5" r="6.5" fill="#1a88b0"/><path d="M0.3,6 A6.3,6.3 0 0 1 12.7,5.5 A7,7 0 0 0 5.5,12.8 A6.3,6.3 0 0 1 0.3,6Z" fill="#38bce8"/><ellipse cx="4.2" cy="3.8" rx="2" ry="1.5" fill="#e8fbff" transform="rotate(-35 4.2 3.8)"/></svg>
<div style="left:46px;top:287px;font-size:11px;line-height:13px;color:#000;white-space:pre;font-family:'Liberation Sans', sans-serif;">#ASSIGN#28</div>
<div style="left:137px;top:287px;font-size:11px;line-height:13px;color:#000;white-space:pre;font-family:'Liberation Sans', sans-serif;">t</div>
<div style="left:16px;top:310px;width:11px;height:1px;background:#808080;"></div>
<svg style="left:27px;top:303px;" width="13" height="13" viewBox="0 0 13 13"><circle cx="6.5" cy="6.5" r="6.5" fill="#1a88b0"/><path d="M0.3,6 A6.3,6.3 0 0 1 12.7,5.5 A7,7 0 0 0 5.5,12.8 A6.3,6.3 0 0 1 0.3,6Z" fill="#38bce8"/><ellipse cx="4.2" cy="3.8" rx="2" ry="1.5" fill="#e8fbff" transform="rotate(-35 4.2 3.8)"/></svg>
<div style="left:46px;top:303px;font-size:11px;line-height:13px;color:#000;white-space:pre;font-family:'Liberation Sans', sans-serif;">#ASSIGN#29</div>
<div style="left:137px;top:303px;font-size:11px;line-height:13px;color:#000;white-space:pre;font-family:'Liberation Sans', sans-serif;">t</div>
<div style="left:16px;top:326px;width:11px;height:1px;background:#808080;"></div>
<svg style="left:27px;top:319px;" width="13" height="13" viewBox="0 0 13 13"><circle cx="6.5" cy="6.5" r="6.5" fill="#1a88b0"/><path d="M0.3,6 A6.3,6.3 0 0 1 12.7,5.5 A7,7 0 0 0 5.5,12.8 A6.3,6.3 0 0 1 0.3,6Z" fill="#38bce8"/><ellipse cx="4.2" cy="3.8" rx="2" ry="1.5" fill="#e8fbff" transform="rotate(-35 4.2 3.8)"/></svg>
<div style="left:46px;top:319px;font-size:11px;line-height:13px;color:#000;white-space:pre;font-family:'Liberation Sans', sans-serif;">#ALWAYS#50</div>
<div style="left:137px;top:319px;font-size:11px;line-height:13px;color:#000;white-space:pre;font-family:'Liberation Sans', sans-serif;">t</div>
<div style="left:16px;top:342px;width:11px;height:1px;background:#808080;"></div>
<svg style="left:27px;top:335px;" width="13" height="13" viewBox="0 0 13 13"><circle cx="6.5" cy="6.5" r="6.5" fill="#1a88b0"/><path d="M0.3,6 A6.3,6.3 0 0 1 12.7,5.5 A7,7 0 0 0 5.5,12.8 A6.3,6.3 0 0 1 0.3,6Z" fill="#38bce8"/><ellipse cx="4.2" cy="3.8" rx="2" ry="1.5" fill="#e8fbff" transform="rotate(-35 4.2 3.8)"/></svg>
<div style="left:46px;top:335px;font-size:11px;line-height:13px;color:#000;white-space:pre;font-family:'Liberation Sans', sans-serif;">#ASSIGN#55</div>
<div style="left:137px;top:335px;font-size:11px;line-height:13px;color:#000;white-space:pre;font-family:'Liberation Sans', sans-serif;">t</div>
<div style="left:16px;top:358px;width:11px;height:1px;background:#808080;"></div>
<svg style="left:27px;top:351px;" width="13" height="13" viewBox="0 0 13 13"><circle cx="6.5" cy="6.5" r="6.5" fill="#1a88b0"/><path d="M0.3,6 A6.3,6.3 0 0 1 12.7,5.5 A7,7 0 0 0 5.5,12.8 A6.3,6.3 0 0 1 0.3,6Z" fill="#38bce8"/><ellipse cx="4.2" cy="3.8" rx="2" ry="1.5" fill="#e8fbff" transform="rotate(-35 4.2 3.8)"/></svg>
<div style="left:46px;top:351px;font-size:11px;line-height:13px;color:#000;white-space:pre;font-family:'Liberation Sans', sans-serif;">#INITIAL#59</div>
<div style="left:137px;top:351px;font-size:11px;line-height:13px;color:#000;white-space:pre;font-family:'Liberation Sans', sans-serif;">t</div>
<div style="left:-7px;top:369px;width:11px;height:11px;background:linear-gradient(#ffffff,#d8dcf0);box-sizing:border-box;border:1px solid #9098b8;border-radius:2px;"></div>
<div style="left:-4px;top:374px;width:5px;height:1px;background:#000;"></div>
<div style="left:4px;top:374px;width:6px;height:1px;background:#808080;"></div>
<svg style="left:10px;top:368px;shape-rendering:auto" width="12" height="12" viewBox="0 0 12 12" shape-rendering="crispEdges"><rect x="0" y="0" width="12" height="12" fill="#0e6890"/><path d="M0,0 H12 L9,3 H3 V9 L0,12Z" fill="#9ce0f8"/><rect x="3" y="3" width="6" height="6" fill="#14bff0"/><path d="M12,0 L9,3 M0,12 L3,9" stroke="#000" stroke-width="1.2"/></svg>
<div style="left:29px;top:367px;font-size:11px;line-height:13px;color:#000;white-space:pre;font-family:'Liberation Sans', sans-serif;">std</div>
<div style="left:137px;top:367px;font-size:11px;line-height:13px;color:#000;white-space:pre;font-family:'Liberation Sans', sans-serif;">s</div>
<svg style="left:8px;top:381px;" width="17" height="17" viewBox="0 0 17 17" shape-rendering="crispEdges"><rect x="0" y="1" width="2" height="16" fill="#0020f0"/><rect x="0" y="15" width="17" height="2" fill="#0020f0"/><rect x="2" y="2" width="1" height="13" fill="#60e0ff"/></svg>
<svg style="left:8px;top:381px;" width="17" height="17" viewBox="0 0 17 17"><path d="M3.5,9.5 Q8.5,-1 14,9" stroke="#ff2020" fill="none" stroke-width="2.4"/><path d="M3.5,1.5 Q8.5,11 14.5,1.5" stroke="#20c8e8" fill="none" stroke-width="2.2"/><path d="M3.5,14.5 Q9,6 15.5,14.5" stroke="#20b020" fill="none" stroke-width="2.4"/></svg>
<div style="left:30px;top:383px;font-size:11px;line-height:13px;color:#000;white-space:pre;font-family:'Liberation Sans', sans-serif;">#vsim_capacity#</div>
<div style="left:-14px;top:538px;width:156px;height:15px;background:#f0f0f0;background-image:repeating-conic-gradient(#f7f7f7 0 25%, #e6e6e6 0 50%);background-size:2px 2px;"></div>
<div style="left:-14px;top:538px;width:16px;height:15px;background:#f0f0f0;box-sizing:border-box;border-style:solid;border-width:1px;border-color:#fff #a0a0a0 #a0a0a0 #fff;box-shadow:1px 1px 0 #696969;"></div>
<svg style="left:-8px;top:542px;" width="5" height="8" viewBox="0 0 5 8" shape-rendering="crispEdges"><polygon points="4,0 4,7 0,3.5" fill="#000"/></svg>
<div style="left:126px;top:538px;width:16px;height:15px;background:#f0f0f0;box-sizing:border-box;border-style:solid;border-width:1px;border-color:#fff #a0a0a0 #a0a0a0 #fff;box-shadow:1px 1px 0 #696969;"></div>
<svg style="left:132px;top:542px;" width="5" height="8" viewBox="0 0 5 8" shape-rendering="crispEdges"><polygon points="0,0 4,3.5 0,7" fill="#000"/></svg>
<div style="left:4px;top:538px;width:18px;height:15px;background:#f0f0f0;box-sizing:border-box;border-style:solid;border-width:1px;border-color:#fff #a0a0a0 #a0a0a0 #fff;box-shadow:1px 1px 0 #696969;"></div>
<div style="left:0px;top:554px;width:143px;height:24px;background:#f0f0f0;"></div>
<div style="left:0px;top:557px;width:143px;height:1px;background:#000;"></div>
<div style="left:-3px;top:557px;width:61px;height:21px;background:#d4d4d4;box-sizing:border-box;border:1px solid #000;border-radius:0 0 4px 4px;"></div>
<div style="left:-3px;top:560px;font-size:11px;line-height:13px;color:#000;white-space:pre;font-family:'Liberation Sans', sans-serif;">mory List</div>
<svg style="left:49px;top:562px;shape-rendering:auto" width="7" height="7" viewBox="0 0 7 7" shape-rendering="crispEdges"><path d="M0.5,0.5 L6.5,6.5 M6.5,0.5 L0.5,6.5" stroke="#b0b0b0" stroke-width="1.6"/></svg>
<div style="left:60px;top:557px;width:59px;height:21px;background:#f0f0f0;box-sizing:border-box;border:1px solid #000;border-top:none;border-radius:0 0 4px 4px;"></div>
<svg style="left:65px;top:558px;shape-rendering:auto" width="16" height="16" viewBox="0 0 16 16" shape-rendering="crispEdges"><path d="M4,1 H13 L10,12 H1Z" fill="#fff" stroke="#000"/><circle cx="3" cy="13" r="2" fill="#c00000"/><circle cx="12" cy="13" r="2" fill="#c00000"/><path d="M5,4 H10 M4,7 H9" stroke="#000"/></svg>
<div style="left:84px;top:560px;font-size:11px;line-height:13px;color:#000;white-space:pre;font-family:'Liberation Sans', sans-serif;">sim</div>
<svg style="left:106px;top:562px;shape-rendering:auto" width="7" height="7" viewBox="0 0 7 7" shape-rendering="crispEdges"><path d="M0.5,0.5 L6.5,6.5 M6.5,0.5 L0.5,6.5" stroke="#b0b0b0" stroke-width="1.6"/></svg>
<div style="left:123px;top:557px;width:10px;height:16px;background:#f0f0f0;box-sizing:border-box;border:1px solid;border-color:#fff #a0a0a0 #a0a0a0 #fff;"></div>
<svg style="left:125px;top:561px;" width="5" height="8" viewBox="0 0 5 8" shape-rendering="crispEdges"><polygon points="4,0 4,7 0,3.5" fill="#000"/></svg>
<div style="left:133px;top:557px;width:10px;height:16px;background:#f0f0f0;box-sizing:border-box;border:1px solid;border-color:#fff #a0a0a0 #a0a0a0 #fff;"></div>
<svg style="left:135px;top:561px;" width="5" height="8" viewBox="0 0 5 8" shape-rendering="crispEdges"><path d="M0.5,0.5 L4,4 L0.5,7.5" stroke="#000" fill="none"/></svg>
<div style="left:141px;top:117px;width:1px;height:437px;background:#f0f0f0;"></div>
<div style="left:142px;top:117px;width:1px;height:437px;background:#a0a0a0;"></div>
<div style="left:143px;top:116px;width:7px;height:463px;background:#c8c8c8;"></div>
<div style="left:150px;top:117px;width:247px;height:227px;background:#f0f0f0;box-sizing:border-box;border:1px solid;border-color:#a0a0a0 #a0a0a0 #a0a0a0 #a0a0a0;box-shadow:inset 1px 1px 0 #fff;"></div>
<svg style="left:153px;top:120px;" width="16" height="16" viewBox="0 0 16 16"><path d="M3,6 L7,2 L10,4 L6,8Z" fill="#c030e0"/><rect x="8" y="7" width="7" height="7" fill="#20a040"/><path d="M5,7 L10,12 L5,16 L0,12Z" fill="#1050ff"/><circle cx="10" cy="7" r="3" fill="#20e0f0"/></svg>
<div style="left:172px;top:122px;font-size:11px;line-height:13px;color:#000;white-space:pre;font-family:'Liberation Sans', sans-serif;">Objects</div>
<div style="left:215px;top:126px;width:54px;height:1px;background:#808080;"></div>
<div style="left:215px;top:127px;width:54px;height:1px;background:#fff;"></div>
<div style="left:215px;top:131px;width:54px;height:1px;background:#808080;"></div>
<div style="left:215px;top:132px;width:54px;height:1px;background:#fff;"></div>
<div style="left:293px;top:126px;width:52px;height:1px;background:#808080;"></div>
<div style="left:293px;top:127px;width:52px;height:1px;background:#fff;"></div>
<div style="left:293px;top:131px;width:52px;height:1px;background:#808080;"></div>
<div style="left:293px;top:132px;width:52px;height:1px;background:#fff;"></div>
<svg style="left:272px;top:125px;" width="18" height="8" viewBox="0 0 18 8" shape-rendering="crispEdges"><rect x="0" y="0" width="1" height="1" fill="#333"/><rect x="1" y="3" width="1" height="1" fill="#333"/><rect x="0" y="6" width="1" height="1" fill="#333"/><rect x="3" y="0" width="1" height="1" fill="#333"/><rect x="4" y="3" width="1" height="1" fill="#333"/><rect x="3" y="6" width="1" height="1" fill="#333"/><rect x="6" y="0" width="1" height="1" fill="#333"/><rect x="7" y="3" width="1" height="1" fill="#333"/><rect x="6" y="6" width="1" height="1" fill="#333"/><rect x="9" y="0" width="1" height="1" fill="#333"/><rect x="10" y="3" width="1" height="1" fill="#333"/><rect x="9" y="6" width="1" height="1" fill="#333"/><rect x="12" y="0" width="1" height="1" fill="#333"/><rect x="13" y="3" width="1" height="1" fill="#333"/><rect x="12" y="6" width="1" height="1" fill="#333"/><rect x="15" y="0" width="1" height="1" fill="#333"/><rect x="16" y="3" width="1" height="1" fill="#333"/><rect x="15" y="6" width="1" height="1" fill="#333"/></svg>
<div style="left:343px;top:126px;width:1px;height:6px;background:#808080;"></div>
<div style="left:348px;top:120px;width:12px;height:14px;background:#f0f0f0;box-sizing:border-box;border:1px solid;border-color:#fff #a0a0a0 #a0a0a0 #fff;"></div>
<div style="left:364px;top:120px;width:13px;height:14px;background:#f0f0f0;box-sizing:border-box;border:1px solid;border-color:#fff #a0a0a0 #a0a0a0 #fff;"></div>
<div style="left:381px;top:120px;width:13px;height:14px;background:#f0f0f0;box-sizing:border-box;border:1px solid;border-color:#fff #a0a0a0 #a0a0a0 #fff;"></div>
<svg style="left:350px;top:122px;" width="9" height="9" viewBox="0 0 9 9" shape-rendering="crispEdges"><path d="M4,0 V9 M0,4 H9" stroke="#000" stroke-width="2"/></svg>
<svg style="left:367px;top:123px;" width="9" height="9" viewBox="0 0 9 9" shape-rendering="crispEdges"><rect x="0.5" y="4.5" width="4" height="4" fill="none" stroke="#000"/><path d="M3,6 L8,1 M5,1 H8 V4" stroke="#000" fill="none" stroke-width="1.2"/></svg>
<svg style="left:384px;top:123px;" width="9" height="9" viewBox="0 0 9 9"><path d="M0.5,0.5 L8.5,8.5 M8.5,0.5 L0.5,8.5" stroke="#000" stroke-width="1.5"/></svg>
<div style="left:151px;top:137px;width:226px;height:1px;background:#a0a0a0;"></div>
<div style="left:151px;top:138px;width:14px;height:17px;background:#f0f0f0;box-sizing:border-box;border-right:1px solid #a0a0a0;border-bottom:1px solid #a0a0a0;border-top:1px solid #fff;"></div>
<svg style="left:155px;top:143px;shape-rendering:auto" width="7" height="6" viewBox="0 0 7 6" shape-rendering="crispEdges"><path d="M0,0 H7 L3.5,6Z" fill="#555"/></svg>
<div style="left:165px;top:138px;width:212px;height:17px;background:#f0f0f0;box-sizing:border-box;border-right:1px solid #a0a0a0;border-bottom:1px solid #a0a0a0;border-top:1px solid #fff;"></div>
<div style="left:167px;top:141px;font-size:11px;line-height:13px;color:#000;white-space:pre;font-family:'Liberation Sans', sans-serif;">Name</div>
<div style="left:269px;top:138px;width:98px;height:16px;background:#e8f0e0;box-sizing:border-box;border:1px solid #c0c0c0;"></div>
<svg style="left:270px;top:141px;" width="14" height="12" viewBox="0 0 14 12" shape-rendering="crispEdges"><path d="M0.5,0.5 H3.5 V11.5 H8" stroke="#000" fill="none" stroke-width="1.2"/><path d="M4,5.5 L8,2 V4 H13 V7 H8 V9Z" fill="#808080"/></svg>
<div style="left:286px;top:138px;width:1px;height:16px;background:#c0c0c0;"></div>
<svg style="left:290px;top:141px;" width="10" height="10" viewBox="0 0 10 10"><circle cx="5" cy="5" r="4.3" fill="#00dd00" stroke="#000" stroke-width="0.8"/></svg>
<div style="left:303px;top:143px;font-family:'Liberation Mono', monospace;font-size:12px;letter-spacing:-0.2px;line-height:14px;color:#000">891 ns</div>
<div style="left:348px;top:138px;width:1px;height:16px;background:#c0c0c0;"></div>
<svg style="left:350px;top:141px;" width="14" height="12" viewBox="0 0 14 12" shape-rendering="crispEdges"><path d="M5,11.5 H9.5 V0.5 H13.5" stroke="#000" fill="none" stroke-width="1.2"/><path d="M10,5.5 L6,2 V4 H1 V7 H6 V9Z" fill="#808080"/></svg>
<svg style="left:369px;top:142px;" width="5" height="8" viewBox="0 0 5 8" shape-rendering="crispEdges"><polygon points="0,0 4,3.5 0,7" fill="#000"/></svg>
<div style="left:152px;top:155px;width:225px;height:169px;background:#50588c;"></div>
<div style="left:152px;top:155px;width:225px;height:169px;overflow:hidden">
<div style="left:16px;top:-1px;width:6px;height:1px;background:#c0c0c0;"></div>
<div style="left:6px;top:-6px;width:11px;height:11px;background:linear-gradient(#ffffff,#d8dcf0);box-sizing:border-box;border:1px solid #9098b8;border-radius:2px;"></div>
<div style="left:9px;top:-1px;width:5px;height:1px;background:#000;"></div>
<div style="left:11px;top:-3px;width:1px;height:5px;background:#000;"></div>
<svg style="left:21px;top:-9px;" width="15" height="15" viewBox="0 0 15 15"><path d="M0,7.5 L7.5,0 V4 L4,7.5Z" fill="#a4e6ff"/><path d="M7.5,0 L15,7.5 H11 L7.5,4Z" fill="#1a94d8"/><path d="M15,7.5 L7.5,15 V11 L11,7.5Z" fill="#0a6494"/><path d="M7.5,15 L0,7.5 H4 L7.5,11Z" fill="#1a8cd0"/><path d="M7.5,4 L11,7.5 L7.5,11 L4,7.5Z" fill="#10c4f6"/></svg>
<div style="left:40px;top:-8px;font-size:11px;line-height:13px;color:#ffffff;white-space:pre;font-family:'Liberation Sans', sans-serif;">plaintext</div>
<div style="left:150px;top:-8px;font-size:11px;line-height:13px;color:#ffffff;white-space:pre;font-family:'Liberation Sans', sans-serif;">-No D...</div>
<div style="left:193px;top:-8px;font-size:11px;line-height:13px;color:#ffffff;white-space:pre;font-family:'Liberation Sans', sans-serif;">Pack...</div>
<div style="left:16px;top:15px;width:6px;height:1px;background:#c0c0c0;"></div>
<div style="left:6px;top:10px;width:11px;height:11px;background:linear-gradient(#ffffff,#d8dcf0);box-sizing:border-box;border:1px solid #9098b8;border-radius:2px;"></div>
<div style="left:9px;top:15px;width:5px;height:1px;background:#000;"></div>
<div style="left:11px;top:13px;width:1px;height:5px;background:#000;"></div>
<svg style="left:21px;top:7px;" width="15" height="15" viewBox="0 0 15 15"><path d="M0,7.5 L7.5,0 V4 L4,7.5Z" fill="#a4e6ff"/><path d="M7.5,0 L15,7.5 H11 L7.5,4Z" fill="#1a94d8"/><path d="M15,7.5 L7.5,15 V11 L11,7.5Z" fill="#0a6494"/><path d="M7.5,15 L0,7.5 H4 L7.5,11Z" fill="#1a8cd0"/><path d="M7.5,4 L11,7.5 L7.5,11 L4,7.5Z" fill="#10c4f6"/></svg>
<div style="left:40px;top:8px;font-size:11px;line-height:13px;color:#ffffff;white-space:pre;font-family:'Liberation Sans', sans-serif;">cyphertext</div>
<div style="left:150px;top:8px;font-size:11px;line-height:13px;color:#ffffff;white-space:pre;font-family:'Liberation Sans', sans-serif;">-No D...</div>
<div style="left:193px;top:8px;font-size:11px;line-height:13px;color:#ffffff;white-space:pre;font-family:'Liberation Sans', sans-serif;">Pack...</div>
<div style="left:16px;top:31px;width:6px;height:1px;background:#c0c0c0;"></div>
<div style="left:6px;top:26px;width:11px;height:11px;background:linear-gradient(#ffffff,#d8dcf0);box-sizing:border-box;border:1px solid #9098b8;border-radius:2px;"></div>
<div style="left:9px;top:31px;width:5px;height:1px;background:#000;"></div>
<div style="left:11px;top:29px;width:1px;height:5px;background:#000;"></div>
<svg style="left:21px;top:23px;" width="15" height="15" viewBox="0 0 15 15"><path d="M0,7.5 L7.5,0 V4 L4,7.5Z" fill="#a4e6ff"/><path d="M7.5,0 L15,7.5 H11 L7.5,4Z" fill="#1a94d8"/><path d="M15,7.5 L7.5,15 V11 L11,7.5Z" fill="#0a6494"/><path d="M7.5,15 L0,7.5 H4 L7.5,11Z" fill="#1a8cd0"/><path d="M7.5,4 L11,7.5 L7.5,11 L4,7.5Z" fill="#10c4f6"/></svg>
<div style="left:40px;top:24px;font-size:11px;line-height:13px;color:#ffffff;white-space:pre;font-family:'Liberation Sans', sans-serif;">expected</div>
<div style="left:150px;top:24px;font-size:11px;line-height:13px;color:#ffffff;white-space:pre;font-family:'Liberation Sans', sans-serif;">-No D...</div>
<div style="left:193px;top:24px;font-size:11px;line-height:13px;color:#ffffff;white-space:pre;font-family:'Liberation Sans', sans-serif;">Pack...</div>
<div style="left:16px;top:47px;width:6px;height:1px;background:#c0c0c0;"></div>
<div style="left:6px;top:42px;width:11px;height:11px;background:linear-gradient(#ffffff,#d8dcf0);box-sizing:border-box;border:1px solid #9098b8;border-radius:2px;"></div>
<div style="left:9px;top:47px;width:5px;height:1px;background:#000;"></div>
<div style="left:11px;top:45px;width:1px;height:5px;background:#000;"></div>
<svg style="left:21px;top:39px;" width="15" height="15" viewBox="0 0 15 15"><path d="M0,7.5 L7.5,0 V4 L4,7.5Z" fill="#a4e6ff"/><path d="M7.5,0 L15,7.5 H11 L7.5,4Z" fill="#1a94d8"/><path d="M15,7.5 L7.5,15 V11 L11,7.5Z" fill="#0a6494"/><path d="M7.5,15 L0,7.5 H4 L7.5,11Z" fill="#1a8cd0"/><path d="M7.5,4 L11,7.5 L7.5,11 L4,7.5Z" fill="#10c4f6"/></svg>
<div style="left:40px;top:40px;font-size:11px;line-height:13px;color:#ffffff;white-space:pre;font-family:'Liberation Sans', sans-serif;">comb</div>
<div style="left:150px;top:40px;font-size:11px;line-height:13px;color:#ffffff;white-space:pre;font-family:'Liberation Sans', sans-serif;">-No D...</div>
<div style="left:193px;top:40px;font-size:11px;line-height:13px;color:#ffffff;white-space:pre;font-family:'Liberation Sans', sans-serif;">Pack...</div>
<svg style="left:21px;top:55px;" width="15" height="15" viewBox="0 0 15 15"><path d="M0,7.5 L7.5,0 V4 L4,7.5Z" fill="#a4e6ff"/><path d="M7.5,0 L15,7.5 H11 L7.5,4Z" fill="#1a94d8"/><path d="M15,7.5 L7.5,15 V11 L11,7.5Z" fill="#0a6494"/><path d="M7.5,15 L0,7.5 H4 L7.5,11Z" fill="#1a8cd0"/><path d="M7.5,4 L11,7.5 L7.5,11 L4,7.5Z" fill="#10c4f6"/></svg>
<div style="left:40px;top:56px;font-size:11px;line-height:13px;color:#ffffff;white-space:pre;font-family:'Liberation Sans', sans-serif;">delay</div>
<div style="left:150px;top:56px;font-size:11px;line-height:13px;color:#ffffff;white-space:pre;font-family:'Liberation Sans', sans-serif;">-No D...</div>
<div style="left:193px;top:56px;font-size:11px;line-height:13px;color:#ffffff;white-space:pre;font-family:'Liberation Sans', sans-serif;">Regi...</div>
<div style="left:16px;top:79px;width:6px;height:1px;background:#c0c0c0;"></div>
<div style="left:6px;top:74px;width:11px;height:11px;background:linear-gradient(#ffffff,#d8dcf0);box-sizing:border-box;border:1px solid #9098b8;border-radius:2px;"></div>
<div style="left:9px;top:79px;width:5px;height:1px;background:#000;"></div>
<div style="left:11px;top:77px;width:1px;height:5px;background:#000;"></div>
<svg style="left:21px;top:71px;" width="15" height="15" viewBox="0 0 15 15"><path d="M0,7.5 L7.5,0 V4 L4,7.5Z" fill="#a4e6ff"/><path d="M7.5,0 L15,7.5 H11 L7.5,4Z" fill="#1a94d8"/><path d="M15,7.5 L7.5,15 V11 L11,7.5Z" fill="#0a6494"/><path d="M7.5,15 L0,7.5 H4 L7.5,11Z" fill="#1a8cd0"/><path d="M7.5,4 L11,7.5 L7.5,11 L4,7.5Z" fill="#10c4f6"/></svg>
<div style="left:40px;top:72px;font-size:11px;line-height:13px;color:#ffffff;white-space:pre;font-family:'Liberation Sans', sans-serif;">input_bytes_2d</div>
<div style="left:150px;top:72px;font-size:11px;line-height:13px;color:#ffffff;white-space:pre;font-family:'Liberation Sans', sans-serif;">-No D...</div>
<div style="left:193px;top:72px;font-size:11px;line-height:13px;color:#ffffff;white-space:pre;font-family:'Liberation Sans', sans-serif;">Fixe...</div>
<div style="left:0px;top:86px;width:225px;height:16px;background:#c0ccd8;"></div>
<div style="left:16px;top:95px;width:6px;height:1px;background:#c0c0c0;"></div>
<div style="left:6px;top:90px;width:11px;height:11px;background:linear-gradient(#ffffff,#d8dcf0);box-sizing:border-box;border:1px solid #9098b8;border-radius:2px;"></div>
<div style="left:9px;top:95px;width:5px;height:1px;background:#000;"></div>
<div style="left:11px;top:93px;width:1px;height:5px;background:#000;"></div>
<svg style="left:21px;top:87px;" width="15" height="15" viewBox="0 0 15 15"><path d="M0,7.5 L7.5,0 V4 L4,7.5Z" fill="#a4e6ff"/><path d="M7.5,0 L15,7.5 H11 L7.5,4Z" fill="#1a94d8"/><path d="M15,7.5 L7.5,15 V11 L11,7.5Z" fill="#0a6494"/><path d="M7.5,15 L0,7.5 H4 L7.5,11Z" fill="#1a8cd0"/><path d="M7.5,4 L11,7.5 L7.5,11 L4,7.5Z" fill="#10c4f6"/></svg>
<div style="left:40px;top:88px;font-size:11px;line-height:13px;color:#000;white-space:pre;font-family:'Liberation Sans', sans-serif;">input_bytes_1d</div>
<div style="left:150px;top:88px;font-size:11px;line-height:13px;color:#000;white-space:pre;font-family:'Liberation Sans', sans-serif;">-No D...</div>
<div style="left:193px;top:88px;font-size:11px;line-height:13px;color:#000;white-space:pre;font-family:'Liberation Sans', sans-serif;">Pack...</div>
<div style="left:16px;top:111px;width:6px;height:1px;background:#c0c0c0;"></div>
<div style="left:6px;top:106px;width:11px;height:11px;background:linear-gradient(#ffffff,#d8dcf0);box-sizing:border-box;border:1px solid #9098b8;border-radius:2px;"></div>
<div style="left:9px;top:111px;width:5px;height:1px;background:#000;"></div>
<div style="left:11px;top:109px;width:1px;height:5px;background:#000;"></div>
<svg style="left:21px;top:103px;" width="15" height="15" viewBox="0 0 15 15"><path d="M0,7.5 L7.5,0 V4 L4,7.5Z" fill="#a4e6ff"/><path d="M7.5,0 L15,7.5 H11 L7.5,4Z" fill="#1a94d8"/><path d="M15,7.5 L7.5,15 V11 L11,7.5Z" fill="#0a6494"/><path d="M7.5,15 L0,7.5 H4 L7.5,11Z" fill="#1a8cd0"/><path d="M7.5,4 L11,7.5 L7.5,11 L4,7.5Z" fill="#10c4f6"/></svg>
<div style="left:40px;top:104px;font-size:11px;line-height:13px;color:#ffffff;white-space:pre;font-family:'Liberation Sans', sans-serif;">output_bytes_2d</div>
<div style="left:150px;top:104px;font-size:11px;line-height:13px;color:#ffffff;white-space:pre;font-family:'Liberation Sans', sans-serif;">-No D...</div>
<div style="left:193px;top:104px;font-size:11px;line-height:13px;color:#ffffff;white-space:pre;font-family:'Liberation Sans', sans-serif;">Fixe...</div>
<div style="left:16px;top:127px;width:6px;height:1px;background:#c0c0c0;"></div>
<div style="left:6px;top:122px;width:11px;height:11px;background:linear-gradient(#ffffff,#d8dcf0);box-sizing:border-box;border:1px solid #9098b8;border-radius:2px;"></div>
<div style="left:9px;top:127px;width:5px;height:1px;background:#000;"></div>
<div style="left:11px;top:125px;width:1px;height:5px;background:#000;"></div>
<svg style="left:21px;top:119px;" width="15" height="15" viewBox="0 0 15 15"><path d="M0,7.5 L7.5,0 V4 L4,7.5Z" fill="#a4e6ff"/><path d="M7.5,0 L15,7.5 H11 L7.5,4Z" fill="#1a94d8"/><path d="M15,7.5 L7.5,15 V11 L11,7.5Z" fill="#0a6494"/><path d="M7.5,15 L0,7.5 H4 L7.5,11Z" fill="#1a8cd0"/><path d="M7.5,4 L11,7.5 L7.5,11 L4,7.5Z" fill="#10c4f6"/></svg>
<div style="left:40px;top:120px;font-size:11px;line-height:13px;color:#ffffff;white-space:pre;font-family:'Liberation Sans', sans-serif;">output_bytes_1d</div>
<div style="left:150px;top:120px;font-size:11px;line-height:13px;color:#ffffff;white-space:pre;font-family:'Liberation Sans', sans-serif;">-No D...</div>
<div style="left:193px;top:120px;font-size:11px;line-height:13px;color:#ffffff;white-space:pre;font-family:'Liberation Sans', sans-serif;">Pack...</div>
<div style="left:16px;top:143px;width:6px;height:1px;background:#c0c0c0;"></div>
<div style="left:6px;top:138px;width:11px;height:11px;background:linear-gradient(#ffffff,#d8dcf0);box-sizing:border-box;border:1px solid #9098b8;border-radius:2px;"></div>
<div style="left:9px;top:143px;width:5px;height:1px;background:#000;"></div>
<div style="left:11px;top:141px;width:1px;height:5px;background:#000;"></div>
<svg style="left:21px;top:135px;" width="15" height="15" viewBox="0 0 15 15"><path d="M0,7.5 L7.5,0 V4 L4,7.5Z" fill="#a4e6ff"/><path d="M7.5,0 L15,7.5 H11 L7.5,4Z" fill="#1a94d8"/><path d="M15,7.5 L7.5,15 V11 L11,7.5Z" fill="#0a6494"/><path d="M7.5,15 L0,7.5 H4 L7.5,11Z" fill="#1a8cd0"/><path d="M7.5,4 L11,7.5 L7.5,11 L4,7.5Z" fill="#10c4f6"/></svg>
<div style="left:40px;top:136px;font-size:11px;line-height:13px;color:#ffffff;white-space:pre;font-family:'Liberation Sans', sans-serif;">a</div>
<div style="left:150px;top:136px;font-size:11px;line-height:13px;color:#ffffff;white-space:pre;font-family:'Liberation Sans', sans-serif;">-No D...</div>
<div style="left:193px;top:136px;font-size:11px;line-height:13px;color:#ffffff;white-space:pre;font-family:'Liberation Sans', sans-serif;">Pack...</div>
<div style="left:16px;top:159px;width:6px;height:1px;background:#c0c0c0;"></div>
<div style="left:6px;top:154px;width:11px;height:11px;background:linear-gradient(#ffffff,#d8dcf0);box-sizing:border-box;border:1px solid #9098b8;border-radius:2px;"></div>
<div style="left:9px;top:159px;width:5px;height:1px;background:#000;"></div>
<div style="left:11px;top:157px;width:1px;height:5px;background:#000;"></div>
<svg style="left:21px;top:151px;" width="15" height="15" viewBox="0 0 15 15"><path d="M0,7.5 L7.5,0 V4 L4,7.5Z" fill="#a4e6ff"/><path d="M7.5,0 L15,7.5 H11 L7.5,4Z" fill="#1a94d8"/><path d="M15,7.5 L7.5,15 V11 L11,7.5Z" fill="#0a6494"/><path d="M7.5,15 L0,7.5 H4 L7.5,11Z" fill="#1a8cd0"/><path d="M7.5,4 L11,7.5 L7.5,11 L4,7.5Z" fill="#10c4f6"/></svg>
<div style="left:40px;top:152px;font-size:11px;line-height:13px;color:#ffffff;white-space:pre;font-family:'Liberation Sans', sans-serif;">y</div>
<div style="left:150px;top:152px;font-size:11px;line-height:13px;color:#ffffff;white-space:pre;font-family:'Liberation Sans', sans-serif;">-No D...</div>
<div style="left:193px;top:152px;font-size:11px;line-height:13px;color:#ffffff;white-space:pre;font-family:'Liberation Sans', sans-serif;">Pack...</div>
</div>
<div style="left:381px;top:137px;width:15px;height:187px;background:#f0f0f0;background-image:repeating-conic-gradient(#f7f7f7 0 25%, #e6e6e6 0 50%);background-size:2px 2px;"></div>
<div style="left:381px;top:137px;width:15px;height:16px;background:#f0f0f0;box-sizing:border-box;border-style:solid;border-width:1px;border-color:#fff #a0a0a0 #a0a0a0 #fff;box-shadow:1px 1px 0 #696969;"></div>
<svg style="left:385px;top:143px;" width="8" height="5" viewBox="0 0 8 5" shape-rendering="crispEdges"><polygon points="3.5,0 7,4 0,4" fill="#000"/></svg>
<div style="left:381px;top:308px;width:15px;height:16px;background:#f0f0f0;box-sizing:border-box;border-style:solid;border-width:1px;border-color:#fff #a0a0a0 #a0a0a0 #fff;box-shadow:1px 1px 0 #696969;"></div>
<svg style="left:385px;top:314px;" width="8" height="5" viewBox="0 0 8 5" shape-rendering="crispEdges"><polygon points="0,0 7,0 3.5,4" fill="#000"/></svg>
<div style="left:381px;top:222px;width:15px;height:84px;background:#f0f0f0;box-sizing:border-box;border-style:solid;border-width:1px;border-color:#fff #a0a0a0 #a0a0a0 #fff;box-shadow:1px 1px 0 #696969;"></div>
<div style="left:152px;top:325px;width:229px;height:17px;background:#f0f0f0;background-image:repeating-conic-gradient(#f7f7f7 0 25%, #e6e6e6 0 50%);background-size:2px 2px;"></div>
<div style="left:152px;top:325px;width:16px;height:17px;background:#f0f0f0;box-sizing:border-box;border-style:solid;border-width:1px;border-color:#fff #a0a0a0 #a0a0a0 #fff;box-shadow:1px 1px 0 #696969;"></div>
<svg style="left:158px;top:329px;" width="5" height="8" viewBox="0 0 5 8" shape-rendering="crispEdges"><polygon points="4,0 4,7 0,3.5" fill="#000"/></svg>
<div style="left:365px;top:325px;width:16px;height:17px;background:#f0f0f0;box-sizing:border-box;border-style:solid;border-width:1px;border-color:#fff #a0a0a0 #a0a0a0 #fff;box-shadow:1px 1px 0 #696969;"></div>
<svg style="left:371px;top:329px;" width="5" height="8" viewBox="0 0 5 8" shape-rendering="crispEdges"><polygon points="0,0 4,3.5 0,7" fill="#000"/></svg>
<div style="left:168px;top:325px;width:155px;height:17px;background:#f0f0f0;box-sizing:border-box;border-style:solid;border-width:1px;border-color:#fff #a0a0a0 #a0a0a0 #fff;box-shadow:1px 1px 0 #696969;"></div>
<div style="left:381px;top:325px;width:15px;height:17px;background:#f0f0f0;"></div>
<div style="left:150px;top:351px;width:247px;height:228px;background:#f0f0f0;box-sizing:border-box;border:1px solid;border-color:#a0a0a0 #a0a0a0 #a0a0a0 #a0a0a0;box-shadow:inset 1px 1px 0 #fff;"></div>
<svg style="left:153px;top:354px;" width="16" height="16" viewBox="0 0 16 16"><circle cx="13.70" cy="7.50" r="1.9" fill="#34567c"/><circle cx="11.88" cy="11.88" r="1.9" fill="#34567c"/><circle cx="7.50" cy="13.70" r="1.9" fill="#34567c"/><circle cx="3.12" cy="11.88" r="1.9" fill="#34567c"/><circle cx="1.30" cy="7.50" r="1.9" fill="#34567c"/><circle cx="3.12" cy="3.12" r="1.9" fill="#34567c"/><circle cx="7.50" cy="1.30" r="1.9" fill="#34567c"/><circle cx="11.88" cy="3.12" r="1.9" fill="#34567c"/><circle cx="7.5" cy="7.5" r="5.4" fill="#3c6088"/><circle cx="6.5" cy="6.0" r="3.5" fill="#5a80a8" opacity="0.6"/><circle cx="7.5" cy="7.5" r="1.9" fill="#f4f4f4"/></svg>
<div style="left:172px;top:356px;font-size:11px;line-height:13px;color:#000;white-space:pre;font-family:'Liberation Sans', sans-serif;">Processes (Active)</div>
<div style="left:266px;top:360px;width:29px;height:1px;background:#808080;"></div>
<div style="left:266px;top:361px;width:29px;height:1px;background:#fff;"></div>
<div style="left:266px;top:365px;width:29px;height:1px;background:#808080;"></div>
<div style="left:266px;top:366px;width:29px;height:1px;background:#fff;"></div>
<div style="left:317px;top:360px;width:28px;height:1px;background:#808080;"></div>
<div style="left:317px;top:361px;width:28px;height:1px;background:#fff;"></div>
<div style="left:317px;top:365px;width:28px;height:1px;background:#808080;"></div>
<div style="left:317px;top:366px;width:28px;height:1px;background:#fff;"></div>
<svg style="left:298px;top:359px;" width="16" height="8" viewBox="0 0 16 8" shape-rendering="crispEdges"><rect x="0" y="0" width="1" height="1" fill="#333"/><rect x="1" y="3" width="1" height="1" fill="#333"/><rect x="0" y="6" width="1" height="1" fill="#333"/><rect x="3" y="0" width="1" height="1" fill="#333"/><rect x="4" y="3" width="1" height="1" fill="#333"/><rect x="3" y="6" width="1" height="1" fill="#333"/><rect x="6" y="0" width="1" height="1" fill="#333"/><rect x="7" y="3" width="1" height="1" fill="#333"/><rect x="6" y="6" width="1" height="1" fill="#333"/><rect x="9" y="0" width="1" height="1" fill="#333"/><rect x="10" y="3" width="1" height="1" fill="#333"/><rect x="9" y="6" width="1" height="1" fill="#333"/><rect x="12" y="0" width="1" height="1" fill="#333"/><rect x="13" y="3" width="1" height="1" fill="#333"/><rect x="12" y="6" width="1" height="1" fill="#333"/></svg>
<div style="left:343px;top:360px;width:1px;height:6px;background:#808080;"></div>
<div style="left:348px;top:355px;width:12px;height:14px;background:#f0f0f0;box-sizing:border-box;border:1px solid;border-color:#fff #a0a0a0 #a0a0a0 #fff;"></div>
<div style="left:364px;top:355px;width:13px;height:14px;background:#f0f0f0;box-sizing:border-box;border:1px solid;border-color:#fff #a0a0a0 #a0a0a0 #fff;"></div>
<div style="left:381px;top:355px;width:13px;height:14px;background:#f0f0f0;box-sizing:border-box;border:1px solid;border-color:#fff #a0a0a0 #a0a0a0 #fff;"></div>
<svg style="left:350px;top:357px;" width="9" height="9" viewBox="0 0 9 9" shape-rendering="crispEdges"><path d="M4,0 V9 M0,4 H9" stroke="#000" stroke-width="2"/></svg>
<svg style="left:367px;top:358px;" width="9" height="9" viewBox="0 0 9 9" shape-rendering="crispEdges"><rect x="0.5" y="4.5" width="4" height="4" fill="none" stroke="#000"/><path d="M3,6 L8,1 M5,1 H8 V4" stroke="#000" fill="none" stroke-width="1.2"/></svg>
<svg style="left:384px;top:358px;" width="9" height="9" viewBox="0 0 9 9"><path d="M0.5,0.5 L8.5,8.5 M8.5,0.5 L0.5,8.5" stroke="#000" stroke-width="1.5"/></svg>
<div style="left:151px;top:371px;width:227px;height:1px;background:#a0a0a0;"></div>
<div style="left:151px;top:372px;width:14px;height:17px;background:#f0f0f0;box-sizing:border-box;border-right:1px solid #a0a0a0;border-bottom:1px solid #a0a0a0;border-top:1px solid #fff;"></div>
<svg style="left:155px;top:377px;shape-rendering:auto" width="7" height="6" viewBox="0 0 7 6" shape-rendering="crispEdges"><path d="M0,0 H7 L3.5,6Z" fill="#555"/></svg>
<div style="left:165px;top:372px;width:134px;height:17px;background:#f0f0f0;box-sizing:border-box;border-right:1px solid #a0a0a0;border-bottom:1px solid #a0a0a0;border-top:1px solid #fff;"></div>
<div style="left:167px;top:375px;font-size:11px;line-height:13px;color:#000;white-space:pre;font-family:'Liberation Sans', sans-serif;">Name</div>
<div style="left:299px;top:372px;width:79px;height:17px;background:#f0f0f0;box-sizing:border-box;border-right:1px solid #a0a0a0;border-bottom:1px solid #a0a0a0;border-top:1px solid #fff;"></div>
<div style="left:301px;top:375px;font-size:11px;line-height:13px;color:#000;white-space:pre;font-family:'Liberation Sans', sans-serif;">Type (filtered)</div>
<div style="left:152px;top:389px;width:226px;height:170px;background:#88a0ff;"></div>
<div style="left:152px;top:390px;width:226px;height:17px;background:#c0ccd8;"></div>
<svg style="left:174px;top:392px;" width="13" height="13" viewBox="0 0 13 13"><circle cx="6.5" cy="6.5" r="6.5" fill="#1a88b0"/><path d="M0.3,6 A6.3,6.3 0 0 1 12.7,5.5 A7,7 0 0 0 5.5,12.8 A6.3,6.3 0 0 1 0.3,6Z" fill="#38bce8"/><ellipse cx="4.2" cy="3.8" rx="2" ry="1.5" fill="#e8fbff" transform="rotate(-35 4.2 3.8)"/></svg>
<div style="left:193px;top:393px;font-size:11px;line-height:13px;color:#000;white-space:pre;font-family:'Liberation Sans', sans-serif;">#INITIAL#59</div>
<div style="left:301px;top:393px;font-size:11px;line-height:13px;color:#000;white-space:pre;font-family:'Liberation Sans', sans-serif;">Initial</div>
<div style="left:380px;top:372px;width:15px;height:189px;background:#f0f0f0;background-image:repeating-conic-gradient(#f7f7f7 0 25%, #e6e6e6 0 50%);background-size:2px 2px;"></div>
<div style="left:380px;top:372px;width:15px;height:16px;background:#f0f0f0;box-sizing:border-box;border-style:solid;border-width:1px;border-color:#fff #a0a0a0 #a0a0a0 #fff;box-shadow:1px 1px 0 #696969;"></div>
<svg style="left:384px;top:378px;" width="8" height="5" viewBox="0 0 8 5" shape-rendering="crispEdges"><polygon points="3.5,0 7,4 0,4" fill="#a0a0a0"/></svg>
<div style="left:380px;top:545px;width:15px;height:16px;background:#f0f0f0;box-sizing:border-box;border-style:solid;border-width:1px;border-color:#fff #a0a0a0 #a0a0a0 #fff;box-shadow:1px 1px 0 #696969;"></div>
<svg style="left:384px;top:551px;" width="8" height="5" viewBox="0 0 8 5" shape-rendering="crispEdges"><polygon points="0,0 7,0 3.5,4" fill="#a0a0a0"/></svg>
<div style="left:152px;top:561px;width:226px;height:16px;background:#f0f0f0;background-image:repeating-conic-gradient(#f7f7f7 0 25%, #e6e6e6 0 50%);background-size:2px 2px;"></div>
<div style="left:152px;top:561px;width:16px;height:16px;background:#f0f0f0;box-sizing:border-box;border-style:solid;border-width:1px;border-color:#fff #a0a0a0 #a0a0a0 #fff;box-shadow:1px 1px 0 #696969;"></div>
<svg style="left:158px;top:565px;" width="5" height="8" viewBox="0 0 5 8" shape-rendering="crispEdges"><polygon points="4,0 4,7 0,3.5" fill="#000"/></svg>
<div style="left:362px;top:561px;width:16px;height:16px;background:#f0f0f0;box-sizing:border-box;border-style:solid;border-width:1px;border-color:#fff #a0a0a0 #a0a0a0 #fff;box-shadow:1px 1px 0 #696969;"></div>
<svg style="left:368px;top:565px;" width="5" height="8" viewBox="0 0 5 8" shape-rendering="crispEdges"><polygon points="0,0 4,3.5 0,7" fill="#000"/></svg>
<div style="left:168px;top:561px;width:72px;height:16px;background:#f0f0f0;box-sizing:border-box;border-style:solid;border-width:1px;border-color:#fff #a0a0a0 #a0a0a0 #fff;box-shadow:1px 1px 0 #696969;"></div>
<div style="left:404px;top:117px;width:1110px;height:437px;background:#f0f0f0;"></div>
<div style="left:404px;top:117px;width:1px;height:437px;background:#a0a0a0;"></div>
<div style="left:405px;top:118px;width:1109px;height:1px;background:#fff;"></div>
<div style="left:405px;top:119px;width:1109px;height:18px;background:#9ab4d4;"></div>
<div style="left:405px;top:137px;width:1109px;height:1px;background:#fff;"></div>
<svg style="left:408px;top:121px;" width="15" height="15" viewBox="0 0 15 15" shape-rendering="crispEdges"><rect x="0.5" y="0.5" width="14" height="14" fill="#fff" stroke="#000"/><rect x="1" y="4" width="13" height="10" fill="#000"/><path d="M2,8 H5 V6 H9 V10 H13" stroke="#20e020" fill="none"/><path d="M5,5 V13" stroke="#20e0e0"/><path d="M8,12 H13" stroke="#a020ff"/></svg>
<div style="left:426px;top:122px;font-size:11px;line-height:13px;color:#000;white-space:pre;font-family:'Liberation Sans', sans-serif;">Wave - Default</div>
<div style="left:505px;top:124px;width:492px;height:1px;background:#e0f8ff;"></div>
<div style="left:1018px;top:124px;width:490px;height:1px;background:#e0f8ff;"></div>
<div style="left:505px;top:125px;width:492px;height:1px;background:#000;"></div>
<div style="left:1018px;top:125px;width:490px;height:1px;background:#000;"></div>
<div style="left:505px;top:129px;width:492px;height:1px;background:#e0f8ff;"></div>
<div style="left:1018px;top:129px;width:490px;height:1px;background:#e0f8ff;"></div>
<div style="left:505px;top:130px;width:492px;height:1px;background:#000;"></div>
<div style="left:1018px;top:130px;width:490px;height:1px;background:#000;"></div>
<svg style="left:998px;top:124px;" width="18" height="7" viewBox="0 0 18 7" shape-rendering="crispEdges"><rect x="0" y="0" width="1" height="1" fill="#000"/><rect x="1" y="2" width="1" height="1" fill="#000"/><rect x="0" y="4" width="1" height="1" fill="#000"/><rect x="1" y="6" width="1" height="1" fill="#000"/><rect x="2" y="0" width="1" height="1" fill="#000"/><rect x="3" y="2" width="1" height="1" fill="#000"/><rect x="2" y="4" width="1" height="1" fill="#000"/><rect x="3" y="6" width="1" height="1" fill="#000"/><rect x="4" y="0" width="1" height="1" fill="#000"/><rect x="5" y="2" width="1" height="1" fill="#000"/><rect x="4" y="4" width="1" height="1" fill="#000"/><rect x="5" y="6" width="1" height="1" fill="#000"/><rect x="6" y="0" width="1" height="1" fill="#000"/><rect x="7" y="2" width="1" height="1" fill="#000"/><rect x="6" y="4" width="1" height="1" fill="#000"/><rect x="7" y="6" width="1" height="1" fill="#000"/><rect x="8" y="0" width="1" height="1" fill="#000"/><rect x="9" y="2" width="1" height="1" fill="#000"/><rect x="8" y="4" width="1" height="1" fill="#000"/><rect x="9" y="6" width="1" height="1" fill="#000"/><rect x="10" y="0" width="1" height="1" fill="#000"/><rect x="11" y="2" width="1" height="1" fill="#000"/><rect x="10" y="4" width="1" height="1" fill="#000"/><rect x="11" y="6" width="1" height="1" fill="#000"/><rect x="12" y="0" width="1" height="1" fill="#000"/><rect x="13" y="2" width="1" height="1" fill="#000"/><rect x="12" y="4" width="1" height="1" fill="#000"/><rect x="13" y="6" width="1" height="1" fill="#000"/><rect x="14" y="0" width="1" height="1" fill="#000"/><rect x="15" y="2" width="1" height="1" fill="#000"/><rect x="14" y="4" width="1" height="1" fill="#000"/><rect x="15" y="6" width="1" height="1" fill="#000"/><rect x="16" y="0" width="1" height="1" fill="#000"/><rect x="17" y="2" width="1" height="1" fill="#000"/><rect x="16" y="4" width="1" height="1" fill="#000"/><rect x="17" y="6" width="1" height="1" fill="#000"/></svg>
<div style="left:1507px;top:124px;width:1px;height:7px;background:#000;"></div>
<div style="left:1510px;top:120px;width:4px;height:16px;background:#f0f0f0;border-left:1px solid #fff;"></div>
<div style="left:407px;top:138px;width:160px;height:396px;background:#808080;"></div>
<div style="left:407px;top:138px;width:1px;height:396px;background:#f0f0f0;"></div>
<div style="left:408px;top:158px;width:158px;height:2px;background:#ffffff;"></div>
<div style="left:408px;top:160px;width:8px;height:328px;background:#ffffff;"></div>
<svg style="left:418px;top:140px;" width="17" height="16" viewBox="0 0 17 16"><path d="M3,6 L7,2 L10,4 L6,8Z" fill="#c030e0"/><rect x="8" y="7" width="7" height="7" fill="#20a040"/><path d="M5,7 L10,12 L5,16 L0,12Z" fill="#1050ff"/><circle cx="10" cy="7" r="3" fill="#20e0f0"/></svg>
<svg style="left:437px;top:149px;" width="6" height="4" viewBox="0 0 6 4" shape-rendering="crispEdges"><polygon points="0,0 5,0 2.5,3" fill="#000"/></svg>
<div style="left:566px;top:138px;width:3px;height:396px;background:#f0f0f0;"></div>
<div style="left:567px;top:138px;width:1px;height:396px;background:#ffffff;"></div>
<div style="left:569px;top:138px;width:100px;height:396px;background:#808080;"></div>
<div style="left:569px;top:158px;width:100px;height:2px;background:#ffffff;"></div>
<div style="left:263px;width:400px;text-align:right;top:143px;font-size:11px;line-height:13px;color:#ffffff;white-space:pre;font-family:'Liberation Sans', sans-serif;">Msgs</div>
<div style="left:669px;top:138px;width:3px;height:396px;background:#f0f0f0;"></div>
<div style="left:670px;top:138px;width:1px;height:396px;background:#ffffff;"></div>
<svg style="left:436px;top:163px;" width="15" height="15" viewBox="0 0 15 15"><path d="M0,7.5 L7.5,0 V4 L4,7.5Z" fill="#a4e6ff"/><path d="M7.5,0 L15,7.5 H11 L7.5,4Z" fill="#1a94d8"/><path d="M15,7.5 L7.5,15 V11 L11,7.5Z" fill="#0a6494"/><path d="M7.5,15 L0,7.5 H4 L7.5,11Z" fill="#1a8cd0"/><path d="M7.5,4 L11,7.5 L7.5,11 L4,7.5Z" fill="#10c4f6"/></svg>
<div style="left:456px;top:164px;font-size:11px;line-height:13px;color:#ffffff;white-space:pre;font-family:'Liberation Sans', sans-serif;">/testbench_aes_sb...</div>
<div style="left:571px;top:164px;font-size:11px;line-height:13px;color:#ffffff;white-space:pre;font-family:'Liberation Sans', sans-serif;">-No Data-</div>
<svg style="left:436px;top:180px;" width="15" height="15" viewBox="0 0 15 15"><path d="M0,7.5 L7.5,0 V4 L4,7.5Z" fill="#a4e6ff"/><path d="M7.5,0 L15,7.5 H11 L7.5,4Z" fill="#1a94d8"/><path d="M15,7.5 L7.5,15 V11 L11,7.5Z" fill="#0a6494"/><path d="M7.5,15 L0,7.5 H4 L7.5,11Z" fill="#1a8cd0"/><path d="M7.5,4 L11,7.5 L7.5,11 L4,7.5Z" fill="#10c4f6"/></svg>
<div style="left:456px;top:181px;font-size:11px;line-height:13px;color:#ffffff;white-space:pre;font-family:'Liberation Sans', sans-serif;">/testbench_aes_sb...</div>
<div style="left:571px;top:181px;font-size:11px;line-height:13px;color:#ffffff;white-space:pre;font-family:'Liberation Sans', sans-serif;">-No Data-</div>
<svg style="left:436px;top:197px;" width="15" height="15" viewBox="0 0 15 15"><path d="M0,7.5 L7.5,0 V4 L4,7.5Z" fill="#a4e6ff"/><path d="M7.5,0 L15,7.5 H11 L7.5,4Z" fill="#1a94d8"/><path d="M15,7.5 L7.5,15 V11 L11,7.5Z" fill="#0a6494"/><path d="M7.5,15 L0,7.5 H4 L7.5,11Z" fill="#1a8cd0"/><path d="M7.5,4 L11,7.5 L7.5,11 L4,7.5Z" fill="#10c4f6"/></svg>
<div style="left:456px;top:198px;font-size:11px;line-height:13px;color:#ffffff;white-space:pre;font-family:'Liberation Sans', sans-serif;">/testbench_aes_sb...</div>
<div style="left:571px;top:198px;font-size:11px;line-height:13px;color:#ffffff;white-space:pre;font-family:'Liberation Sans', sans-serif;">-No Data-</div>
<svg style="left:436px;top:214px;" width="15" height="15" viewBox="0 0 15 15"><path d="M0,7.5 L7.5,0 V4 L4,7.5Z" fill="#a4e6ff"/><path d="M7.5,0 L15,7.5 H11 L7.5,4Z" fill="#1a94d8"/><path d="M15,7.5 L7.5,15 V11 L11,7.5Z" fill="#0a6494"/><path d="M7.5,15 L0,7.5 H4 L7.5,11Z" fill="#1a8cd0"/><path d="M7.5,4 L11,7.5 L7.5,11 L4,7.5Z" fill="#10c4f6"/></svg>
<div style="left:456px;top:215px;font-size:11px;line-height:13px;color:#ffffff;white-space:pre;font-family:'Liberation Sans', sans-serif;">/testbench_aes_sb...</div>
<div style="left:571px;top:215px;font-size:11px;line-height:13px;color:#ffffff;white-space:pre;font-family:'Liberation Sans', sans-serif;">-No Data-</div>
<svg style="left:436px;top:231px;" width="15" height="15" viewBox="0 0 15 15"><path d="M0,7.5 L7.5,0 V4 L4,7.5Z" fill="#a4e6ff"/><path d="M7.5,0 L15,7.5 H11 L7.5,4Z" fill="#1a94d8"/><path d="M15,7.5 L7.5,15 V11 L11,7.5Z" fill="#0a6494"/><path d="M7.5,15 L0,7.5 H4 L7.5,11Z" fill="#1a8cd0"/><path d="M7.5,4 L11,7.5 L7.5,11 L4,7.5Z" fill="#10c4f6"/></svg>
<div style="left:456px;top:232px;font-size:11px;line-height:13px;color:#ffffff;white-space:pre;font-family:'Liberation Sans', sans-serif;">/testbench_aes_sb...</div>
<div style="left:571px;top:232px;font-size:11px;line-height:13px;color:#ffffff;white-space:pre;font-family:'Liberation Sans', sans-serif;">-No Data-</div>
<svg style="left:436px;top:248px;" width="15" height="15" viewBox="0 0 15 15"><path d="M0,7.5 L7.5,0 V4 L4,7.5Z" fill="#a4e6ff"/><path d="M7.5,0 L15,7.5 H11 L7.5,4Z" fill="#1a94d8"/><path d="M15,7.5 L7.5,15 V11 L11,7.5Z" fill="#0a6494"/><path d="M7.5,15 L0,7.5 H4 L7.5,11Z" fill="#1a8cd0"/><path d="M7.5,4 L11,7.5 L7.5,11 L4,7.5Z" fill="#10c4f6"/></svg>
<div style="left:456px;top:249px;font-size:11px;line-height:13px;color:#ffffff;white-space:pre;font-family:'Liberation Sans', sans-serif;">/testbench_aes_sb...</div>
<div style="left:571px;top:249px;font-size:11px;line-height:13px;color:#ffffff;white-space:pre;font-family:'Liberation Sans', sans-serif;">-No Data-</div>
<div style="left:431px;top:273px;width:6px;height:1px;background:#e0e0e0;"></div>
<div style="left:421px;top:269px;width:11px;height:11px;background:linear-gradient(#ffffff,#d8dcf0);box-sizing:border-box;border:1px solid #9098b8;border-radius:2px;"></div>
<div style="left:424px;top:274px;width:5px;height:1px;background:#000;"></div>
<div style="left:426px;top:272px;width:1px;height:5px;background:#000;"></div>
<svg style="left:436px;top:265px;" width="15" height="15" viewBox="0 0 15 15"><path d="M0,7.5 L7.5,0 V4 L4,7.5Z" fill="#a4e6ff"/><path d="M7.5,0 L15,7.5 H11 L7.5,4Z" fill="#1a94d8"/><path d="M15,7.5 L7.5,15 V11 L11,7.5Z" fill="#0a6494"/><path d="M7.5,15 L0,7.5 H4 L7.5,11Z" fill="#1a8cd0"/><path d="M7.5,4 L11,7.5 L7.5,11 L4,7.5Z" fill="#10c4f6"/></svg>
<div style="left:456px;top:266px;font-size:11px;line-height:13px;color:#ffffff;white-space:pre;font-family:'Liberation Sans', sans-serif;">/testbench_aes_sb...</div>
<div style="left:571px;top:266px;font-size:11px;line-height:13px;color:#ffffff;white-space:pre;font-family:'Liberation Sans', sans-serif;">-No Data-</div>
<div style="left:431px;top:290px;width:6px;height:1px;background:#e0e0e0;"></div>
<div style="left:421px;top:286px;width:11px;height:11px;background:linear-gradient(#ffffff,#d8dcf0);box-sizing:border-box;border:1px solid #9098b8;border-radius:2px;"></div>
<div style="left:424px;top:291px;width:5px;height:1px;background:#000;"></div>
<div style="left:426px;top:289px;width:1px;height:5px;background:#000;"></div>
<svg style="left:436px;top:282px;" width="15" height="15" viewBox="0 0 15 15"><path d="M0,7.5 L7.5,0 V4 L4,7.5Z" fill="#a4e6ff"/><path d="M7.5,0 L15,7.5 H11 L7.5,4Z" fill="#1a94d8"/><path d="M15,7.5 L7.5,15 V11 L11,7.5Z" fill="#0a6494"/><path d="M7.5,15 L0,7.5 H4 L7.5,11Z" fill="#1a8cd0"/><path d="M7.5,4 L11,7.5 L7.5,11 L4,7.5Z" fill="#10c4f6"/></svg>
<div style="left:456px;top:283px;font-size:11px;line-height:13px;color:#ffffff;white-space:pre;font-family:'Liberation Sans', sans-serif;">/testbench_aes_sb...</div>
<div style="left:571px;top:283px;font-size:11px;line-height:13px;color:#ffffff;white-space:pre;font-family:'Liberation Sans', sans-serif;">-No Data-</div>
<div style="left:431px;top:307px;width:6px;height:1px;background:#e0e0e0;"></div>
<div style="left:421px;top:303px;width:11px;height:11px;background:linear-gradient(#ffffff,#d8dcf0);box-sizing:border-box;border:1px solid #9098b8;border-radius:2px;"></div>
<div style="left:424px;top:308px;width:5px;height:1px;background:#000;"></div>
<div style="left:426px;top:306px;width:1px;height:5px;background:#000;"></div>
<svg style="left:436px;top:299px;" width="15" height="15" viewBox="0 0 15 15"><path d="M0,7.5 L7.5,0 V4 L4,7.5Z" fill="#a4e6ff"/><path d="M7.5,0 L15,7.5 H11 L7.5,4Z" fill="#1a94d8"/><path d="M15,7.5 L7.5,15 V11 L11,7.5Z" fill="#0a6494"/><path d="M7.5,15 L0,7.5 H4 L7.5,11Z" fill="#1a8cd0"/><path d="M7.5,4 L11,7.5 L7.5,11 L4,7.5Z" fill="#10c4f6"/></svg>
<div style="left:456px;top:300px;font-size:11px;line-height:13px;color:#ffffff;white-space:pre;font-family:'Liberation Sans', sans-serif;">/testbench_aes_sb...</div>
<div style="left:571px;top:300px;font-size:11px;line-height:13px;color:#ffffff;white-space:pre;font-family:'Liberation Sans', sans-serif;">-No Data-</div>
<div style="left:431px;top:324px;width:6px;height:1px;background:#e0e0e0;"></div>
<div style="left:421px;top:320px;width:11px;height:11px;background:linear-gradient(#ffffff,#d8dcf0);box-sizing:border-box;border:1px solid #9098b8;border-radius:2px;"></div>
<div style="left:424px;top:325px;width:5px;height:1px;background:#000;"></div>
<div style="left:426px;top:323px;width:1px;height:5px;background:#000;"></div>
<svg style="left:436px;top:316px;" width="15" height="15" viewBox="0 0 15 15"><path d="M0,7.5 L7.5,0 V4 L4,7.5Z" fill="#a4e6ff"/><path d="M7.5,0 L15,7.5 H11 L7.5,4Z" fill="#1a94d8"/><path d="M15,7.5 L7.5,15 V11 L11,7.5Z" fill="#0a6494"/><path d="M7.5,15 L0,7.5 H4 L7.5,11Z" fill="#1a8cd0"/><path d="M7.5,4 L11,7.5 L7.5,11 L4,7.5Z" fill="#10c4f6"/></svg>
<div style="left:456px;top:317px;font-size:11px;line-height:13px;color:#ffffff;white-space:pre;font-family:'Liberation Sans', sans-serif;">/testbench_aes_sb...</div>
<div style="left:571px;top:317px;font-size:11px;line-height:13px;color:#ffffff;white-space:pre;font-family:'Liberation Sans', sans-serif;">-No Data-</div>
<div style="left:431px;top:341px;width:6px;height:1px;background:#e0e0e0;"></div>
<div style="left:421px;top:337px;width:11px;height:11px;background:linear-gradient(#ffffff,#d8dcf0);box-sizing:border-box;border:1px solid #9098b8;border-radius:2px;"></div>
<div style="left:424px;top:342px;width:5px;height:1px;background:#000;"></div>
<div style="left:426px;top:340px;width:1px;height:5px;background:#000;"></div>
<svg style="left:436px;top:333px;" width="15" height="15" viewBox="0 0 15 15"><path d="M0,7.5 L7.5,0 V4 L4,7.5Z" fill="#a4e6ff"/><path d="M7.5,0 L15,7.5 H11 L7.5,4Z" fill="#1a94d8"/><path d="M15,7.5 L7.5,15 V11 L11,7.5Z" fill="#0a6494"/><path d="M7.5,15 L0,7.5 H4 L7.5,11Z" fill="#1a8cd0"/><path d="M7.5,4 L11,7.5 L7.5,11 L4,7.5Z" fill="#10c4f6"/></svg>
<div style="left:456px;top:334px;font-size:11px;line-height:13px;color:#ffffff;white-space:pre;font-family:'Liberation Sans', sans-serif;">/testbench_aes_sb...</div>
<div style="left:571px;top:334px;font-size:11px;line-height:13px;color:#ffffff;white-space:pre;font-family:'Liberation Sans', sans-serif;">-No Data-</div>
<svg style="left:436px;top:350px;" width="15" height="15" viewBox="0 0 15 15"><path d="M0,7.5 L7.5,0 V4 L4,7.5Z" fill="#a4e6ff"/><path d="M7.5,0 L15,7.5 H11 L7.5,4Z" fill="#1a94d8"/><path d="M15,7.5 L7.5,15 V11 L11,7.5Z" fill="#0a6494"/><path d="M7.5,15 L0,7.5 H4 L7.5,11Z" fill="#1a8cd0"/><path d="M7.5,4 L11,7.5 L7.5,11 L4,7.5Z" fill="#10c4f6"/></svg>
<div style="left:456px;top:351px;font-size:11px;line-height:13px;color:#ffffff;white-space:pre;font-family:'Liberation Sans', sans-serif;">/testbench_aes_sb...</div>
<div style="left:571px;top:351px;font-size:11px;line-height:13px;color:#ffffff;white-space:pre;font-family:'Liberation Sans', sans-serif;">-No Data-</div>
<div style="left:431px;top:375px;width:6px;height:1px;background:#e0e0e0;"></div>
<div style="left:421px;top:371px;width:11px;height:11px;background:linear-gradient(#ffffff,#d8dcf0);box-sizing:border-box;border:1px solid #9098b8;border-radius:2px;"></div>
<div style="left:424px;top:376px;width:5px;height:1px;background:#000;"></div>
<div style="left:426px;top:374px;width:1px;height:5px;background:#000;"></div>
<svg style="left:436px;top:367px;" width="15" height="15" viewBox="0 0 15 15"><path d="M0,7.5 L7.5,0 V4 L4,7.5Z" fill="#a4e6ff"/><path d="M7.5,0 L15,7.5 H11 L7.5,4Z" fill="#1a94d8"/><path d="M15,7.5 L7.5,15 V11 L11,7.5Z" fill="#0a6494"/><path d="M7.5,15 L0,7.5 H4 L7.5,11Z" fill="#1a8cd0"/><path d="M7.5,4 L11,7.5 L7.5,11 L4,7.5Z" fill="#10c4f6"/></svg>
<div style="left:456px;top:368px;font-size:11px;line-height:13px;color:#ffffff;white-space:pre;font-family:'Liberation Sans', sans-serif;">/testbench_aes_sb...</div>
<div style="left:571px;top:368px;font-size:11px;line-height:13px;color:#ffffff;white-space:pre;font-family:'Liberation Sans', sans-serif;">-No Data-</div>
<div style="left:416px;top:384px;width:150px;height:16px;background:#ffffff;"></div>
<div style="left:569px;top:384px;width:100px;height:16px;background:#ffffff;"></div>
<div style="left:431px;top:392px;width:6px;height:1px;background:#e0e0e0;"></div>
<div style="left:421px;top:388px;width:11px;height:11px;background:linear-gradient(#ffffff,#d8dcf0);box-sizing:border-box;border:1px solid #9098b8;border-radius:2px;"></div>
<div style="left:424px;top:393px;width:5px;height:1px;background:#000;"></div>
<div style="left:426px;top:391px;width:1px;height:5px;background:#000;"></div>
<svg style="left:436px;top:384px;" width="15" height="15" viewBox="0 0 15 15"><path d="M0,7.5 L7.5,0 V4 L4,7.5Z" fill="#a4e6ff"/><path d="M7.5,0 L15,7.5 H11 L7.5,4Z" fill="#1a94d8"/><path d="M15,7.5 L7.5,15 V11 L11,7.5Z" fill="#0a6494"/><path d="M7.5,15 L0,7.5 H4 L7.5,11Z" fill="#1a8cd0"/><path d="M7.5,4 L11,7.5 L7.5,11 L4,7.5Z" fill="#10c4f6"/></svg>
<div style="left:456px;top:385px;font-size:11px;line-height:13px;color:#000;white-space:pre;font-family:'Liberation Sans', sans-serif;">/testbench_aes_sb...</div>
<div style="left:571px;top:385px;font-size:11px;line-height:13px;color:#000;white-space:pre;font-family:'Liberation Sans', sans-serif;">-No Data-</div>
<div style="left:431px;top:409px;width:6px;height:1px;background:#e0e0e0;"></div>
<div style="left:421px;top:405px;width:11px;height:11px;background:linear-gradient(#ffffff,#d8dcf0);box-sizing:border-box;border:1px solid #9098b8;border-radius:2px;"></div>
<div style="left:424px;top:410px;width:5px;height:1px;background:#000;"></div>
<div style="left:426px;top:408px;width:1px;height:5px;background:#000;"></div>
<svg style="left:436px;top:401px;" width="15" height="15" viewBox="0 0 15 15"><path d="M0,7.5 L7.5,0 V4 L4,7.5Z" fill="#a4e6ff"/><path d="M7.5,0 L15,7.5 H11 L7.5,4Z" fill="#1a94d8"/><path d="M15,7.5 L7.5,15 V11 L11,7.5Z" fill="#0a6494"/><path d="M7.5,15 L0,7.5 H4 L7.5,11Z" fill="#1a8cd0"/><path d="M7.5,4 L11,7.5 L7.5,11 L4,7.5Z" fill="#10c4f6"/></svg>
<div style="left:456px;top:402px;font-size:11px;line-height:13px;color:#ffffff;white-space:pre;font-family:'Liberation Sans', sans-serif;">/testbench_aes_sb...</div>
<div style="left:571px;top:402px;font-size:11px;line-height:13px;color:#ffffff;white-space:pre;font-family:'Liberation Sans', sans-serif;">-No Data-</div>
<div style="left:431px;top:426px;width:6px;height:1px;background:#e0e0e0;"></div>
<div style="left:421px;top:422px;width:11px;height:11px;background:linear-gradient(#ffffff,#d8dcf0);box-sizing:border-box;border:1px solid #9098b8;border-radius:2px;"></div>
<div style="left:424px;top:427px;width:5px;height:1px;background:#000;"></div>
<div style="left:426px;top:425px;width:1px;height:5px;background:#000;"></div>
<svg style="left:436px;top:418px;" width="15" height="15" viewBox="0 0 15 15"><path d="M0,7.5 L7.5,0 V4 L4,7.5Z" fill="#a4e6ff"/><path d="M7.5,0 L15,7.5 H11 L7.5,4Z" fill="#1a94d8"/><path d="M15,7.5 L7.5,15 V11 L11,7.5Z" fill="#0a6494"/><path d="M7.5,15 L0,7.5 H4 L7.5,11Z" fill="#1a8cd0"/><path d="M7.5,4 L11,7.5 L7.5,11 L4,7.5Z" fill="#10c4f6"/></svg>
<div style="left:456px;top:419px;font-size:11px;line-height:13px;color:#ffffff;white-space:pre;font-family:'Liberation Sans', sans-serif;">/testbench_aes_sb...</div>
<div style="left:571px;top:419px;font-size:11px;line-height:13px;color:#ffffff;white-space:pre;font-family:'Liberation Sans', sans-serif;">-No Data-</div>
<div style="left:431px;top:443px;width:6px;height:1px;background:#e0e0e0;"></div>
<div style="left:421px;top:439px;width:11px;height:11px;background:linear-gradient(#ffffff,#d8dcf0);box-sizing:border-box;border:1px solid #9098b8;border-radius:2px;"></div>
<div style="left:424px;top:444px;width:5px;height:1px;background:#000;"></div>
<div style="left:426px;top:442px;width:1px;height:5px;background:#000;"></div>
<svg style="left:436px;top:435px;" width="15" height="15" viewBox="0 0 15 15"><path d="M0,7.5 L7.5,0 V4 L4,7.5Z" fill="#a4e6ff"/><path d="M7.5,0 L15,7.5 H11 L7.5,4Z" fill="#1a94d8"/><path d="M15,7.5 L7.5,15 V11 L11,7.5Z" fill="#0a6494"/><path d="M7.5,15 L0,7.5 H4 L7.5,11Z" fill="#1a8cd0"/><path d="M7.5,4 L11,7.5 L7.5,11 L4,7.5Z" fill="#10c4f6"/></svg>
<div style="left:456px;top:436px;font-size:11px;line-height:13px;color:#ffffff;white-space:pre;font-family:'Liberation Sans', sans-serif;">/testbench_aes_sb...</div>
<div style="left:571px;top:436px;font-size:11px;line-height:13px;color:#ffffff;white-space:pre;font-family:'Liberation Sans', sans-serif;">-No Data-</div>
<div style="left:431px;top:460px;width:6px;height:1px;background:#e0e0e0;"></div>
<div style="left:421px;top:456px;width:11px;height:11px;background:linear-gradient(#ffffff,#d8dcf0);box-sizing:border-box;border:1px solid #9098b8;border-radius:2px;"></div>
<div style="left:424px;top:461px;width:5px;height:1px;background:#000;"></div>
<div style="left:426px;top:459px;width:1px;height:5px;background:#000;"></div>
<svg style="left:436px;top:452px;" width="15" height="15" viewBox="0 0 15 15"><path d="M0,7.5 L7.5,0 V4 L4,7.5Z" fill="#a4e6ff"/><path d="M7.5,0 L15,7.5 H11 L7.5,4Z" fill="#1a94d8"/><path d="M15,7.5 L7.5,15 V11 L11,7.5Z" fill="#0a6494"/><path d="M7.5,15 L0,7.5 H4 L7.5,11Z" fill="#1a8cd0"/><path d="M7.5,4 L11,7.5 L7.5,11 L4,7.5Z" fill="#10c4f6"/></svg>
<div style="left:456px;top:453px;font-size:11px;line-height:13px;color:#ffffff;white-space:pre;font-family:'Liberation Sans', sans-serif;">/testbench_aes_sb...</div>
<div style="left:571px;top:453px;font-size:11px;line-height:13px;color:#ffffff;white-space:pre;font-family:'Liberation Sans', sans-serif;">-No Data-</div>
<div style="left:418px;top:468px;width:147px;height:1px;background:#000;"></div>
<svg style="left:417px;top:464px;" width="6" height="9" viewBox="0 0 6 9" shape-rendering="crispEdges"><path d="M0.5,0.5 L5,4.5 L0.5,8.5Z" fill="none" stroke="#000"/></svg>
<div style="left:571px;top:468px;width:94px;height:1px;background:#000;"></div>
<div style="left:408px;top:488px;width:158px;height:2px;background:#ffffff;"></div>
<div style="left:569px;top:488px;width:100px;height:2px;background:#ffffff;"></div>
<div style="left:408px;top:490px;width:158px;height:41px;background:#808080;"></div>
<div style="left:569px;top:490px;width:100px;height:41px;background:#808080;"></div>
<svg style="left:416px;top:496px;" width="36" height="13" viewBox="0 0 36 13"><path d="M0.5,8 L3,1.5 L5.5,8 M1.5,5.5 H4.5 M6,1.5 L8.5,8 L11,1.5" stroke="#b0b0b0" stroke-width="1.4" fill="none"/><path d="M1,10.5 H10" stroke="#4080e0" stroke-width="1.3"/><path d="M0,10.5 L2.5,8.5 V12.5Z M11,10.5 L8.5,8.5 V12.5Z" fill="#4080e0"/><rect x="12.5" y="1.5" width="11" height="10" fill="#c8d8f0" stroke="#6080c0"/><rect x="13" y="2" width="10" height="2" fill="#6090d8"/><path d="M14,6 H20 M14,8 H18" stroke="#6080c0"/><path d="M17,12 L22,7" stroke="#5080d0" stroke-width="2.5"/><circle cx="30.5" cy="6.5" r="5.5" fill="#58b858"/><circle cx="30.5" cy="6.5" r="4" fill="#80d880"/><path d="M28,6.5 H33 M30.5,4 V9" stroke="#fff" stroke-width="1.8"/></svg>
<div style="left:156px;width:400px;text-align:right;top:496px;font-size:11px;line-height:13px;color:#ffffff;white-space:pre;font-family:'Liberation Sans', sans-serif;">Now</div>
<div style="left:259px;width:400px;text-align:right;top:496px;font-size:11px;line-height:13px;color:#ffffff;white-space:pre;font-family:'Liberation Sans', sans-serif;">880 ns</div>
<div style="left:456px;top:512px;width:110px;height:18px;background:#ffffff;"></div>
<div style="left:569px;top:512px;width:100px;height:18px;background:#ffffff;"></div>
<svg style="left:419px;top:515px;" width="37" height="14" viewBox="0 0 37 14"><path d="M3,6 V4 A3.5,3.5 0 0 1 10,4 V6" stroke="#a0a0a0" fill="none" stroke-width="1.5"/><rect x="1" y="6" width="11" height="8" fill="#f0c040"/><rect x="1" y="6" width="11" height="2" fill="#f8e080"/><rect x="6" y="9" width="1" height="3" fill="#a07010"/><path d="M14,12.5 L21,5.5" stroke="#6090e0" stroke-width="2.6" stroke-linecap="round"/><path d="M20,6 Q19,2 22,1 L23,3 L24.5,3.5 L25.5,1.5 Q26.5,5 23,6.5Z" fill="#a0a8b0"/><circle cx="31.5" cy="6.5" r="5.5" fill="#e04848"/><circle cx="31.5" cy="6" r="4" fill="#f07070"/><path d="M29,6.5 H34" stroke="#fff" stroke-width="1.8"/></svg>
<div style="left:156px;width:400px;text-align:right;top:516px;font-size:11px;line-height:13px;color:#000;white-space:pre;font-family:'Liberation Sans', sans-serif;">Cursor 1</div>
<div style="left:259px;width:400px;text-align:right;top:516px;font-size:11px;line-height:13px;color:#000;white-space:pre;font-family:'Liberation Sans', sans-serif;">891 ns</div>
<div style="left:408px;top:530px;width:158px;height:1px;background:#a0a0a0;"></div>
<div style="left:408px;top:531px;width:158px;height:2px;background:#ffffff;"></div>
<div style="left:408px;top:533px;width:158px;height:19px;background:#808080;"></div>
<div style="left:569px;top:530px;width:100px;height:1px;background:#a0a0a0;"></div>
<div style="left:569px;top:531px;width:100px;height:2px;background:#ffffff;"></div>
<div style="left:569px;top:533px;width:100px;height:19px;background:#808080;"></div>
<div style="left:416px;top:534px;width:150px;height:17px;background:#f0f0f0;background-image:repeating-conic-gradient(#f7f7f7 0 25%, #e6e6e6 0 50%);background-size:2px 2px;"></div>
<div style="left:416px;top:534px;width:16px;height:17px;background:#f0f0f0;box-sizing:border-box;border-style:solid;border-width:1px;border-color:#fff #a0a0a0 #a0a0a0 #fff;box-shadow:1px 1px 0 #696969;"></div>
<svg style="left:422px;top:538px;" width="5" height="8" viewBox="0 0 5 8" shape-rendering="crispEdges"><polygon points="4,0 4,7 0,3.5" fill="#000"/></svg>
<div style="left:550px;top:534px;width:16px;height:17px;background:#f0f0f0;box-sizing:border-box;border-style:solid;border-width:1px;border-color:#fff #a0a0a0 #a0a0a0 #fff;box-shadow:1px 1px 0 #696969;"></div>
<svg style="left:556px;top:538px;" width="5" height="8" viewBox="0 0 5 8" shape-rendering="crispEdges"><polygon points="0,0 4,3.5 0,7" fill="#000"/></svg>
<div style="left:433px;top:534px;width:73px;height:17px;background:#f0f0f0;box-sizing:border-box;border-style:solid;border-width:1px;border-color:#fff #a0a0a0 #a0a0a0 #fff;box-shadow:1px 1px 0 #696969;"></div>
<div style="left:569px;top:534px;width:100px;height:17px;background:#f0f0f0;background-image:repeating-conic-gradient(#f7f7f7 0 25%, #e6e6e6 0 50%);background-size:2px 2px;"></div>
<div style="left:569px;top:534px;width:16px;height:17px;background:#f0f0f0;box-sizing:border-box;border-style:solid;border-width:1px;border-color:#fff #a0a0a0 #a0a0a0 #fff;box-shadow:1px 1px 0 #696969;"></div>
<svg style="left:575px;top:538px;" width="5" height="8" viewBox="0 0 5 8" shape-rendering="crispEdges"><polygon points="4,0 4,7 0,3.5" fill="#000"/></svg>
<div style="left:653px;top:534px;width:16px;height:17px;background:#f0f0f0;box-sizing:border-box;border-style:solid;border-width:1px;border-color:#fff #a0a0a0 #a0a0a0 #fff;box-shadow:1px 1px 0 #696969;"></div>
<svg style="left:659px;top:538px;" width="5" height="8" viewBox="0 0 5 8" shape-rendering="crispEdges"><polygon points="0,0 4,3.5 0,7" fill="#000"/></svg>
<div style="left:586px;top:534px;width:15px;height:17px;background:#f0f0f0;box-sizing:border-box;border-style:solid;border-width:1px;border-color:#fff #a0a0a0 #a0a0a0 #fff;box-shadow:1px 1px 0 #696969;"></div>
<div style="left:404px;top:552px;width:1110px;height:2px;background:#ffffff;"></div>
<div style="left:404px;top:554px;width:1110px;height:1px;background:#a0a0a0;"></div>
<div style="left:404px;top:555px;width:1110px;height:1px;background:#ffffff;"></div>
<div style="left:672px;top:138px;width:842px;height:396px;background:#000000;"></div>
<div style="left:672px;top:158px;width:842px;height:2px;background:#ffffff;"></div>
<div style="left:672px;top:488px;width:842px;height:2px;background:#ffffff;"></div>
<svg style="left:672px;top:160px;" width="842" height="328" viewBox="0 0 842 328" shape-rendering="crispEdges"><rect x="46" y="0" width="1" height="328" fill="#808080"/><rect x="89" y="0" width="1" height="328" fill="#808080"/><rect x="132" y="0" width="1" height="328" fill="#808080"/><rect x="175" y="0" width="1" height="328" fill="#808080"/><rect x="218" y="0" width="1" height="328" fill="#808080"/><rect x="261" y="0" width="1" height="328" fill="#808080"/><rect x="304" y="0" width="1" height="328" fill="#808080"/><rect x="347" y="0" width="1" height="328" fill="#808080"/><rect x="390" y="0" width="1" height="328" fill="#808080"/><rect x="433" y="0" width="1" height="328" fill="#808080"/><rect x="476" y="0" width="1" height="328" fill="#808080"/><rect x="519" y="0" width="1" height="328" fill="#808080"/><rect x="562" y="0" width="1" height="328" fill="#808080"/><rect x="605" y="0" width="1" height="328" fill="#808080"/><rect x="648" y="0" width="1" height="328" fill="#808080"/><rect x="691" y="0" width="1" height="328" fill="#808080"/><rect x="734" y="0" width="1" height="328" fill="#808080"/><rect x="777" y="0" width="1" height="328" fill="#808080"/><rect x="820" y="0" width="1" height="328" fill="#808080"/></svg>
<svg style="left:0px;top:0px;pointer-events:none;left:0;top:0" width="1514" height="860" viewBox="0 0 1514 860" shape-rendering="crispEdges"><path d="M675.5,171 V176.5 H718.5 V164.5 H761.5 V176.5 H804.5 V164.5 H847.5 V176.5 H890.5 V164.5 H933.5 V176.5 H976.5 V164.5 H1019.5 V176.5 H1062.5 V164.5 H1105.5 V176.5 H1148.5 V164.5 H1191.5 V176.5 H1234.5 V164.5 H1277.5 V176.5 H1320.5 V164.5 H1363.5 V176.5 H1406.5 V164.5 H1432" stroke="#33ff11" fill="none"/><path d="M676,187.5 H1432" stroke="#ff0000"/><path d="M676,204.5 H1432" stroke="#ff0000"/><path d="M676,221.5 H1432" stroke="#ff0000"/><path d="M676,238.5 H1432" stroke="#ff0000"/><path d="M676,255.5 H1432" stroke="#ff0000"/><path d="M676,306.5 H1432" stroke="#ff0000"/><path d="M676,340.5 H1432" stroke="#ff0000"/><path d="M676,357.5 H1432" stroke="#ff0000"/><path d="M676,425.5 H1432" stroke="#ff0000"/><rect x="676" y="266" width="1" height="3" fill="#a0e8a0"/><rect x="675" y="269" width="1" height="7" fill="#a0e8a0"/><rect x="676" y="276" width="1" height="3" fill="#a0e8a0"/><rect x="676" y="266" width="757" height="1" fill="#a0e8a0"/><rect x="676" y="278" width="757" height="1" fill="#a0e8a0"/><rect x="676" y="283" width="1" height="3" fill="#a0e8a0"/><rect x="675" y="286" width="1" height="7" fill="#a0e8a0"/><rect x="676" y="293" width="1" height="3" fill="#a0e8a0"/><rect x="676" y="283" width="757" height="1" fill="#a0e8a0"/><rect x="676" y="295" width="757" height="1" fill="#a0e8a0"/><rect x="676" y="317" width="1" height="3" fill="#a0e8a0"/><rect x="675" y="320" width="1" height="7" fill="#a0e8a0"/><rect x="676" y="327" width="1" height="3" fill="#a0e8a0"/><rect x="676" y="317" width="757" height="1" fill="#a0e8a0"/><rect x="676" y="329" width="757" height="1" fill="#a0e8a0"/><rect x="676" y="368" width="1" height="3" fill="#a0e8a0"/><rect x="675" y="371" width="1" height="7" fill="#a0e8a0"/><rect x="676" y="378" width="1" height="3" fill="#a0e8a0"/><rect x="676" y="368" width="757" height="1" fill="#a0e8a0"/><rect x="676" y="380" width="757" height="1" fill="#a0e8a0"/><rect x="676" y="385" width="1" height="3" fill="#a0e8a0"/><rect x="675" y="388" width="1" height="7" fill="#a0e8a0"/><rect x="676" y="395" width="1" height="3" fill="#a0e8a0"/><rect x="676" y="385" width="757" height="1" fill="#a0e8a0"/><rect x="676" y="397" width="757" height="1" fill="#a0e8a0"/><path d="M675,402.5 H1432 M675,414.5 H1432" stroke="#a0e8a0" fill="none"/><path d="M676,442.5 H864" stroke="#ff0000"/><rect x="865" y="436" width="1" height="3" fill="#a0e8a0"/><rect x="864" y="439" width="1" height="7" fill="#a0e8a0"/><rect x="865" y="446" width="1" height="3" fill="#a0e8a0"/><rect x="1052" y="436" width="1" height="3" fill="#a0e8a0"/><rect x="1053" y="439" width="1" height="7" fill="#a0e8a0"/><rect x="1052" y="446" width="1" height="3" fill="#a0e8a0"/><rect x="865" y="436" width="188" height="1" fill="#a0e8a0"/><rect x="865" y="448" width="188" height="1" fill="#a0e8a0"/><rect x="1054" y="436" width="1" height="3" fill="#a0e8a0"/><rect x="1053" y="439" width="1" height="7" fill="#a0e8a0"/><rect x="1054" y="446" width="1" height="3" fill="#a0e8a0"/><rect x="1242" y="436" width="1" height="3" fill="#a0e8a0"/><rect x="1243" y="439" width="1" height="7" fill="#a0e8a0"/><rect x="1242" y="446" width="1" height="3" fill="#a0e8a0"/><rect x="1054" y="436" width="189" height="1" fill="#a0e8a0"/><rect x="1054" y="448" width="189" height="1" fill="#a0e8a0"/><rect x="1244" y="436" width="1" height="3" fill="#a0e8a0"/><rect x="1243" y="439" width="1" height="7" fill="#a0e8a0"/><rect x="1244" y="446" width="1" height="3" fill="#a0e8a0"/><rect x="1244" y="436" width="189" height="1" fill="#a0e8a0"/><rect x="1244" y="448" width="189" height="1" fill="#a0e8a0"/><path d="M676,459.5 H890" stroke="#ff0000"/><rect x="891" y="453" width="1" height="3" fill="#a0e8a0"/><rect x="890" y="456" width="1" height="7" fill="#a0e8a0"/><rect x="891" y="463" width="1" height="3" fill="#a0e8a0"/><rect x="1061" y="453" width="1" height="3" fill="#a0e8a0"/><rect x="1062" y="456" width="1" height="7" fill="#a0e8a0"/><rect x="1061" y="463" width="1" height="3" fill="#a0e8a0"/><rect x="891" y="453" width="171" height="1" fill="#a0e8a0"/><rect x="891" y="465" width="171" height="1" fill="#a0e8a0"/><rect x="1063" y="453" width="1" height="3" fill="#a0e8a0"/><rect x="1062" y="456" width="1" height="7" fill="#a0e8a0"/><rect x="1063" y="463" width="1" height="3" fill="#a0e8a0"/><rect x="1319" y="453" width="1" height="3" fill="#a0e8a0"/><rect x="1320" y="456" width="1" height="7" fill="#a0e8a0"/><rect x="1319" y="463" width="1" height="3" fill="#a0e8a0"/><rect x="1063" y="453" width="257" height="1" fill="#a0e8a0"/><rect x="1063" y="465" width="257" height="1" fill="#a0e8a0"/><rect x="1321" y="453" width="1" height="3" fill="#a0e8a0"/><rect x="1320" y="456" width="1" height="7" fill="#a0e8a0"/><rect x="1321" y="463" width="1" height="3" fill="#a0e8a0"/><rect x="1321" y="453" width="112" height="1" fill="#a0e8a0"/><rect x="1321" y="465" width="112" height="1" fill="#a0e8a0"/></svg>
<div style="left:680px;top:267px;font-size:11px;line-height:13px;color:#ffffff;white-space:pre;font-family:'Liberation Sans', sans-serif;">2b7e151628aed2a6abf7158809cf4f3c</div>
<div style="left:680px;top:284px;font-size:11px;line-height:13px;color:#ffffff;white-space:pre;font-family:'Liberation Sans', sans-serif;">3243f6a8885a308d313198a2e0370734</div>
<div style="left:680px;top:318px;font-size:11px;line-height:13px;color:#ffffff;white-space:pre;font-family:'Liberation Sans', sans-serif;">3925841d02dc09fbdc118597196a0b32</div>
<div style="left:680px;top:369px;font-size:11px;line-height:13px;color:#ffffff;white-space:pre;font-family:'Liberation Sans', sans-serif;">09cf4f3c abf71588 28aed2a6 2b7e1516</div>
<div style="left:680px;top:386px;font-size:11px;line-height:13px;color:#ffffff;white-space:pre;font-family:'Liberation Sans', sans-serif;">2b7e151628aed2a6abf7158809cf4f3c</div>
<div style="left:679px;top:403px;font-size:11px;line-height:13px;color:#ffffff;white-space:pre;font-family:'Liberation Sans', sans-serif;letter-spacing:0.43px;">xxxxxxxx xxxxxxxx xxxxxxxx xxxxxxxx</div>
<div style="left:869px;top:437px;font-size:11px;line-height:13px;color:#ffffff;white-space:pre;font-family:'Liberation Sans', sans-serif;">7e</div>
<div style="left:1058px;top:437px;font-size:11px;line-height:13px;color:#ffffff;white-space:pre;font-family:'Liberation Sans', sans-serif;">15</div>
<div style="left:1248px;top:437px;font-size:11px;line-height:13px;color:#ffffff;white-space:pre;font-family:'Liberation Sans', sans-serif;">16</div>
<div style="left:895px;top:454px;font-size:11px;line-height:13px;color:#ffffff;white-space:pre;font-family:'Liberation Sans', sans-serif;">f3</div>
<div style="left:1067px;top:454px;font-size:11px;line-height:13px;color:#ffffff;white-space:pre;font-family:'Liberation Sans', sans-serif;">59</div>
<div style="left:1325px;top:454px;font-size:11px;line-height:13px;color:#ffffff;white-space:pre;font-family:'Liberation Sans', sans-serif;">47</div>
<svg style="left:0px;top:0px;left:0;top:0" width="1514" height="860" viewBox="0 0 1514 860" shape-rendering="crispEdges"><rect x="675" y="491" width="1" height="7" fill="#00e000"/><rect x="679" y="493" width="1" height="5" fill="#00e000"/><rect x="684" y="493" width="1" height="5" fill="#00e000"/><rect x="688" y="493" width="1" height="5" fill="#00e000"/><rect x="692" y="493" width="1" height="5" fill="#00e000"/><rect x="697" y="493" width="1" height="5" fill="#00e000"/><rect x="701" y="493" width="1" height="5" fill="#00e000"/><rect x="705" y="493" width="1" height="5" fill="#00e000"/><rect x="709" y="493" width="1" height="5" fill="#00e000"/><rect x="714" y="493" width="1" height="5" fill="#00e000"/><rect x="718" y="491" width="1" height="7" fill="#00e000"/><rect x="722" y="493" width="1" height="5" fill="#00e000"/><rect x="727" y="493" width="1" height="5" fill="#00e000"/><rect x="731" y="493" width="1" height="5" fill="#00e000"/><rect x="735" y="493" width="1" height="5" fill="#00e000"/><rect x="739" y="493" width="1" height="5" fill="#00e000"/><rect x="744" y="493" width="1" height="5" fill="#00e000"/><rect x="748" y="493" width="1" height="5" fill="#00e000"/><rect x="752" y="493" width="1" height="5" fill="#00e000"/><rect x="757" y="493" width="1" height="5" fill="#00e000"/><rect x="761" y="491" width="1" height="7" fill="#00e000"/><rect x="765" y="493" width="1" height="5" fill="#00e000"/><rect x="770" y="493" width="1" height="5" fill="#00e000"/><rect x="774" y="493" width="1" height="5" fill="#00e000"/><rect x="778" y="493" width="1" height="5" fill="#00e000"/><rect x="783" y="493" width="1" height="5" fill="#00e000"/><rect x="787" y="493" width="1" height="5" fill="#00e000"/><rect x="791" y="493" width="1" height="5" fill="#00e000"/><rect x="795" y="493" width="1" height="5" fill="#00e000"/><rect x="800" y="493" width="1" height="5" fill="#00e000"/><rect x="804" y="491" width="1" height="7" fill="#00e000"/><rect x="808" y="493" width="1" height="5" fill="#00e000"/><rect x="813" y="493" width="1" height="5" fill="#00e000"/><rect x="817" y="493" width="1" height="5" fill="#00e000"/><rect x="821" y="493" width="1" height="5" fill="#00e000"/><rect x="825" y="493" width="1" height="5" fill="#00e000"/><rect x="830" y="493" width="1" height="5" fill="#00e000"/><rect x="834" y="493" width="1" height="5" fill="#00e000"/><rect x="838" y="493" width="1" height="5" fill="#00e000"/><rect x="843" y="493" width="1" height="5" fill="#00e000"/><rect x="847" y="491" width="1" height="7" fill="#00e000"/><rect x="851" y="493" width="1" height="5" fill="#00e000"/><rect x="856" y="493" width="1" height="5" fill="#00e000"/><rect x="860" y="493" width="1" height="5" fill="#00e000"/><rect x="864" y="493" width="1" height="5" fill="#00e000"/><rect x="869" y="493" width="1" height="5" fill="#00e000"/><rect x="873" y="493" width="1" height="5" fill="#00e000"/><rect x="877" y="493" width="1" height="5" fill="#00e000"/><rect x="881" y="493" width="1" height="5" fill="#00e000"/><rect x="886" y="493" width="1" height="5" fill="#00e000"/><rect x="890" y="491" width="1" height="7" fill="#00e000"/><rect x="894" y="493" width="1" height="5" fill="#00e000"/><rect x="899" y="493" width="1" height="5" fill="#00e000"/><rect x="903" y="493" width="1" height="5" fill="#00e000"/><rect x="907" y="493" width="1" height="5" fill="#00e000"/><rect x="911" y="493" width="1" height="5" fill="#00e000"/><rect x="916" y="493" width="1" height="5" fill="#00e000"/><rect x="920" y="493" width="1" height="5" fill="#00e000"/><rect x="924" y="493" width="1" height="5" fill="#00e000"/><rect x="929" y="493" width="1" height="5" fill="#00e000"/><rect x="933" y="491" width="1" height="7" fill="#00e000"/><rect x="937" y="493" width="1" height="5" fill="#00e000"/><rect x="942" y="493" width="1" height="5" fill="#00e000"/><rect x="946" y="493" width="1" height="5" fill="#00e000"/><rect x="950" y="493" width="1" height="5" fill="#00e000"/><rect x="955" y="493" width="1" height="5" fill="#00e000"/><rect x="959" y="493" width="1" height="5" fill="#00e000"/><rect x="963" y="493" width="1" height="5" fill="#00e000"/><rect x="967" y="493" width="1" height="5" fill="#00e000"/><rect x="972" y="493" width="1" height="5" fill="#00e000"/><rect x="976" y="491" width="1" height="7" fill="#00e000"/><rect x="980" y="493" width="1" height="5" fill="#00e000"/><rect x="985" y="493" width="1" height="5" fill="#00e000"/><rect x="989" y="493" width="1" height="5" fill="#00e000"/><rect x="993" y="493" width="1" height="5" fill="#00e000"/><rect x="997" y="493" width="1" height="5" fill="#00e000"/><rect x="1002" y="493" width="1" height="5" fill="#00e000"/><rect x="1006" y="493" width="1" height="5" fill="#00e000"/><rect x="1010" y="493" width="1" height="5" fill="#00e000"/><rect x="1015" y="493" width="1" height="5" fill="#00e000"/><rect x="1019" y="491" width="1" height="7" fill="#00e000"/><rect x="1023" y="493" width="1" height="5" fill="#00e000"/><rect x="1028" y="493" width="1" height="5" fill="#00e000"/><rect x="1032" y="493" width="1" height="5" fill="#00e000"/><rect x="1036" y="493" width="1" height="5" fill="#00e000"/><rect x="1041" y="493" width="1" height="5" fill="#00e000"/><rect x="1045" y="493" width="1" height="5" fill="#00e000"/><rect x="1049" y="493" width="1" height="5" fill="#00e000"/><rect x="1053" y="493" width="1" height="5" fill="#00e000"/><rect x="1058" y="493" width="1" height="5" fill="#00e000"/><rect x="1062" y="491" width="1" height="7" fill="#00e000"/><rect x="1066" y="493" width="1" height="5" fill="#00e000"/><rect x="1071" y="493" width="1" height="5" fill="#00e000"/><rect x="1075" y="493" width="1" height="5" fill="#00e000"/><rect x="1079" y="493" width="1" height="5" fill="#00e000"/><rect x="1083" y="493" width="1" height="5" fill="#00e000"/><rect x="1088" y="493" width="1" height="5" fill="#00e000"/><rect x="1092" y="493" width="1" height="5" fill="#00e000"/><rect x="1096" y="493" width="1" height="5" fill="#00e000"/><rect x="1101" y="493" width="1" height="5" fill="#00e000"/><rect x="1105" y="491" width="1" height="7" fill="#00e000"/><rect x="1109" y="493" width="1" height="5" fill="#00e000"/><rect x="1114" y="493" width="1" height="5" fill="#00e000"/><rect x="1118" y="493" width="1" height="5" fill="#00e000"/><rect x="1122" y="493" width="1" height="5" fill="#00e000"/><rect x="1127" y="493" width="1" height="5" fill="#00e000"/><rect x="1131" y="493" width="1" height="5" fill="#00e000"/><rect x="1135" y="493" width="1" height="5" fill="#00e000"/><rect x="1139" y="493" width="1" height="5" fill="#00e000"/><rect x="1144" y="493" width="1" height="5" fill="#00e000"/><rect x="1148" y="491" width="1" height="7" fill="#00e000"/><rect x="1152" y="493" width="1" height="5" fill="#00e000"/><rect x="1157" y="493" width="1" height="5" fill="#00e000"/><rect x="1161" y="493" width="1" height="5" fill="#00e000"/><rect x="1165" y="493" width="1" height="5" fill="#00e000"/><rect x="1169" y="493" width="1" height="5" fill="#00e000"/><rect x="1174" y="493" width="1" height="5" fill="#00e000"/><rect x="1178" y="493" width="1" height="5" fill="#00e000"/><rect x="1182" y="493" width="1" height="5" fill="#00e000"/><rect x="1187" y="493" width="1" height="5" fill="#00e000"/><rect x="1191" y="491" width="1" height="7" fill="#00e000"/><rect x="1195" y="493" width="1" height="5" fill="#00e000"/><rect x="1200" y="493" width="1" height="5" fill="#00e000"/><rect x="1204" y="493" width="1" height="5" fill="#00e000"/><rect x="1208" y="493" width="1" height="5" fill="#00e000"/><rect x="1213" y="493" width="1" height="5" fill="#00e000"/><rect x="1217" y="493" width="1" height="5" fill="#00e000"/><rect x="1221" y="493" width="1" height="5" fill="#00e000"/><rect x="1225" y="493" width="1" height="5" fill="#00e000"/><rect x="1230" y="493" width="1" height="5" fill="#00e000"/><rect x="1234" y="491" width="1" height="7" fill="#00e000"/><rect x="1238" y="493" width="1" height="5" fill="#00e000"/><rect x="1243" y="493" width="1" height="5" fill="#00e000"/><rect x="1247" y="493" width="1" height="5" fill="#00e000"/><rect x="1251" y="493" width="1" height="5" fill="#00e000"/><rect x="1255" y="493" width="1" height="5" fill="#00e000"/><rect x="1260" y="493" width="1" height="5" fill="#00e000"/><rect x="1264" y="493" width="1" height="5" fill="#00e000"/><rect x="1268" y="493" width="1" height="5" fill="#00e000"/><rect x="1273" y="493" width="1" height="5" fill="#00e000"/><rect x="1277" y="491" width="1" height="7" fill="#00e000"/><rect x="1281" y="493" width="1" height="5" fill="#00e000"/><rect x="1286" y="493" width="1" height="5" fill="#00e000"/><rect x="1290" y="493" width="1" height="5" fill="#00e000"/><rect x="1294" y="493" width="1" height="5" fill="#00e000"/><rect x="1299" y="493" width="1" height="5" fill="#00e000"/><rect x="1303" y="493" width="1" height="5" fill="#00e000"/><rect x="1307" y="493" width="1" height="5" fill="#00e000"/><rect x="1311" y="493" width="1" height="5" fill="#00e000"/><rect x="1316" y="493" width="1" height="5" fill="#00e000"/><rect x="1320" y="491" width="1" height="7" fill="#00e000"/><rect x="1324" y="493" width="1" height="5" fill="#00e000"/><rect x="1329" y="493" width="1" height="5" fill="#00e000"/><rect x="1333" y="493" width="1" height="5" fill="#00e000"/><rect x="1337" y="493" width="1" height="5" fill="#00e000"/><rect x="1341" y="493" width="1" height="5" fill="#00e000"/><rect x="1346" y="493" width="1" height="5" fill="#00e000"/><rect x="1350" y="493" width="1" height="5" fill="#00e000"/><rect x="1354" y="493" width="1" height="5" fill="#00e000"/><rect x="1359" y="493" width="1" height="5" fill="#00e000"/><rect x="1363" y="491" width="1" height="7" fill="#00e000"/><rect x="1367" y="493" width="1" height="5" fill="#00e000"/><rect x="1372" y="493" width="1" height="5" fill="#00e000"/><rect x="1376" y="493" width="1" height="5" fill="#00e000"/><rect x="1380" y="493" width="1" height="5" fill="#00e000"/><rect x="1385" y="493" width="1" height="5" fill="#00e000"/><rect x="1389" y="493" width="1" height="5" fill="#00e000"/><rect x="1393" y="493" width="1" height="5" fill="#00e000"/><rect x="1397" y="493" width="1" height="5" fill="#00e000"/><rect x="1402" y="493" width="1" height="5" fill="#00e000"/><rect x="1406" y="491" width="1" height="7" fill="#00e000"/><rect x="1410" y="493" width="1" height="5" fill="#00e000"/><rect x="1415" y="493" width="1" height="5" fill="#00e000"/><rect x="1419" y="493" width="1" height="5" fill="#00e000"/><rect x="1423" y="493" width="1" height="5" fill="#00e000"/><rect x="1427" y="493" width="1" height="5" fill="#00e000"/><rect x="1432" y="493" width="1" height="5" fill="#00e000"/><rect x="1436" y="493" width="1" height="5" fill="#00e000"/><rect x="1440" y="493" width="1" height="5" fill="#00e000"/><rect x="1445" y="493" width="1" height="5" fill="#00e000"/><rect x="1449" y="491" width="1" height="7" fill="#00e000"/><rect x="1453" y="493" width="1" height="5" fill="#00e000"/><rect x="1458" y="493" width="1" height="5" fill="#00e000"/><rect x="1462" y="493" width="1" height="5" fill="#00e000"/><rect x="1466" y="493" width="1" height="5" fill="#00e000"/><rect x="1471" y="493" width="1" height="5" fill="#00e000"/><rect x="1475" y="493" width="1" height="5" fill="#00e000"/><rect x="1479" y="493" width="1" height="5" fill="#00e000"/><rect x="1483" y="493" width="1" height="5" fill="#00e000"/><rect x="1488" y="493" width="1" height="5" fill="#00e000"/><rect x="1492" y="491" width="1" height="7" fill="#00e000"/><rect x="1496" y="493" width="1" height="5" fill="#00e000"/><rect x="1501" y="493" width="1" height="5" fill="#00e000"/><rect x="1505" y="493" width="1" height="5" fill="#00e000"/><rect x="1509" y="493" width="1" height="5" fill="#00e000"/></svg>
<div style="left:675px;top:490px;width:839px;height:24px;overflow:hidden">
<div style="left:-40px;width:80px;text-align:center;top:11px;font-size:11px;line-height:13px;color:#20e020">0 ns</div>
<div style="left:46px;width:80px;text-align:center;top:11px;font-size:11px;line-height:13px;color:#20e020">100 ns</div>
<div style="left:132px;width:80px;text-align:center;top:11px;font-size:11px;line-height:13px;color:#20e020">200 ns</div>
<div style="left:218px;width:80px;text-align:center;top:11px;font-size:11px;line-height:13px;color:#20e020">300 ns</div>
<div style="left:304px;width:80px;text-align:center;top:11px;font-size:11px;line-height:13px;color:#20e020">400 ns</div>
<div style="left:390px;width:80px;text-align:center;top:11px;font-size:11px;line-height:13px;color:#20e020">500 ns</div>
<div style="left:476px;width:80px;text-align:center;top:11px;font-size:11px;line-height:13px;color:#20e020">600 ns</div>
<div style="left:562px;width:80px;text-align:center;top:11px;font-size:11px;line-height:13px;color:#20e020">700 ns</div>
<div style="left:648px;width:80px;text-align:center;top:11px;font-size:11px;line-height:13px;color:#20e020">800 ns</div>
<div style="left:734px;width:80px;text-align:center;top:11px;font-size:11px;line-height:13px;color:#20e020">900 ns</div>
</div>
<div style="left:675px;top:513px;width:839px;height:1px;background:#808080;"></div>
<div style="left:1441px;top:139px;width:3px;height:375px;background:#ffcc00;"></div>
<div style="left:1424px;top:514px;width:37px;height:16px;background:#000;box-sizing:border-box;border:1px solid #e0b000;"></div>
<div style="left:1426px;top:517px;font-size:11px;line-height:13px;color:#ffd700;white-space:pre;font-family:'Liberation Sans', sans-serif;">891 ns</div>
<div style="left:672px;top:530px;width:842px;height:3px;background:#ffffff;"></div>
<div style="left:672px;top:533px;width:842px;height:2px;background:#808080;"></div>
<div style="left:672px;top:535px;width:842px;height:15px;background:#f0f0f0;"></div>
<div style="left:673px;top:535px;width:16px;height:15px;background:#f0f0f0;box-sizing:border-box;border-style:solid;border-width:1px;border-color:#fff #a0a0a0 #a0a0a0 #fff;box-shadow:1px 1px 0 #696969;"></div>
<svg style="left:679px;top:539px;" width="5" height="8" viewBox="0 0 5 8" shape-rendering="crispEdges"><polygon points="4,0 4,7 0,3.5" fill="#000"/></svg>
<div style="left:689px;top:535px;width:830px;height:15px;background:#f0f0f0;box-sizing:border-box;border-style:solid;border-width:1px;border-color:#fff #a0a0a0 #a0a0a0 #fff;box-shadow:1px 1px 0 #696969;"></div>
<div style="left:672px;top:550px;width:842px;height:2px;background:#808080;"></div>
<div style="left:1432px;top:536px;width:1px;height:12px;background:#ffcc00;"></div>
<div style="left:1427px;top:472px;width:87px;height:34px;background:#ffffe8;"></div>
<div style="left:1429px;top:477px;font-family:'Liberation Mono', monospace;font-size:12px;line-height:14px;color:#000;white-space:pre">sim:/testbench
8'h47</div>
<div style="left:404px;top:556px;width:1110px;height:22px;background:#f0f0f0;"></div>
<div style="left:404px;top:557px;width:1110px;height:1px;background:#000;"></div>
<div style="left:405px;top:557px;width:87px;height:21px;background:#d4d4d4;box-sizing:border-box;border:1px solid #000;border-radius:0 0 4px 4px;"></div>
<svg style="left:410px;top:558px;" width="15" height="15" viewBox="0 0 15 15" shape-rendering="crispEdges"><rect x="0.5" y="0.5" width="14" height="14" fill="#1050a0" stroke="#000"/><path d="M3,3 H7 V7 H3Z M8,8 H12 V12 H8Z" stroke="#20e0f0" fill="none"/><path d="M7,5 H10 V8" stroke="#f0e020"/></svg>
<div style="left:429px;top:560px;font-size:11px;line-height:13px;color:#000;white-space:pre;font-family:'Liberation Sans', sans-serif;">Dataflow</div>
<div style="left:492px;top:557px;width:71px;height:21px;background:#f0f0f0;box-sizing:border-box;border:1px solid #000;border-top:none;border-radius:0 0 4px 4px;"></div>
<svg style="left:497px;top:558px;" width="15" height="15" viewBox="0 0 15 15" shape-rendering="crispEdges"><rect x="0.5" y="0.5" width="14" height="14" fill="#fff" stroke="#000"/><rect x="1" y="4" width="13" height="10" fill="#000"/><path d="M2,8 H5 V6 H9 V10 H13" stroke="#20e020" fill="none"/><path d="M5,5 V13" stroke="#20e0e0"/><path d="M8,12 H13" stroke="#a020ff"/></svg>
<div style="left:516px;top:560px;font-size:11px;line-height:13px;color:#000;white-space:pre;font-family:'Liberation Sans', sans-serif;">Wave</div>
<div style="left:564px;top:557px;width:121px;height:21px;background:#d4d4d4;box-sizing:border-box;border:1px solid #000;border-radius:0 0 4px 4px;"></div>
<svg style="left:570px;top:557px;" width="12" height="16" viewBox="0 0 12 16" shape-rendering="crispEdges"><path d="M0.5,0.5 H8 L11.5,4 V15.5 H0.5Z" fill="#fff" stroke="#404040"/></svg>
<div style="left:588px;top:560px;font-size:11px;line-height:13px;color:#000;white-space:pre;font-family:'Liberation Sans', sans-serif;">aes_sbox_tb.sv</div>
<svg style="left:479px;top:562px;shape-rendering:auto" width="7" height="7" viewBox="0 0 7 7" shape-rendering="crispEdges"><path d="M0.5,0.5 L6.5,6.5 M6.5,0.5 L0.5,6.5" stroke="#b0b0b0" stroke-width="1.6"/></svg>
<svg style="left:550px;top:562px;shape-rendering:auto" width="7" height="7" viewBox="0 0 7 7" shape-rendering="crispEdges"><path d="M0.5,0.5 L6.5,6.5 M6.5,0.5 L0.5,6.5" stroke="#b0b0b0" stroke-width="1.6"/></svg>
<svg style="left:671px;top:562px;shape-rendering:auto" width="7" height="7" viewBox="0 0 7 7" shape-rendering="crispEdges"><path d="M0.5,0.5 L6.5,6.5 M6.5,0.5 L0.5,6.5" stroke="#b0b0b0" stroke-width="1.6"/></svg>
<div style="left:0px;top:578px;width:1514px;height:1px;background:#f0f0f0;"></div>
<div style="left:0px;top:579px;width:1514px;height:7px;background:#c8c8c8;"></div>
<div style="left:0px;top:586px;width:1514px;height:1px;background:#ffffff;"></div>
<div style="left:0px;top:587px;width:1514px;height:18px;background:#f0f0f0;"></div>
<svg style="left:-4px;top:590px;" width="8" height="13" viewBox="0 0 8 13" shape-rendering="crispEdges"><rect x="0" y="0" width="7" height="13" fill="#404040"/><rect x="1" y="2" width="5" height="9" fill="#a0a0a0"/></svg>
<div style="left:7px;top:590px;font-size:11px;line-height:13px;color:#000;white-space:pre;font-family:'Liberation Sans', sans-serif;">Transcript</div>
<div style="left:61px;top:593px;width:712px;height:1px;background:#808080;"></div>
<div style="left:61px;top:594px;width:712px;height:1px;background:#fff;"></div>
<div style="left:61px;top:598px;width:712px;height:1px;background:#808080;"></div>
<div style="left:61px;top:599px;width:712px;height:1px;background:#fff;"></div>
<div style="left:797px;top:593px;width:712px;height:1px;background:#808080;"></div>
<div style="left:797px;top:594px;width:712px;height:1px;background:#fff;"></div>
<div style="left:797px;top:598px;width:712px;height:1px;background:#808080;"></div>
<div style="left:797px;top:599px;width:712px;height:1px;background:#fff;"></div>
<svg style="left:776px;top:592px;" width="18" height="8" viewBox="0 0 18 8" shape-rendering="crispEdges"><rect x="0" y="0" width="1" height="1" fill="#333"/><rect x="1" y="3" width="1" height="1" fill="#333"/><rect x="0" y="6" width="1" height="1" fill="#333"/><rect x="3" y="0" width="1" height="1" fill="#333"/><rect x="4" y="3" width="1" height="1" fill="#333"/><rect x="3" y="6" width="1" height="1" fill="#333"/><rect x="6" y="0" width="1" height="1" fill="#333"/><rect x="7" y="3" width="1" height="1" fill="#333"/><rect x="6" y="6" width="1" height="1" fill="#333"/><rect x="9" y="0" width="1" height="1" fill="#333"/><rect x="10" y="3" width="1" height="1" fill="#333"/><rect x="9" y="6" width="1" height="1" fill="#333"/><rect x="12" y="0" width="1" height="1" fill="#333"/><rect x="13" y="3" width="1" height="1" fill="#333"/><rect x="12" y="6" width="1" height="1" fill="#333"/><rect x="15" y="0" width="1" height="1" fill="#333"/><rect x="16" y="3" width="1" height="1" fill="#333"/><rect x="15" y="6" width="1" height="1" fill="#333"/></svg>
<div style="left:1507px;top:593px;width:1px;height:6px;background:#808080;"></div>
<div style="left:0px;top:605px;width:1514px;height:1px;background:#404040;"></div>
<div style="left:0px;top:606px;width:1514px;height:250px;background:#ffffff;"></div>
<div style="left:0px;top:856px;width:1514px;height:1px;background:#a0a0a0;"></div>
<div style="left:0px;top:857px;width:1514px;height:3px;background:#f0f0f0;"></div>
<div style="left:0;top:606px;width:1514px;height:250px;overflow:hidden">
<div style="left:-7px;top:-6px;font-family:'Liberation Mono', monospace;font-size:12px;letter-spacing:-0.2px;line-height:15px;color:#000;white-space:pre">sim:/testbench_aes_sbox/plaintext \</div>
<div style="left:-7px;top:9px;font-family:'Liberation Mono', monospace;font-size:12px;letter-spacing:-0.2px;line-height:15px;color:#000;white-space:pre">sim:/testbench_aes_sbox/cyphertext \</div>
<div style="left:-7px;top:24px;font-family:'Liberation Mono', monospace;font-size:12px;letter-spacing:-0.2px;line-height:15px;color:#000;white-space:pre">sim:/testbench_aes_sbox/expected \</div>
<div style="left:-7px;top:39px;font-family:'Liberation Mono', monospace;font-size:12px;letter-spacing:-0.2px;line-height:15px;color:#000;white-space:pre">sim:/testbench_aes_sbox/comb \</div>
<div style="left:-7px;top:54px;font-family:'Liberation Mono', monospace;font-size:12px;letter-spacing:-0.2px;line-height:15px;color:#000;white-space:pre">sim:/testbench_aes_sbox/delay \</div>
<div style="left:-7px;top:69px;font-family:'Liberation Mono', monospace;font-size:12px;letter-spacing:-0.2px;line-height:15px;color:#000;white-space:pre">sim:/testbench_aes_sbox/input_bytes_2d \</div>
<div style="left:-7px;top:84px;font-family:'Liberation Mono', monospace;font-size:12px;letter-spacing:-0.2px;line-height:15px;color:#000;white-space:pre">sim:/testbench_aes_sbox/input_bytes_1d \</div>
<div style="left:-7px;top:99px;font-family:'Liberation Mono', monospace;font-size:12px;letter-spacing:-0.2px;line-height:15px;color:#000;white-space:pre">sim:/testbench_aes_sbox/output_bytes_2d \</div>
<div style="left:-7px;top:114px;font-family:'Liberation Mono', monospace;font-size:12px;letter-spacing:-0.2px;line-height:15px;color:#000;white-space:pre">sim:/testbench_aes_sbox/output_bytes_1d \</div>
<div style="left:-7px;top:129px;font-family:'Liberation Mono', monospace;font-size:12px;letter-spacing:-0.2px;line-height:15px;color:#000;white-space:pre">sim:/testbench_aes_sbox/a \</div>
<div style="left:-7px;top:144px;font-family:'Liberation Mono', monospace;font-size:12px;letter-spacing:-0.2px;line-height:15px;color:#000;white-space:pre">sim:/testbench_aes_sbox/y</div>
<div style="left:-5px;top:159px;font-size:11px;line-height:15px;color:#000;white-space:pre">SIM 21&gt;</div>
<div style="left:43px;top:159px;font-family:'Liberation Mono', monospace;font-size:12px;letter-spacing:-0.2px;line-height:15px;color:#000;white-space:pre">run 1000000</div>
<div style="left:0px;top:174px;font-family:'Liberation Mono', monospace;font-size:12px;letter-spacing:-0.2px;line-height:15px;color:#3030ff;white-space:pre"> ** Note: $stop    : C:/Users/sanarayanan/my_designs/AES/source/AES_code/aes_sbox_tb.sv(68)</div>
<div style="left:0px;top:189px;font-family:'Liberation Mono', monospace;font-size:12px;letter-spacing:-0.2px;line-height:15px;color:#3030ff;white-space:pre">    Time: 880 ns  Iteration: 0  Instance: /testbench_aes_sbox</div>
<div style="left:0px;top:204px;font-family:'Liberation Mono', monospace;font-size:12px;letter-spacing:-0.2px;line-height:15px;color:#209020;white-space:pre"> Break in Module testbench_aes_sbox at C:/Users/sanarayanan/my_designs/AES/source/AES_code/aes_sbox_tb.sv line 68</div>
<div style="left:-5px;top:234px;font-size:11px;line-height:15px;color:#000;white-space:pre">SIM 22&gt;</div>
</div>
</body></html>
